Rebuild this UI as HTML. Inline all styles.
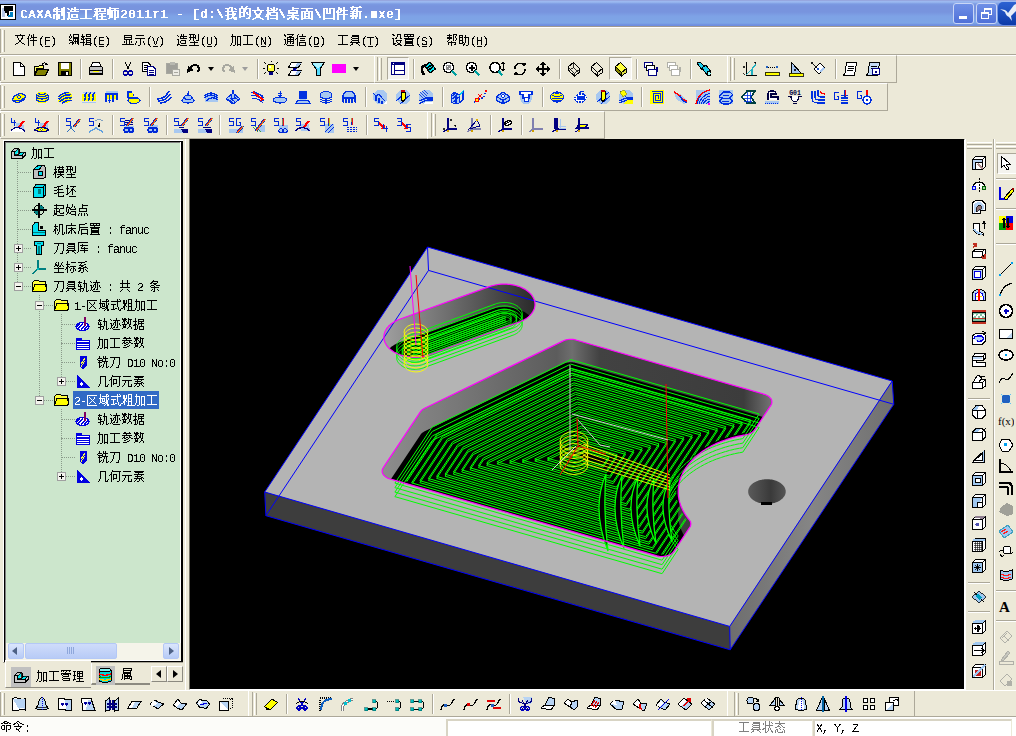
<!DOCTYPE html><html><head><meta charset="utf-8"><style>
*{margin:0;padding:0;box-sizing:border-box}
html,body{width:1016px;height:736px;overflow:hidden;background:#ECE9D8;font-family:"Liberation Sans",sans-serif;font-size:12px;color:#000}
.a{position:absolute}
.ic{position:absolute;width:16px;height:16px}
.sep{position:absolute;width:2px;border-left:1px solid #ACA899;border-right:1px solid #fff}
.grip{position:absolute;width:6px;border-left:1px solid #fff;border-right:1px solid #ACA899;box-shadow:inset -1px 0 0 #ECE9D8, inset -2px 0 0 #fff}
.cj{display:inline-block;text-align:center;overflow:visible;white-space:nowrap}
.mono{font-family:"Liberation Mono",monospace}
</style></head><body><div class="a" style="left:0;top:0;width:1016px;height:27px;background:linear-gradient(#97a7df 0,#97a7df 1px,#9cb9f0 1px,#9cb9f0 2px,#7b9ae2 4px,#7894de 6px,#7894de 12px,#7ea2e6 16px,#7ea6e6 23px,#6f8ee0 25px,#6f8ee0 26px,#a09a90 26px)"></div>
<svg class="ic" style="left:0.0px;top:4.0px;width:16px;height:16px" viewBox="0 0 16 16" shape-rendering="crispEdges"><rect x="0.5" y="0.5" width="15" height="15" fill="#fff" stroke="#000"/><rect x="2" y="4" width="3" height="9" fill="#b8c8e8"/><path d="M4 2H13V7H9V12H7V9H5V7H4Z" fill="#000"/><path d="M10 8H13V13H8V11H10Z" fill="#0080c0"/></svg>
<svg class="a" style="left:20px;top:4px" width="386" height="18" viewBox="0 0 386 18" shape-rendering="crispEdges"><path d="M221 2h2v1h-2zM226 2h2v1h-2zM332 2h2v1h-2zM339 2h2v1h-2zM36 3h2v1h-2zM43 3h2v1h-2zM54 3h2v1h-2zM89 3h2v1h-2zM209 3h4v1h-4zM221 3h2v1h-2zM225 3h2v1h-2zM237 3h2v1h-2zM247 3h2v1h-2zM253 3h2v1h-2zM272 3h2v1h-2zM318 3h2v1h-2zM323 3h2v1h-2zM330 3h12v1h-12zM34 4h4v1h-4zM41 4h4v1h-4zM47 4h2v1h-2zM51 4h2v1h-2zM54 4h2v1h-2zM75 4h11v1h-11zM89 4h10v1h-10zM205 4h5v1h-5zM211 4h2v1h-2zM214 4h2v1h-2zM219 4h12v1h-12zM237 4h2v1h-2zM247 4h2v1h-2zM250 4h2v1h-2zM253 4h2v1h-2zM256 4h2v1h-2zM272 4h7v1h-7zM281 4h12v1h-12zM303 4h5v1h-5zM309 4h6v1h-6zM318 4h4v1h-4zM323 4h2v1h-2zM331 4h2v1h-2zM336 4h2v1h-2zM33 5h7v1h-7zM41 5h4v1h-4zM48 5h2v1h-2zM51 5h8v1h-8zM60 5h12v1h-12zM74 5h4v1h-4zM79 5h2v1h-2zM84 5h2v1h-2zM87 5h4v1h-4zM94 5h2v1h-2zM174 5h5v1h-5zM185 5h2v1h-2zM197 5h2v1h-2zM207 5h2v1h-2zM211 5h2v1h-2zM215 5h2v1h-2zM219 5h2v1h-2zM223 5h4v1h-4zM229 5h2v1h-2zM237 5h3v1h-3zM247 5h2v1h-2zM251 5h4v1h-4zM256 5h2v1h-2zM259 5h2v1h-2zM272 5h2v1h-2zM286 5h2v1h-2zM295 5h2v1h-2zM303 5h2v1h-2zM306 5h2v1h-2zM309 5h2v1h-2zM313 5h2v1h-2zM318 5h4v1h-4zM323 5h2v1h-2zM331 5h2v1h-2zM334 5h4v1h-4zM375 5h5v1h-5zM2 6h4v1h-4zM11 6h2v1h-2zM17 6h2v1h-2zM21 6h2v1h-2zM27 6h2v1h-2zM33 6h2v1h-2zM36 6h2v1h-2zM41 6h4v1h-4zM50 6h2v1h-2zM54 6h2v1h-2zM65 6h2v1h-2zM76 6h2v1h-2zM79 6h2v1h-2zM84 6h2v1h-2zM87 6h12v1h-12zM102 6h4v1h-4zM110 6h4v1h-4zM119 6h2v1h-2zM127 6h2v1h-2zM143 6h2v1h-2zM174 6h2v1h-2zM185 6h2v1h-2zM197 6h2v1h-2zM207 6h2v1h-2zM211 6h2v1h-2zM219 6h2v1h-2zM223 6h3v1h-3zM229 6h2v1h-2zM232 6h12v1h-12zM246 6h11v1h-11zM259 6h2v1h-2zM268 6h10v1h-10zM286 6h2v1h-2zM295 6h2v1h-2zM303 6h2v1h-2zM306 6h2v1h-2zM309 6h2v1h-2zM313 6h2v1h-2zM317 6h2v1h-2zM320 6h8v1h-8zM333 6h2v1h-2zM336 6h2v1h-2zM378 6h2v1h-2zM1 7h2v1h-2zM5 7h2v1h-2zM10 7h4v1h-4zM17 7h6v1h-6zM26 7h4v1h-4zM33 7h12v1h-12zM50 7h9v1h-9zM65 7h2v1h-2zM74 7h12v1h-12zM87 7h6v1h-6zM94 7h2v1h-2zM97 7h2v1h-2zM101 7h2v1h-2zM105 7h2v1h-2zM109 7h2v1h-2zM113 7h2v1h-2zM117 7h4v1h-4zM125 7h4v1h-4zM133 7h6v1h-6zM141 7h4v1h-4zM174 7h2v1h-2zM182 7h5v1h-5zM191 7h2v1h-2zM198 7h2v1h-2zM205 7h12v1h-12zM219 7h2v1h-2zM223 7h3v1h-3zM229 7h2v1h-2zM234 7h2v1h-2zM240 7h2v1h-2zM247 7h2v1h-2zM253 7h2v1h-2zM260 7h2v1h-2zM268 7h2v1h-2zM276 7h2v1h-2zM281 7h12v1h-12zM296 7h2v1h-2zM303 7h2v1h-2zM306 7h2v1h-2zM309 7h2v1h-2zM313 7h2v1h-2zM316 7h3v1h-3zM320 7h2v1h-2zM323 7h2v1h-2zM330 7h12v1h-12zM351 7h6v1h-6zM359 7h2v1h-2zM363 7h2v1h-2zM368 7h4v1h-4zM378 7h2v1h-2zM1 8h2v1h-2zM10 8h4v1h-4zM18 8h4v1h-4zM26 8h4v1h-4zM36 8h2v1h-2zM41 8h4v1h-4zM47 8h3v1h-3zM65 8h2v1h-2zM75 8h3v1h-3zM87 8h6v1h-6zM94 8h2v1h-2zM97 8h2v1h-2zM105 8h2v1h-2zM109 8h2v1h-2zM113 8h2v1h-2zM119 8h2v1h-2zM127 8h2v1h-2zM134 8h3v1h-3zM143 8h2v1h-2zM174 8h2v1h-2zM181 8h2v1h-2zM184 8h3v1h-3zM191 8h2v1h-2zM198 8h3v1h-3zM207 8h2v1h-2zM212 8h2v1h-2zM219 8h6v1h-6zM226 8h2v1h-2zM229 8h2v1h-2zM234 8h2v1h-2zM240 8h2v1h-2zM247 8h11v1h-11zM260 8h3v1h-3zM268 8h10v1h-10zM281 8h2v1h-2zM284 8h2v1h-2zM288 8h2v1h-2zM291 8h2v1h-2zM296 8h3v1h-3zM303 8h2v1h-2zM306 8h2v1h-2zM309 8h2v1h-2zM313 8h2v1h-2zM316 8h5v1h-5zM323 8h2v1h-2zM332 8h2v1h-2zM336 8h2v1h-2zM339 8h2v1h-2zM351 8h6v1h-6zM360 8h4v1h-4zM367 8h2v1h-2zM371 8h2v1h-2zM378 8h2v1h-2zM1 9h2v1h-2zM10 9h4v1h-4zM19 9h2v1h-2zM26 9h4v1h-4zM36 9h2v1h-2zM41 9h4v1h-4zM48 9h2v1h-2zM65 9h2v1h-2zM75 9h3v1h-3zM79 9h7v1h-7zM87 9h6v1h-6zM94 9h2v1h-2zM97 9h2v1h-2zM104 9h3v1h-3zM109 9h6v1h-6zM119 9h2v1h-2zM127 9h2v1h-2zM134 9h2v1h-2zM143 9h2v1h-2zM174 9h2v1h-2zM181 9h2v1h-2zM185 9h2v1h-2zM199 9h2v1h-2zM207 9h2v1h-2zM212 9h4v1h-4zM219 9h2v1h-2zM223 9h2v1h-2zM226 9h2v1h-2zM229 9h2v1h-2zM235 9h2v1h-2zM239 9h2v1h-2zM247 9h4v1h-4zM256 9h2v1h-2zM261 9h2v1h-2zM268 9h10v1h-10zM281 9h2v1h-2zM284 9h6v1h-6zM291 9h2v1h-2zM297 9h2v1h-2zM303 9h2v1h-2zM306 9h5v1h-5zM313 9h2v1h-2zM317 9h2v1h-2zM323 9h2v1h-2zM330 9h8v1h-8zM339 9h2v1h-2zM351 9h6v1h-6zM360 9h4v1h-4zM367 9h2v1h-2zM371 9h2v1h-2zM378 9h2v1h-2zM1 10h2v1h-2zM9 10h2v1h-2zM13 10h2v1h-2zM18 10h4v1h-4zM25 10h2v1h-2zM29 10h2v1h-2zM33 10h7v1h-7zM41 10h4v1h-4zM48 10h2v1h-2zM51 10h7v1h-7zM65 10h2v1h-2zM74 10h5v1h-5zM81 10h2v1h-2zM87 10h6v1h-6zM94 10h2v1h-2zM97 10h2v1h-2zM103 10h3v1h-3zM109 10h2v1h-2zM113 10h2v1h-2zM119 10h2v1h-2zM127 10h2v1h-2zM134 10h2v1h-2zM143 10h2v1h-2zM158 10h4v1h-4zM174 10h2v1h-2zM181 10h2v1h-2zM185 10h2v1h-2zM199 10h3v1h-3zM207 10h9v1h-9zM219 10h2v1h-2zM223 10h2v1h-2zM227 10h4v1h-4zM235 10h6v1h-6zM246 10h5v1h-5zM256 10h2v1h-2zM261 10h3v1h-3zM272 10h2v1h-2zM281 10h2v1h-2zM284 10h2v1h-2zM288 10h2v1h-2zM291 10h2v1h-2zM297 10h3v1h-3zM303 10h2v1h-2zM313 10h2v1h-2zM317 10h11v1h-11zM332 10h2v1h-2zM336 10h2v1h-2zM339 10h2v1h-2zM351 10h6v1h-6zM361 10h2v1h-2zM367 10h6v1h-6zM378 10h2v1h-2zM1 11h2v1h-2zM9 11h6v1h-6zM18 11h4v1h-4zM25 11h6v1h-6zM33 11h2v1h-2zM36 11h4v1h-4zM41 11h4v1h-4zM48 11h2v1h-2zM51 11h2v1h-2zM56 11h2v1h-2zM65 11h2v1h-2zM74 11h4v1h-4zM81 11h2v1h-2zM89 11h4v1h-4zM94 11h2v1h-2zM97 11h2v1h-2zM102 11h2v1h-2zM109 11h2v1h-2zM113 11h2v1h-2zM119 11h2v1h-2zM127 11h2v1h-2zM134 11h2v1h-2zM143 11h2v1h-2zM174 11h2v1h-2zM181 11h2v1h-2zM185 11h2v1h-2zM200 11h2v1h-2zM205 11h4v1h-4zM212 11h3v1h-3zM219 11h2v1h-2zM223 11h2v1h-2zM229 11h2v1h-2zM236 11h4v1h-4zM246 11h3v1h-3zM250 11h8v1h-8zM262 11h2v1h-2zM267 11h12v1h-12zM281 11h2v1h-2zM284 11h2v1h-2zM288 11h2v1h-2zM291 11h2v1h-2zM298 11h2v1h-2zM303 11h2v1h-2zM313 11h2v1h-2zM317 11h2v1h-2zM323 11h2v1h-2zM330 11h8v1h-8zM339 11h2v1h-2zM351 11h6v1h-6zM360 11h4v1h-4zM367 11h2v1h-2zM378 11h2v1h-2zM1 12h3v1h-3zM5 12h2v1h-2zM9 12h2v1h-2zM13 12h2v1h-2zM17 12h2v1h-2zM21 12h2v1h-2zM25 12h2v1h-2zM29 12h2v1h-2zM33 12h2v1h-2zM36 12h4v1h-4zM43 12h2v1h-2zM48 12h2v1h-2zM51 12h2v1h-2zM56 12h2v1h-2zM65 12h2v1h-2zM73 12h2v1h-2zM76 12h2v1h-2zM79 12h7v1h-7zM89 12h4v1h-4zM94 12h2v1h-2zM97 12h2v1h-2zM101 12h2v1h-2zM109 12h2v1h-2zM113 12h2v1h-2zM119 12h2v1h-2zM127 12h2v1h-2zM134 12h2v1h-2zM143 12h2v1h-2zM174 12h2v1h-2zM181 12h2v1h-2zM184 12h3v1h-3zM191 12h2v1h-2zM201 12h2v1h-2zM207 12h2v1h-2zM212 12h2v1h-2zM219 12h6v1h-6zM229 12h2v1h-2zM236 12h4v1h-4zM245 12h4v1h-4zM256 12h2v1h-2zM263 12h2v1h-2zM271 12h4v1h-4zM281 12h2v1h-2zM284 12h6v1h-6zM291 12h2v1h-2zM299 12h2v1h-2zM303 12h2v1h-2zM313 12h2v1h-2zM317 12h2v1h-2zM323 12h2v1h-2zM330 12h8v1h-8zM339 12h2v1h-2zM345 12h2v1h-2zM351 12h6v1h-6zM360 12h4v1h-4zM367 12h2v1h-2zM371 12h2v1h-2zM378 12h2v1h-2zM2 13h5v1h-5zM8 13h2v1h-2zM14 13h2v1h-2zM17 13h2v1h-2zM21 13h2v1h-2zM24 13h2v1h-2zM30 13h2v1h-2zM33 13h2v1h-2zM36 13h4v1h-4zM43 13h2v1h-2zM48 13h2v1h-2zM51 13h7v1h-7zM65 13h2v1h-2zM76 13h2v1h-2zM81 13h2v1h-2zM89 13h4v1h-4zM94 13h5v1h-5zM101 13h6v1h-6zM110 13h4v1h-4zM117 13h7v1h-7zM125 13h7v1h-7zM134 13h2v1h-2zM141 13h7v1h-7zM174 13h2v1h-2zM182 13h5v1h-5zM191 13h2v1h-2zM201 13h2v1h-2zM207 13h2v1h-2zM211 13h6v1h-6zM219 13h2v1h-2zM228 13h2v1h-2zM235 13h6v1h-6zM247 13h2v1h-2zM256 13h2v1h-2zM263 13h2v1h-2zM269 13h8v1h-8zM281 13h2v1h-2zM284 13h2v1h-2zM288 13h2v1h-2zM291 13h2v1h-2zM299 13h2v1h-2zM303 13h2v1h-2zM313 13h2v1h-2zM317 13h2v1h-2zM323 13h2v1h-2zM332 13h2v1h-2zM335 13h2v1h-2zM339 13h2v1h-2zM345 13h2v1h-2zM351 13h6v1h-6zM359 13h2v1h-2zM363 13h2v1h-2zM368 13h4v1h-4zM378 13h2v1h-2zM33 14h2v1h-2zM36 14h4v1h-4zM43 14h2v1h-2zM47 14h4v1h-4zM60 14h12v1h-12zM76 14h2v1h-2zM81 14h2v1h-2zM88 14h2v1h-2zM94 14h2v1h-2zM174 14h2v1h-2zM207 14h5v1h-5zM213 14h4v1h-4zM226 14h4v1h-4zM233 14h3v1h-3zM240 14h3v1h-3zM247 14h2v1h-2zM250 14h8v1h-8zM267 14h3v1h-3zM272 14h2v1h-2zM275 14h4v1h-4zM281 14h12v1h-12zM303 14h12v1h-12zM317 14h2v1h-2zM323 14h2v1h-2zM331 14h3v1h-3zM335 14h2v1h-2zM339 14h2v1h-2zM378 14h2v1h-2zM36 15h2v1h-2zM41 15h4v1h-4zM47 15h2v1h-2zM50 15h9v1h-9zM76 15h11v1h-11zM94 15h2v1h-2zM174 15h5v1h-5zM206 15h3v1h-3zM214 15h3v1h-3zM232 15h2v1h-2zM242 15h2v1h-2zM247 15h2v1h-2zM256 15h2v1h-2zM267 15h2v1h-2zM272 15h2v1h-2zM277 15h2v1h-2zM281 15h2v1h-2zM291 15h2v1h-2zM303 15h2v1h-2zM313 15h2v1h-2zM317 15h2v1h-2zM323 15h2v1h-2zM375 15h5v1h-5z" fill="#fff"/></svg>
<div class="a" style="left:953px;top:3px;width:21px;height:21px;border:1px solid #c9d6f6;border-radius:3px;background:linear-gradient(#6f90e6,#4f70d8)"><div class="a" style="left:5px;top:12px;width:8px;height:3px;background:#fff"></div></div>
<div class="a" style="left:976px;top:3px;width:21px;height:21px;border:1px solid #c9d6f6;border-radius:3px;background:linear-gradient(#6f90e6,#4f70d8)"><div class="a" style="left:7px;top:4px;width:8px;height:7px;border:1px solid #fff;border-top-width:2px"></div><div class="a" style="left:4px;top:8px;width:8px;height:7px;border:1px solid #fff;border-top-width:2px;background:#5f80df"></div></div>
<div class="a" style="left:998px;top:2px;width:22px;height:23px;border-radius:5px;background:linear-gradient(#2d62d2,#0c3aa8)"></div>
<svg class="a" style="left:999px;top:2px" width="17" height="22" viewBox="0 0 17 22"><path d="M1 7L6 8Q8 9 9 11L15 3L17 2V9L12 14L13 19L10 15Q7 14 6 10Z" fill="#e8eef8"/></svg>
<div class="a" style="left:0;top:27px;width:1016px;height:1px;background:#fff"></div>
<div class="a" style="left:0;top:54px;width:1016px;height:1px;background:#ACA899"></div>
<div class="a" style="left:0;top:55px;width:1016px;height:1px;background:#fff"></div>
<div class="a" style="left:0px;top:55px;width:375px;height:28px;border-top:1px solid #fff;border-left:1px solid #fff;border-right:1px solid #ACA899;border-bottom:1px solid #ACA899"></div>
<div class="a" style="left:374px;top:55px;width:354px;height:28px;border-top:1px solid #fff;border-left:1px solid #fff;border-right:1px solid #ACA899;border-bottom:1px solid #ACA899"></div>
<div class="a" style="left:727px;top:55px;width:170px;height:28px;border-top:1px solid #fff;border-left:1px solid #fff;border-right:1px solid #ACA899;border-bottom:1px solid #ACA899"></div>
<div class="a" style="left:0px;top:83px;width:888px;height:28px;border-top:1px solid #fff;border-left:1px solid #fff;border-right:1px solid #ACA899;border-bottom:1px solid #ACA899"></div>
<div class="a" style="left:0px;top:111px;width:428px;height:28px;border-top:1px solid #fff;border-left:1px solid #fff;border-right:1px solid #ACA899;border-bottom:1px solid #ACA899"></div>
<div class="a" style="left:427px;top:111px;width:178px;height:28px;border-top:1px solid #fff;border-left:1px solid #fff;border-right:1px solid #ACA899;border-bottom:1px solid #ACA899"></div>
<div class="a" style="left:2px;top:30px;width:3px;height:22px;border-left:1px solid #fff;border-right:1px solid #ACA899"></div>
<div class="a" style="left:0px;top:29px;width:1px;height:24px;background:#ACA899"></div>
<svg class="a" style="left:13.5px;top:34px" width="46" height="16" viewBox="0 0 46 16" shape-rendering="crispEdges"><path d="M6 0h1v1h-1zM15 0h1v1h-1zM19 0h1v1h-1zM1 1h10v1h-10zM15 1h1v1h-1zM17 1h1v1h-1zM19 1h1v1h-1zM3 2h1v1h-1zM8 2h1v1h-1zM14 2h1v1h-1zM17 2h1v1h-1zM19 2h1v1h-1zM28 2h1v1h-1zM38 2h1v1h-1zM3 3h1v1h-1zM8 3h1v1h-1zM14 3h1v1h-1zM17 3h6v1h-6zM27 3h1v1h-1zM31 3h5v1h-5zM39 3h1v1h-1zM4 4h1v1h-1zM7 4h2v1h-2zM13 4h2v1h-2zM16 4h1v1h-1zM19 4h1v1h-1zM26 4h2v1h-2zM31 4h1v1h-1zM39 4h2v1h-2zM4 5h1v1h-1zM7 5h1v1h-1zM14 5h1v1h-1zM19 5h1v1h-1zM26 5h1v1h-1zM31 5h1v1h-1zM40 5h1v1h-1zM5 6h2v1h-2zM14 6h1v1h-1zM16 6h7v1h-7zM26 6h1v1h-1zM31 6h5v1h-5zM40 6h1v1h-1zM5 7h2v1h-2zM14 7h1v1h-1zM19 7h1v1h-1zM26 7h1v1h-1zM31 7h1v1h-1zM40 7h1v1h-1zM4 8h1v1h-1zM7 8h1v1h-1zM14 8h1v1h-1zM19 8h1v1h-1zM26 8h1v1h-1zM31 8h1v1h-1zM40 8h1v1h-1zM2 9h2v1h-2zM8 9h2v1h-2zM14 9h1v1h-1zM19 9h1v1h-1zM26 9h1v1h-1zM31 9h1v1h-1zM40 9h1v1h-1zM1 10h1v1h-1zM10 10h1v1h-1zM14 10h1v1h-1zM19 10h1v1h-1zM26 10h2v1h-2zM31 10h1v1h-1zM39 10h2v1h-2zM14 11h1v1h-1zM19 11h1v1h-1zM27 11h1v1h-1zM39 11h1v1h-1zM28 12h1v1h-1zM38 12h1v1h-1z" fill="#000"/></svg>
<div class="a" style="left:44.5px;top:46px;width:5px;height:1px;background:#000"></div>
<svg class="a" style="left:67.7px;top:34px" width="46" height="16" viewBox="0 0 46 16" shape-rendering="crispEdges"><path d="M2 0h1v1h-1zM5 0h6v1h-6zM14 0h1v1h-1zM18 0h5v1h-5zM2 1h1v1h-1zM5 1h1v1h-1zM10 1h1v1h-1zM14 1h1v1h-1zM18 1h1v1h-1zM22 1h1v1h-1zM1 2h1v1h-1zM3 2h1v1h-1zM5 2h1v1h-1zM10 2h1v1h-1zM13 2h4v1h-4zM18 2h5v1h-5zM28 2h1v1h-1zM38 2h1v1h-1zM1 3h1v1h-1zM3 3h1v1h-1zM5 3h6v1h-6zM14 3h2v1h-2zM27 3h1v1h-1zM31 3h5v1h-5zM39 3h1v1h-1zM2 4h1v1h-1zM5 4h6v1h-6zM13 4h1v1h-1zM15 4h1v1h-1zM17 4h6v1h-6zM26 4h2v1h-2zM31 4h1v1h-1zM39 4h2v1h-2zM1 5h1v1h-1zM5 5h1v1h-1zM7 5h1v1h-1zM9 5h2v1h-2zM13 5h4v1h-4zM18 5h1v1h-1zM22 5h1v1h-1zM26 5h1v1h-1zM31 5h1v1h-1zM40 5h1v1h-1zM1 6h3v1h-3zM5 6h1v1h-1zM7 6h1v1h-1zM9 6h2v1h-2zM15 6h1v1h-1zM18 6h5v1h-5zM26 6h1v1h-1zM31 6h5v1h-5zM40 6h1v1h-1zM4 7h1v1h-1zM6 7h5v1h-5zM15 7h1v1h-1zM18 7h1v1h-1zM22 7h1v1h-1zM26 7h1v1h-1zM31 7h1v1h-1zM40 7h1v1h-1zM2 8h4v1h-4zM7 8h1v1h-1zM9 8h2v1h-2zM12 8h5v1h-5zM18 8h5v1h-5zM26 8h1v1h-1zM31 8h1v1h-1zM40 8h1v1h-1zM1 9h1v1h-1zM4 9h2v1h-2zM7 9h1v1h-1zM9 9h2v1h-2zM15 9h1v1h-1zM18 9h1v1h-1zM22 9h2v1h-2zM26 9h1v1h-1zM31 9h1v1h-1zM40 9h1v1h-1zM4 10h1v1h-1zM10 10h1v1h-1zM15 10h1v1h-1zM17 10h6v1h-6zM26 10h2v1h-2zM31 10h5v1h-5zM39 10h2v1h-2zM15 11h1v1h-1zM22 11h1v1h-1zM27 11h1v1h-1zM39 11h1v1h-1zM28 12h1v1h-1zM38 12h1v1h-1z" fill="#000"/></svg>
<div class="a" style="left:98.7px;top:46px;width:5px;height:1px;background:#000"></div>
<svg class="a" style="left:121.8px;top:34px" width="46" height="16" viewBox="0 0 46 16" shape-rendering="crispEdges"><path d="M2 1h8v1h-8zM14 1h8v1h-8zM2 2h1v1h-1zM9 2h1v1h-1zM28 2h1v1h-1zM38 2h1v1h-1zM2 3h8v1h-8zM27 3h1v1h-1zM30 3h1v1h-1zM36 3h1v1h-1zM39 3h1v1h-1zM2 4h1v1h-1zM9 4h1v1h-1zM13 4h10v1h-10zM26 4h2v1h-2zM31 4h1v1h-1zM35 4h1v1h-1zM39 4h2v1h-2zM2 5h8v1h-8zM18 5h1v1h-1zM26 5h1v1h-1zM31 5h1v1h-1zM35 5h1v1h-1zM40 5h1v1h-1zM4 6h1v1h-1zM7 6h1v1h-1zM18 6h1v1h-1zM26 6h1v1h-1zM31 6h1v1h-1zM35 6h1v1h-1zM40 6h1v1h-1zM2 7h1v1h-1zM4 7h1v1h-1zM7 7h1v1h-1zM9 7h1v1h-1zM14 7h1v1h-1zM18 7h1v1h-1zM21 7h1v1h-1zM26 7h1v1h-1zM32 7h1v1h-1zM34 7h1v1h-1zM40 7h1v1h-1zM2 8h1v1h-1zM4 8h1v1h-1zM7 8h1v1h-1zM9 8h1v1h-1zM14 8h1v1h-1zM18 8h1v1h-1zM21 8h1v1h-1zM26 8h1v1h-1zM32 8h1v1h-1zM34 8h1v1h-1zM40 8h1v1h-1zM4 9h1v1h-1zM7 9h1v1h-1zM13 9h1v1h-1zM18 9h1v1h-1zM22 9h1v1h-1zM26 9h1v1h-1zM32 9h1v1h-1zM34 9h1v1h-1zM40 9h1v1h-1zM0 10h12v1h-12zM13 10h1v1h-1zM18 10h1v1h-1zM22 10h1v1h-1zM26 10h2v1h-2zM33 10h1v1h-1zM39 10h2v1h-2zM16 11h2v1h-2zM27 11h1v1h-1zM39 11h1v1h-1zM28 12h1v1h-1zM38 12h1v1h-1z" fill="#000"/></svg>
<div class="a" style="left:152.8px;top:46px;width:5px;height:1px;background:#000"></div>
<svg class="a" style="left:176px;top:34px" width="46" height="16" viewBox="0 0 46 16" shape-rendering="crispEdges"><path d="M5 0h1v1h-1zM7 0h1v1h-1zM13 0h6v1h-6zM22 0h1v1h-1zM1 1h1v1h-1zM5 1h1v1h-1zM7 1h1v1h-1zM14 1h1v1h-1zM17 1h1v1h-1zM19 1h1v1h-1zM22 1h1v1h-1zM2 2h1v1h-1zM4 2h7v1h-7zM14 2h1v1h-1zM17 2h1v1h-1zM19 2h1v1h-1zM22 2h1v1h-1zM28 2h1v1h-1zM38 2h1v1h-1zM4 3h1v1h-1zM7 3h1v1h-1zM13 3h7v1h-7zM22 3h1v1h-1zM27 3h1v1h-1zM31 3h1v1h-1zM35 3h1v1h-1zM39 3h1v1h-1zM4 4h7v1h-7zM14 4h1v1h-1zM17 4h1v1h-1zM19 4h1v1h-1zM22 4h1v1h-1zM26 4h2v1h-2zM31 4h1v1h-1zM35 4h1v1h-1zM39 4h2v1h-2zM1 5h2v1h-2zM14 5h1v1h-1zM17 5h1v1h-1zM22 5h1v1h-1zM26 5h1v1h-1zM31 5h1v1h-1zM35 5h1v1h-1zM40 5h1v1h-1zM2 6h1v1h-1zM5 6h5v1h-5zM13 6h1v1h-1zM17 6h1v1h-1zM20 6h3v1h-3zM26 6h1v1h-1zM31 6h1v1h-1zM35 6h1v1h-1zM40 6h1v1h-1zM2 7h1v1h-1zM4 7h1v1h-1zM9 7h1v1h-1zM18 7h1v1h-1zM26 7h1v1h-1zM31 7h1v1h-1zM35 7h1v1h-1zM40 7h1v1h-1zM2 8h1v1h-1zM4 8h1v1h-1zM9 8h1v1h-1zM14 8h8v1h-8zM26 8h1v1h-1zM31 8h1v1h-1zM35 8h1v1h-1zM40 8h1v1h-1zM2 9h1v1h-1zM5 9h5v1h-5zM18 9h1v1h-1zM26 9h1v1h-1zM31 9h1v1h-1zM35 9h1v1h-1zM40 9h1v1h-1zM1 10h3v1h-3zM18 10h1v1h-1zM26 10h2v1h-2zM32 10h3v1h-3zM39 10h2v1h-2zM1 11h1v1h-1zM4 11h7v1h-7zM13 11h10v1h-10zM27 11h1v1h-1zM39 11h1v1h-1zM28 12h1v1h-1zM38 12h1v1h-1z" fill="#000"/></svg>
<div class="a" style="left:207px;top:46px;width:5px;height:1px;background:#000"></div>
<svg class="a" style="left:230px;top:34px" width="46" height="16" viewBox="0 0 46 16" shape-rendering="crispEdges"><path d="M2 0h1v1h-1zM2 1h1v1h-1zM13 1h10v1h-10zM1 2h5v1h-5zM7 2h4v1h-4zM17 2h1v1h-1zM28 2h1v1h-1zM38 2h1v1h-1zM2 3h1v1h-1zM5 3h1v1h-1zM7 3h1v1h-1zM10 3h1v1h-1zM17 3h1v1h-1zM27 3h1v1h-1zM31 3h1v1h-1zM35 3h1v1h-1zM39 3h1v1h-1zM2 4h1v1h-1zM5 4h1v1h-1zM7 4h1v1h-1zM10 4h1v1h-1zM17 4h1v1h-1zM26 4h2v1h-2zM31 4h2v1h-2zM35 4h1v1h-1zM39 4h2v1h-2zM2 5h1v1h-1zM5 5h1v1h-1zM7 5h1v1h-1zM10 5h1v1h-1zM17 5h1v1h-1zM26 5h1v1h-1zM31 5h2v1h-2zM35 5h1v1h-1zM40 5h1v1h-1zM2 6h1v1h-1zM5 6h1v1h-1zM7 6h1v1h-1zM10 6h1v1h-1zM17 6h1v1h-1zM26 6h1v1h-1zM31 6h1v1h-1zM33 6h1v1h-1zM35 6h1v1h-1zM40 6h1v1h-1zM2 7h1v1h-1zM5 7h1v1h-1zM7 7h1v1h-1zM10 7h1v1h-1zM17 7h1v1h-1zM26 7h1v1h-1zM31 7h1v1h-1zM33 7h1v1h-1zM35 7h1v1h-1zM40 7h1v1h-1zM2 8h1v1h-1zM5 8h1v1h-1zM7 8h1v1h-1zM10 8h1v1h-1zM17 8h1v1h-1zM26 8h1v1h-1zM31 8h1v1h-1zM34 8h2v1h-2zM40 8h1v1h-1zM1 9h1v1h-1zM5 9h1v1h-1zM7 9h1v1h-1zM10 9h1v1h-1zM17 9h1v1h-1zM26 9h1v1h-1zM31 9h1v1h-1zM34 9h2v1h-2zM40 9h1v1h-1zM1 10h1v1h-1zM5 10h1v1h-1zM7 10h4v1h-4zM13 10h10v1h-10zM26 10h2v1h-2zM31 10h1v1h-1zM35 10h1v1h-1zM39 10h2v1h-2zM0 11h1v1h-1zM3 11h2v1h-2zM7 11h1v1h-1zM10 11h1v1h-1zM27 11h1v1h-1zM39 11h1v1h-1zM28 12h1v1h-1zM38 12h1v1h-1z" fill="#000"/></svg>
<div class="a" style="left:261px;top:46px;width:5px;height:1px;background:#000"></div>
<svg class="a" style="left:283px;top:34px" width="46" height="16" viewBox="0 0 46 16" shape-rendering="crispEdges"><path d="M1 0h1v1h-1zM4 0h7v1h-7zM15 0h1v1h-1zM19 0h1v1h-1zM1 1h2v1h-2zM9 1h1v1h-1zM14 1h1v1h-1zM19 1h1v1h-1zM2 2h1v1h-1zM6 2h3v1h-3zM14 2h1v1h-1zM16 2h7v1h-7zM28 2h1v1h-1zM38 2h1v1h-1zM4 3h7v1h-7zM14 3h1v1h-1zM27 3h1v1h-1zM31 3h4v1h-4zM39 3h1v1h-1zM4 4h1v1h-1zM7 4h1v1h-1zM10 4h1v1h-1zM13 4h2v1h-2zM17 4h5v1h-5zM26 4h2v1h-2zM31 4h1v1h-1zM34 4h2v1h-2zM39 4h2v1h-2zM1 5h2v1h-2zM4 5h7v1h-7zM12 5h1v1h-1zM14 5h1v1h-1zM26 5h1v1h-1zM31 5h1v1h-1zM35 5h1v1h-1zM40 5h1v1h-1zM2 6h1v1h-1zM4 6h1v1h-1zM7 6h1v1h-1zM10 6h1v1h-1zM14 6h1v1h-1zM17 6h5v1h-5zM26 6h1v1h-1zM31 6h1v1h-1zM35 6h1v1h-1zM40 6h1v1h-1zM2 7h1v1h-1zM4 7h7v1h-7zM14 7h1v1h-1zM26 7h1v1h-1zM31 7h1v1h-1zM35 7h1v1h-1zM40 7h1v1h-1zM2 8h1v1h-1zM4 8h1v1h-1zM7 8h1v1h-1zM10 8h1v1h-1zM14 8h1v1h-1zM16 8h7v1h-7zM26 8h1v1h-1zM31 8h1v1h-1zM35 8h1v1h-1zM40 8h1v1h-1zM2 9h1v1h-1zM4 9h1v1h-1zM7 9h1v1h-1zM9 9h2v1h-2zM14 9h1v1h-1zM16 9h1v1h-1zM22 9h1v1h-1zM26 9h1v1h-1zM31 9h1v1h-1zM34 9h2v1h-2zM40 9h1v1h-1zM1 10h1v1h-1zM3 10h1v1h-1zM14 10h1v1h-1zM16 10h1v1h-1zM22 10h1v1h-1zM26 10h2v1h-2zM31 10h4v1h-4zM39 10h2v1h-2zM4 11h7v1h-7zM14 11h1v1h-1zM16 11h7v1h-7zM27 11h1v1h-1zM39 11h1v1h-1zM28 12h1v1h-1zM38 12h1v1h-1z" fill="#000"/></svg>
<div class="a" style="left:314px;top:46px;width:5px;height:1px;background:#000"></div>
<svg class="a" style="left:337px;top:34px" width="46" height="16" viewBox="0 0 46 16" shape-rendering="crispEdges"><path d="M1 1h10v1h-10zM15 1h7v1h-7zM5 2h1v1h-1zM15 2h7v1h-7zM28 2h1v1h-1zM38 2h1v1h-1zM5 3h1v1h-1zM14 3h1v1h-1zM21 3h1v1h-1zM27 3h1v1h-1zM30 3h7v1h-7zM39 3h1v1h-1zM5 4h1v1h-1zM15 4h7v1h-7zM26 4h2v1h-2zM33 4h1v1h-1zM39 4h2v1h-2zM5 5h1v1h-1zM14 5h1v1h-1zM21 5h1v1h-1zM26 5h1v1h-1zM33 5h1v1h-1zM40 5h1v1h-1zM5 6h1v1h-1zM15 6h7v1h-7zM26 6h1v1h-1zM33 6h1v1h-1zM40 6h1v1h-1zM5 7h1v1h-1zM14 7h1v1h-1zM21 7h1v1h-1zM26 7h1v1h-1zM33 7h1v1h-1zM40 7h1v1h-1zM5 8h1v1h-1zM13 8h10v1h-10zM26 8h1v1h-1zM33 8h1v1h-1zM40 8h1v1h-1zM5 9h1v1h-1zM15 9h1v1h-1zM19 9h2v1h-2zM26 9h1v1h-1zM33 9h1v1h-1zM40 9h1v1h-1zM1 10h10v1h-10zM14 10h2v1h-2zM21 10h1v1h-1zM26 10h2v1h-2zM33 10h1v1h-1zM39 10h2v1h-2zM13 11h1v1h-1zM22 11h1v1h-1zM27 11h1v1h-1zM39 11h1v1h-1zM28 12h1v1h-1zM38 12h1v1h-1z" fill="#000"/></svg>
<div class="a" style="left:368px;top:46px;width:5px;height:1px;background:#000"></div>
<svg class="a" style="left:391px;top:34px" width="46" height="16" viewBox="0 0 46 16" shape-rendering="crispEdges"><path d="M1 0h2v1h-2zM6 0h4v1h-4zM13 0h10v1h-10zM2 1h2v1h-2zM6 1h1v1h-1zM9 1h1v1h-1zM13 1h1v1h-1zM16 1h1v1h-1zM19 1h1v1h-1zM22 1h1v1h-1zM6 2h1v1h-1zM9 2h1v1h-1zM13 2h10v1h-10zM28 2h1v1h-1zM38 2h1v1h-1zM5 3h1v1h-1zM9 3h1v1h-1zM17 3h1v1h-1zM27 3h1v1h-1zM32 3h3v1h-3zM39 3h1v1h-1zM1 4h2v1h-2zM4 4h2v1h-2zM9 4h2v1h-2zM13 4h10v1h-10zM26 4h2v1h-2zM31 4h1v1h-1zM35 4h1v1h-1zM39 4h2v1h-2zM2 5h1v1h-1zM14 5h8v1h-8zM26 5h1v1h-1zM31 5h1v1h-1zM40 5h1v1h-1zM2 6h1v1h-1zM5 6h6v1h-6zM14 6h1v1h-1zM21 6h1v1h-1zM26 6h1v1h-1zM31 6h3v1h-3zM40 6h1v1h-1zM2 7h1v1h-1zM5 7h1v1h-1zM9 7h1v1h-1zM14 7h8v1h-8zM26 7h1v1h-1zM34 7h2v1h-2zM40 7h1v1h-1zM2 8h1v1h-1zM6 8h1v1h-1zM9 8h1v1h-1zM14 8h8v1h-8zM26 8h1v1h-1zM35 8h1v1h-1zM40 8h1v1h-1zM2 9h3v1h-3zM7 9h2v1h-2zM14 9h8v1h-8zM26 9h1v1h-1zM31 9h1v1h-1zM35 9h1v1h-1zM40 9h1v1h-1zM2 10h2v1h-2zM6 10h4v1h-4zM14 10h1v1h-1zM21 10h1v1h-1zM26 10h2v1h-2zM31 10h5v1h-5zM39 10h2v1h-2zM4 11h2v1h-2zM9 11h2v1h-2zM13 11h10v1h-10zM27 11h1v1h-1zM39 11h1v1h-1zM28 12h1v1h-1zM38 12h1v1h-1z" fill="#000"/></svg>
<div class="a" style="left:422px;top:46px;width:5px;height:1px;background:#000"></div>
<svg class="a" style="left:445.5px;top:34px" width="46" height="16" viewBox="0 0 46 16" shape-rendering="crispEdges"><path d="M3 0h1v1h-1zM7 0h4v1h-4zM1 1h5v1h-5zM7 1h1v1h-1zM10 1h1v1h-1zM13 1h4v1h-4zM19 1h1v1h-1zM3 2h1v1h-1zM7 2h1v1h-1zM9 2h1v1h-1zM13 2h1v1h-1zM16 2h1v1h-1zM19 2h1v1h-1zM28 2h1v1h-1zM38 2h1v1h-1zM1 3h5v1h-5zM7 3h1v1h-1zM9 3h1v1h-1zM13 3h4v1h-4zM18 3h5v1h-5zM27 3h1v1h-1zM31 3h1v1h-1zM35 3h1v1h-1zM39 3h1v1h-1zM1 4h5v1h-5zM7 4h1v1h-1zM10 4h1v1h-1zM13 4h1v1h-1zM16 4h1v1h-1zM19 4h1v1h-1zM22 4h1v1h-1zM26 4h2v1h-2zM31 4h1v1h-1zM35 4h1v1h-1zM39 4h2v1h-2zM3 5h1v1h-1zM7 5h1v1h-1zM10 5h1v1h-1zM13 5h1v1h-1zM16 5h1v1h-1zM19 5h1v1h-1zM22 5h1v1h-1zM26 5h1v1h-1zM31 5h1v1h-1zM35 5h1v1h-1zM40 5h1v1h-1zM2 6h1v1h-1zM7 6h1v1h-1zM9 6h1v1h-1zM13 6h4v1h-4zM19 6h1v1h-1zM22 6h1v1h-1zM26 6h1v1h-1zM31 6h5v1h-5zM40 6h1v1h-1zM1 7h1v1h-1zM5 7h1v1h-1zM13 7h1v1h-1zM16 7h1v1h-1zM19 7h1v1h-1zM22 7h1v1h-1zM26 7h1v1h-1zM31 7h1v1h-1zM35 7h1v1h-1zM40 7h1v1h-1zM2 8h8v1h-8zM13 8h1v1h-1zM16 8h2v1h-2zM19 8h1v1h-1zM22 8h1v1h-1zM26 8h1v1h-1zM31 8h1v1h-1zM35 8h1v1h-1zM40 8h1v1h-1zM2 9h1v1h-1zM5 9h1v1h-1zM9 9h1v1h-1zM13 9h4v1h-4zM18 9h1v1h-1zM22 9h1v1h-1zM26 9h1v1h-1zM31 9h1v1h-1zM35 9h1v1h-1zM40 9h1v1h-1zM2 10h1v1h-1zM5 10h1v1h-1zM8 10h2v1h-2zM17 10h2v1h-2zM22 10h1v1h-1zM26 10h2v1h-2zM31 10h1v1h-1zM35 10h1v1h-1zM39 10h2v1h-2zM5 11h1v1h-1zM17 11h1v1h-1zM20 11h2v1h-2zM27 11h1v1h-1zM39 11h1v1h-1zM28 12h1v1h-1zM38 12h1v1h-1z" fill="#000"/></svg>
<div class="a" style="left:476.5px;top:46px;width:5px;height:1px;background:#000"></div>
<div class="a" style="left:2px;top:58px;width:3px;height:22px;border-left:1px solid #fff;border-right:1px solid #ACA899"></div>
<div class="a" style="left:0px;top:57px;width:1px;height:24px;background:#ACA899"></div>
<svg class="ic" style="left:11.0px;top:60.5px;width:16px;height:16px" viewBox="0 0 16 16" shape-rendering="crispEdges"><path d="M2.5 1.5H9.5L13.5 5.5V14.5H2.5Z" fill="#fff" stroke="#000"/><path d="M9.5 1.5V5.5H13.5" fill="none" stroke="#000"/></svg>
<svg class="ic" style="left:33.0px;top:60.5px;width:16px;height:16px" viewBox="0 0 16 16" shape-rendering="crispEdges"><path d="M1.5 5.5H5.5L6.5 4.5H10.5V7.5H4L1.5 14.5Z" fill="#ffff60" stroke="#000"/><path d="M1.5 14.5L4.5 8.5H15.5L12.5 14.5Z" fill="#808000" stroke="#000"/><path d="M9 3.5Q11 0.5 14 3" fill="none" stroke="#000"/><path d="M13 1L15 4L12 4Z" fill="#000"/></svg>
<svg class="ic" style="left:57.0px;top:60.5px;width:16px;height:16px" viewBox="0 0 16 16" shape-rendering="crispEdges"><path d="M1.5 1.5H14.5V14.5H1.5Z" fill="#808000" stroke="#000"/><rect x="4" y="2" width="8" height="6" fill="#fff"/><rect x="4" y="10" width="8" height="5" fill="#000"/><rect x="9" y="11" width="2" height="3" fill="#fff"/></svg>
<svg class="ic" style="left:88.0px;top:60.5px;width:16px;height:16px" viewBox="0 0 16 16" shape-rendering="crispEdges"><path d="M4.5 1.5H11.5L13 5H3Z" fill="#fff" stroke="#000"/><path d="M1.5 7.5Q1.5 5.5 4 5.5H12Q14.5 5.5 14.5 7.5V13.5H1.5Z" fill="#c0c0c0" stroke="#000"/><rect x="2" y="9" width="12" height="1" fill="#000"/><rect x="5" y="10" width="6" height="1" fill="#ff0"/><rect x="2" y="11.5" width="12" height="1.3" fill="#000"/></svg>
<svg class="ic" style="left:120.0px;top:60.5px;width:16px;height:16px" viewBox="0 0 16 16" shape-rendering="crispEdges"><path d="M5 1L8.5 8M11 1L7.5 8" stroke="#000" fill="none"/><circle cx="5.5" cy="12" r="2.2" fill="none" stroke="#0000a0" stroke-width="1.4"/><circle cx="10.5" cy="12" r="2.2" fill="none" stroke="#0000a0" stroke-width="1.4"/></svg>
<svg class="ic" style="left:141.0px;top:60.5px;width:16px;height:16px" viewBox="0 0 16 16" shape-rendering="crispEdges"><path d="M1.5 1.5H7L9 3.5V10.5H1.5Z" fill="#fff" stroke="#000"/><path d="M3 4H7M3 6H7M3 8H7" stroke="#000"/><path d="M6.5 5.5H12L14.5 8V14.5H6.5Z" fill="#fff" stroke="#000080"/><path d="M8 9H13M8 11H13M8 13H13" stroke="#000080"/></svg>
<svg class="ic" style="left:165.0px;top:60.5px;width:16px;height:16px" viewBox="0 0 16 16" shape-rendering="crispEdges"><path d="M1.5 2.5H12.5V12.5H1.5Z" fill="#a0a09a" stroke="#a8a8a0"/><rect x="5" y="1" width="5" height="3" fill="#b8b8b0"/><path d="M7.5 8.5H14.5V14.5H7.5Z" fill="#ecebe4" stroke="#a8a8a0"/><path d="M9 11H13" stroke="#a8a8a0"/></svg>
<svg class="ic" style="left:186.0px;top:60.5px;width:16px;height:16px" viewBox="0 0 16 16" shape-rendering="crispEdges"><path d="M4 7Q8 2 12 5Q14 8 12 11" fill="none" stroke="#000" stroke-width="2"/><path d="M1 12L2 5L8 9Z" fill="#000"/></svg>
<svg class="ic" style="left:220.0px;top:60.5px;width:16px;height:16px" viewBox="0 0 16 16" shape-rendering="crispEdges"><path d="M12 7Q8 2 4 5Q2 8 4 11" fill="none" stroke="#a8a8a0" stroke-width="2"/><path d="M15 12L14 5L8 9Z" fill="#a8a8a0"/></svg>
<svg class="ic" style="left:263.0px;top:60.5px;width:16px;height:16px" viewBox="0 0 16 16" shape-rendering="crispEdges"><circle cx="8" cy="7" r="4" fill="#ffff40" stroke="#000"/><circle cx="7" cy="6" r="1" fill="#fff"/><rect x="6" y="11" width="4" height="3" fill="#000080"/><path d="M1 1L3 3M15 1L13 3M1 13L3 11M15 13L13 11M0 7H2M14 7H16M8 0V1" stroke="#000"/></svg>
<svg class="ic" style="left:287.0px;top:60.5px;width:16px;height:16px" viewBox="0 0 16 16" shape-rendering="crispEdges"><path d="M4.5 1.5H14.5L11.5 6.5H1.5Z" fill="#fff" stroke="#000"/><path d="M10 2H14L11 6H8Z" fill="#a6c6f0"/><path d="M4.5 9.5H14.5L11.5 14.5H1.5Z" fill="#fff" stroke="#000"/><path d="M10 10H14L11 14H8Z" fill="#a6c6f0"/><path d="M6 7H10L6 9H10" fill="#00f" stroke="#000080"/></svg>
<svg class="ic" style="left:310.0px;top:60.5px;width:16px;height:16px" viewBox="0 0 16 16" shape-rendering="crispEdges"><path d="M1.5 1.5H14.5L10 8V14.5H6V8Z" fill="#5df" stroke="#000"/><path d="M3 2H13L9 7H7Z" fill="#b0f4ff"/></svg>
<div class="a" style="left:208px;top:67px;width:0;height:0;border-left:3.5px solid transparent;border-right:3.5px solid transparent;border-top:4px solid #000"></div>
<div class="a" style="left:242px;top:67px;width:0;height:0;border-left:3.5px solid transparent;border-right:3.5px solid transparent;border-top:4px solid #9d9d9d"></div>
<div class="a" style="left:353px;top:67px;width:0;height:0;border-left:3.5px solid transparent;border-right:3.5px solid transparent;border-top:4px solid #000"></div>
<div class="a" style="left:332px;top:64px;width:14px;height:9px;background:#ff00ff"></div>
<div class="a" style="left:80px;top:59px;width:1px;height:20px;background:#ACA899"></div><div class="a" style="left:81px;top:59px;width:1px;height:20px;background:#fff"></div>
<div class="a" style="left:112px;top:59px;width:1px;height:20px;background:#ACA899"></div><div class="a" style="left:113px;top:59px;width:1px;height:20px;background:#fff"></div>
<div class="a" style="left:256.7px;top:59px;width:1px;height:20px;background:#ACA899"></div><div class="a" style="left:257.7px;top:59px;width:1px;height:20px;background:#fff"></div>
<div class="a" style="left:379px;top:58px;width:3px;height:22px;border-left:1px solid #fff;border-right:1px solid #ACA899"></div>
<div class="a" style="left:377px;top:57px;width:1px;height:24px;background:#ACA899"></div>
<div class="a" style="left:387px;top:57px;width:22px;height:23px;border:1px solid;border-color:#ACA899 #fff #fff #ACA899;background:#f4f3ee"></div>
<svg class="ic" style="left:390.0px;top:60.5px;width:16px;height:16px" viewBox="0 0 16 16" shape-rendering="crispEdges"><rect x="1.5" y="1.5" width="13" height="12" fill="#fff" stroke="#000080"/><rect x="1" y="1" width="14" height="3" fill="#000080"/><rect x="3" y="2" width="1" height="1" fill="#fff"/><path d="M4.5 4V13.5M4.5 9.5H14" stroke="#000080"/></svg>
<svg class="ic" style="left:420.0px;top:60.5px;width:16px;height:16px" viewBox="0 0 16 16" shape-rendering="crispEdges"><path d="M5 5L10 1L15.5 8L10 12Z" fill="#00e8f0" stroke="#000" stroke-width="1.2"/><path d="M7 7L12 3.5M8.5 9L13.5 5.5" stroke="#000" stroke-width="1.6"/><path d="M6 4Q1 5 2 10L4 14" stroke="#000" stroke-width="2.6" fill="none"/></svg>
<svg class="ic" style="left:442.0px;top:60.5px;width:16px;height:16px" viewBox="0 0 16 16" shape-rendering="crispEdges"><circle cx="6.5" cy="6.5" r="5" fill="#fff" stroke="#000" stroke-width="1.5"/><rect x="4" y="4" width="5" height="5" fill="#888"/><rect x="5" y="5" width="1" height="1" fill="#fff"/><rect x="7" y="7" width="1" height="1" fill="#fff"/><path d="M10 10L14.5 14.5" stroke="#00a0a0" stroke-width="2.5"/></svg>
<svg class="ic" style="left:465.0px;top:60.5px;width:16px;height:16px" viewBox="0 0 16 16" shape-rendering="crispEdges"><circle cx="6.5" cy="6.5" r="5" fill="#fff" stroke="#000" stroke-width="1.5"/><path d="M3.5 6.5H9.5M6.5 3.5V9.5" stroke="#000" stroke-width="2"/><path d="M10 10L14.5 14.5" stroke="#00a0a0" stroke-width="2.5"/></svg>
<svg class="ic" style="left:489.0px;top:60.5px;width:16px;height:16px" viewBox="0 0 16 16" shape-rendering="crispEdges"><circle cx="6" cy="6.5" r="5" fill="#fff" stroke="#000" stroke-width="1.5"/><path d="M9.5 10L13.5 14.5" stroke="#00a0a0" stroke-width="2.5"/><path d="M14 1V10" stroke="#000"/><path d="M12 3L14 0.5L16 3ZM12 8L14 10.5L16 8Z" fill="#000"/></svg>
<svg class="ic" style="left:512.0px;top:60.5px;width:16px;height:16px" viewBox="0 0 16 16" shape-rendering="crispEdges"><path d="M3 8A5 5 0 0 1 12 4.5M13 8A5 5 0 0 1 4 11.5" fill="none" stroke="#000" stroke-width="1.5"/><path d="M10 2L14 2L13 6Z" fill="#000"/><path d="M6 14L2 14L3 10Z" fill="#000"/></svg>
<svg class="ic" style="left:535.0px;top:60.5px;width:16px;height:16px" viewBox="0 0 16 16" shape-rendering="crispEdges"><path d="M8 1V15M1 8H15" stroke="#000" stroke-width="1.5"/><path d="M5 4L8 0.5L11 4ZM5 12L8 15.5L11 12ZM4 5L0.5 8L4 11ZM12 5L15.5 8L12 11Z" fill="#000"/></svg>
<svg class="ic" style="left:566.0px;top:60.5px;width:16px;height:16px" viewBox="0 0 16 16" shape-rendering="crispEdges"><path d="M2.5 5.5L7.5 1.5L13.5 7.5V11.5L8.5 15L2.5 9.5Z" fill="none" stroke="#000"/><path d="M2.5 5.5L8.5 11.5L13.5 7.5M8.5 11.5V15M7.5 1.5V5.5L2.5 9.5M7.5 5.5L13.5 11.5" stroke="#000" fill="none" stroke-width="0.8"/></svg>
<svg class="ic" style="left:589.0px;top:60.5px;width:16px;height:16px" viewBox="0 0 16 16" shape-rendering="crispEdges"><path d="M2.5 5.5L7.5 1.5L13.5 7.5V11.5L8.5 15L2.5 9.5Z" fill="none" stroke="#000"/><path d="M2.5 5.5L8.5 11.5L13.5 7.5M8.5 11.5V15" stroke="#000" fill="none"/></svg>
<svg class="ic" style="left:696.0px;top:60.5px;width:16px;height:16px" viewBox="0 0 16 16" shape-rendering="crispEdges"><path d="M1 2L4 1L9 6L6 9Z" fill="#20d0f0" stroke="#000"/><path d="M6 7L10 4L15 11L11 14Z" fill="#20d0f0" stroke="#000"/><ellipse cx="13" cy="12.5" rx="2" ry="2.5" fill="#9ff" stroke="#000"/></svg>
<svg class="ic" style="left:643.0px;top:60.5px;width:16px;height:16px" viewBox="0 0 16 16" shape-rendering="crispEdges"><rect x="1.5" y="1.5" width="8" height="5" fill="#fff" stroke="#000080"/><rect x="3.5" y="4.5" width="8" height="5" fill="#fff" stroke="#000"/><rect x="5.5" y="8.5" width="8" height="6" fill="#fff" stroke="#000080"/><path d="M14 6V11" stroke="#000080" stroke-width="1.5"/></svg>
<svg class="ic" style="left:666.0px;top:60.5px;width:16px;height:16px" viewBox="0 0 16 16" shape-rendering="crispEdges"><rect x="1.5" y="1.5" width="8" height="5" fill="#fff" stroke="#b0b0a8"/><rect x="3.5" y="4.5" width="8" height="5" fill="#fff" stroke="#b0b0a8"/><rect x="5.5" y="8.5" width="8" height="6" fill="#fff" stroke="#b0b0a8"/><path d="M14 6V11" stroke="#b0b0a8" stroke-width="1.5"/></svg>
<div class="a" style="left:609px;top:57px;width:23px;height:23px;border:1px solid;border-color:#ACA899 #fff #fff #ACA899;background:#f4f3ee"></div>
<svg class="ic" style="left:613.0px;top:60.5px;width:16px;height:16px" viewBox="0 0 16 16" shape-rendering="crispEdges"><path d="M2.5 5.5L7.5 1.5L13.5 7.5L8.5 11.5Z" fill="#ffff40" stroke="#000"/><path d="M2.5 5.5L8.5 11.5V15L2.5 9.5Z" fill="#808000" stroke="#000"/><path d="M8.5 11.5L13.5 7.5V11.5L8.5 15Z" fill="#e0e040" stroke="#000"/></svg>
<div class="a" style="left:412.5px;top:59px;width:1px;height:20px;background:#ACA899"></div><div class="a" style="left:413.5px;top:59px;width:1px;height:20px;background:#fff"></div>
<div class="a" style="left:559px;top:59px;width:1px;height:20px;background:#ACA899"></div><div class="a" style="left:560px;top:59px;width:1px;height:20px;background:#fff"></div>
<div class="a" style="left:635.7px;top:59px;width:1px;height:20px;background:#ACA899"></div><div class="a" style="left:636.7px;top:59px;width:1px;height:20px;background:#fff"></div>
<div class="a" style="left:690px;top:59px;width:1px;height:20px;background:#ACA899"></div><div class="a" style="left:691px;top:59px;width:1px;height:20px;background:#fff"></div>
<div class="a" style="left:732px;top:58px;width:3px;height:22px;border-left:1px solid #fff;border-right:1px solid #ACA899"></div>
<div class="a" style="left:730px;top:57px;width:1px;height:24px;background:#ACA899"></div>
<svg class="ic" style="left:742.0px;top:60.5px;width:16px;height:16px" viewBox="0 0 16 16" shape-rendering="crispEdges"><path d="M4.5 1V14.5H15" stroke="#000" fill="none"/><path d="M4 14L10 8L14 3M10 8V14" stroke="#20b0c0" stroke-width="1.3" fill="none"/><path d="M1 5L3 7M3 5L1 7M1 12L3 14M12 1L13 2L14 1M13 2V3" stroke="#000" stroke-width="0.8"/></svg>
<svg class="ic" style="left:764.0px;top:60.5px;width:16px;height:16px" viewBox="0 0 16 16" shape-rendering="crispEdges"><rect x="1" y="11" width="14" height="3" fill="#ffff00" stroke="#000" stroke-width="0.8"/><path d="M2 6H14" stroke="#000" stroke-dasharray="1 1"/><rect x="2" y="5" width="2" height="2" fill="#2060c0"/><rect x="12" y="5" width="2" height="2" fill="#2060c0"/></svg>
<svg class="ic" style="left:788.0px;top:60.5px;width:16px;height:16px" viewBox="0 0 16 16" shape-rendering="crispEdges"><path d="M3.5 1.5V12.5H13.5Z" fill="#a6c6f0" stroke="#000"/><rect x="1" y="12" width="14" height="3" fill="#ffff00" stroke="#000" stroke-width="0.8"/><circle cx="7" cy="9" r="1" fill="none" stroke="#000" stroke-width="0.6"/></svg>
<svg class="ic" style="left:810.0px;top:60.5px;width:16px;height:16px" viewBox="0 0 16 16" shape-rendering="crispEdges"><path d="M4 8L10 2L15 7L9 13Z" fill="#fff" stroke="#000"/><path d="M10 11L14 7" stroke="#a6c6f0" stroke-width="2"/><path d="M1 1L3 3M3 1L1 3M3 3L8 8" stroke="#000" stroke-width="0.9"/><circle cx="8" cy="8" r="1" fill="#2050c0"/></svg>
<svg class="ic" style="left:842.0px;top:60.5px;width:16px;height:16px" viewBox="0 0 16 16" shape-rendering="crispEdges"><path d="M4.5 1.5H14.5L12.5 14.5H1.5L3 12Z" fill="#fff" stroke="#000"/><path d="M6 5H12M5.5 7H11.5M5 9H11" stroke="#000"/></svg>
<svg class="ic" style="left:865.0px;top:60.5px;width:16px;height:16px" viewBox="0 0 16 16" shape-rendering="crispEdges"><path d="M4.5 1.5H14.5L12.5 14.5H1.5L3 12Z" fill="#c6dcf6" stroke="#000"/><path d="M6 5H12M5.5 7H9" stroke="#000"/><rect x="7.5" y="7.5" width="7" height="6" fill="#fff" stroke="#000080" stroke-width="1.5"/><rect x="10" y="10" width="2" height="2" fill="#000080"/></svg>
<div class="a" style="left:834.6px;top:59px;width:1px;height:20px;background:#ACA899"></div><div class="a" style="left:835.6px;top:59px;width:1px;height:20px;background:#fff"></div>
<div class="a" style="left:2px;top:86px;width:3px;height:22px;border-left:1px solid #fff;border-right:1px solid #ACA899"></div>
<div class="a" style="left:0px;top:85px;width:1px;height:24px;background:#ACA899"></div>
<svg class="ic" style="left:10.5px;top:88.5px;width:16px;height:16px" viewBox="0 0 16 16" shape-rendering="crispEdges"><ellipse cx="8" cy="9" rx="6.5" ry="4" fill="#ffff00" stroke="#0030e0" stroke-width="1.3" transform="rotate(-20 8 9)"/><path d="M2 11Q8 14 14 8" stroke="#0030e0" fill="none"/><ellipse cx="8" cy="8" rx="2" ry="1.2" fill="none" stroke="#0030e0"/></svg>
<svg class="ic" style="left:34.0px;top:88.5px;width:16px;height:16px" viewBox="0 0 16 16" shape-rendering="crispEdges"><path d="M2 6Q2 3 8 3Q14 3 14 6V11Q14 14 8 14Q2 14 2 11Z" fill="#ffff00"/><path d="M2 6Q8 9 14 6M2 8.5Q8 11.5 14 8.5M2 11Q8 14 14 11M4 4Q8 7 12 4" stroke="#0030e0" stroke-width="1.3" fill="none"/><path d="M2 6V11M14 6V11" stroke="#0030e0"/></svg>
<svg class="ic" style="left:57.0px;top:88.5px;width:16px;height:16px" viewBox="0 0 16 16" shape-rendering="crispEdges"><path d="M1 13Q2 3 12 3Q15 4 15 8Q15 12 10 14Z" fill="#ffff00"/><path d="M1.5 8Q6 3 12 3.5M1.5 10.5Q7 5 13.5 6M2.5 13Q8 7.5 14.5 9M5 14.5Q10 10 14.5 12" stroke="#0030e0" stroke-width="1.6" fill="none"/></svg>
<svg class="ic" style="left:80.5px;top:88.5px;width:16px;height:16px" viewBox="0 0 16 16" shape-rendering="crispEdges"><path d="M2 3.5H15" stroke="#a8c8f0"/><rect x="1" y="5" width="14" height="7" fill="#ffff00"/><path d="M1 13.5H15" stroke="#a8c8f0" stroke-width="1.3"/><path d="M3.5 12Q5 9 4 6Q4.5 4 6 4M7.5 12Q9 9 8 6Q8.5 4 10 4M11.5 12Q13 9 12 6Q12.5 4 14 4" stroke="#0030e0" stroke-width="1.4" fill="none"/></svg>
<svg class="ic" style="left:103.0px;top:88.5px;width:16px;height:16px" viewBox="0 0 16 16" shape-rendering="crispEdges"><path d="M3 3H15" stroke="#a8c8f0" stroke-width="1.3"/><rect x="2" y="5" width="13" height="5" fill="#ffff00"/><path d="M2 5H15M14 5V9" stroke="#0030e0" stroke-width="1.2"/><path d="M3 6V12M6.5 6V12M10 6V12" stroke="#0030e0" stroke-width="1.3"/><path d="M1.5 11L3 14L4.5 11ZM5 11L6.5 14L8 11ZM8.5 11L10 14L11.5 11ZM12.5 9L14 12L15.5 9Z" fill="#0030e0"/></svg>
<svg class="ic" style="left:125.0px;top:88.5px;width:16px;height:16px" viewBox="0 0 16 16" shape-rendering="crispEdges"><ellipse cx="9" cy="11.5" rx="6" ry="3" fill="#ffff00" stroke="#0030e0" stroke-width="1.2"/><path d="M2 3H7M3 3V9M3 6H9M3 9H12" stroke="#0030e0" stroke-width="1.3"/><rect x="4" y="4" width="4" height="4" fill="#ffff00"/></svg>
<svg class="ic" style="left:156.0px;top:88.5px;width:16px;height:16px" viewBox="0 0 16 16" shape-rendering="crispEdges"><path d="M1 10Q9 10 13 2M2 12Q10 12 14 5M4 14Q11 14 15 8" stroke="#0030e0" stroke-width="1.5" fill="none"/></svg>
<svg class="ic" style="left:180.0px;top:88.5px;width:16px;height:16px" viewBox="0 0 16 16" shape-rendering="crispEdges"><ellipse cx="8" cy="11.5" rx="6" ry="2.5" fill="#a8c8f0" stroke="#0030e0" stroke-width="1.2"/><ellipse cx="8" cy="8.5" rx="4" ry="2" fill="#a8c8f0" stroke="#0030e0" stroke-width="1.2"/><ellipse cx="8" cy="5.5" rx="1.5" ry="1.2" fill="#0030e0"/><path d="M8 2V4" stroke="#0030e0"/></svg>
<svg class="ic" style="left:203.0px;top:88.5px;width:16px;height:16px" viewBox="0 0 16 16" shape-rendering="crispEdges"><path d="M1.5 13V7Q8 1 14.5 7V13Z" fill="#a8c8f0"/><path d="M1 7Q8 1 15 7M1 9Q8 3 15 9M3 12Q9 6 15 11" stroke="#0030e0" stroke-width="1.3" fill="none"/></svg>
<svg class="ic" style="left:225.0px;top:88.5px;width:16px;height:16px" viewBox="0 0 16 16" shape-rendering="crispEdges"><path d="M1 10L8 4L15 10L8 15Z" fill="#a8c8f0" stroke="#0030e0"/><path d="M3 10L8 14M5 9L10 13M8 7L13 11" stroke="#0030e0"/><path d="M8 1L10 9Q8 11 6 9Z" fill="#a8c8f0" stroke="#0030e0"/></svg>
<svg class="ic" style="left:250.0px;top:88.5px;width:16px;height:16px" viewBox="0 0 16 16" shape-rendering="crispEdges"><path d="M1 4Q6 2 14 9M1 7Q6 5 14 12M2 10Q7 8 13 14M3 2L13 7" stroke="#0030e0" stroke-width="1.2" fill="none"/><path d="M3 3L12 10" stroke="#ff0000" stroke-width="1.8"/><path d="M10 12L14 11L12 8Z" fill="#ff0000"/></svg>
<svg class="ic" style="left:272.0px;top:88.5px;width:16px;height:16px" viewBox="0 0 16 16" shape-rendering="crispEdges"><ellipse cx="8" cy="11" rx="6.5" ry="3" fill="#a8c8f0" stroke="#0030e0" stroke-width="1.2"/><path d="M5 8H11M8 2V8M6 4H10M6 6H10" stroke="#0030e0"/></svg>
<svg class="ic" style="left:295.0px;top:88.5px;width:16px;height:16px" viewBox="0 0 16 16" shape-rendering="crispEdges"><path d="M5 2H11V11H5Z" fill="#a8c8f0"/><path d="M4 3H12M4 5H12M4 7H12M4 9H12" stroke="#0030e0" stroke-width="1.3"/><path d="M1 14L3 11H13L15 14Z" fill="#a8c8f0" stroke="#0030e0"/></svg>
<svg class="ic" style="left:318.0px;top:88.5px;width:16px;height:16px" viewBox="0 0 16 16" shape-rendering="crispEdges"><ellipse cx="8" cy="6" rx="6" ry="3.5" fill="#a8c8f0" stroke="#0030e0" stroke-width="1.2"/><path d="M2 8Q8 12 14 8M2 10Q8 14 14 10M2 12Q8 16 14 12" stroke="#0030e0" stroke-width="1.2" fill="none"/></svg>
<svg class="ic" style="left:341.0px;top:88.5px;width:16px;height:16px" viewBox="0 0 16 16" shape-rendering="crispEdges"><path d="M2 9Q1 3 8 2Q15 3 14 9Z" fill="#a8c8f0" stroke="#0030e0" stroke-width="1.2"/><path d="M2 9V13M5 9V14M8 9V14M11 9V14M14 9V13" stroke="#0030e0" stroke-width="1.2"/><path d="M0.5 11.5L2 14.5L3.5 11.5ZM3.5 12L5 15L6.5 12ZM6.5 12L8 15L9.5 12ZM9.5 12L11 15L12.5 12ZM12.5 11.5L14 14.5L15.5 11.5Z" fill="#0030e0"/></svg>
<svg class="ic" style="left:372.0px;top:88.5px;width:16px;height:16px" viewBox="0 0 16 16" shape-rendering="crispEdges"><path d="M5 1H11L15 5V11L11 15H5L1 11V5Z" fill="#a8c8f0"/><path d="M1 4L4 7M4 7L7 5M4 7V12M7 5L10 9M7 9V14M10 9L13 12M10 12V15" stroke="#0030e0" stroke-width="1.3" fill="none"/><path d="M11 15L15 11V15Z" fill="#fff"/></svg>
<svg class="ic" style="left:395.0px;top:88.5px;width:16px;height:16px" viewBox="0 0 16 16" shape-rendering="crispEdges"><path d="M5 1H11L15 5V11L11 15H5L1 11V5Z" fill="#a8c8f0"/><path d="M1 12L9 5M5 15L15 6" stroke="#0030e0" stroke-width="1.2"/><path d="M6 3H10V10L8 13L6 10Z" fill="#ffff00" stroke="#000"/><rect x="6" y="1" width="4" height="2" fill="#c00000"/></svg>
<svg class="ic" style="left:418.0px;top:88.5px;width:16px;height:16px" viewBox="0 0 16 16" shape-rendering="crispEdges"><path d="M5 1H11L15 5V11L11 15H5L1 11V5Z" fill="#a8c8f0"/><path d="M2 3L8 9M4 2L9 7M6 1L10 5M1 5L7 11" stroke="#0030e0" stroke-width="0.8"/><path d="M1 12L8 9H15M1 14.5L9 11H15" stroke="#0030e0" stroke-width="1.3" fill="none"/><path d="M9 12.5H15V15H5Z" fill="#fff"/></svg>
<svg class="ic" style="left:449.0px;top:88.5px;width:16px;height:16px" viewBox="0 0 16 16" shape-rendering="crispEdges"><path d="M2 6L6 3L10 6V14L6 15L2 13Z" fill="#a8c8f0" stroke="#0030e0"/><path d="M3 7L7 4M3 10L9 5M4 13L10 8M7 15V7M10 6L14 3V11L10 14" stroke="#0030e0" stroke-width="1.2" fill="none"/><path d="M10 7L15 1" stroke="#00d0f0"/></svg>
<svg class="ic" style="left:472.0px;top:88.5px;width:16px;height:16px" viewBox="0 0 16 16" shape-rendering="crispEdges"><path d="M2 14Q4 9 8 10Q12 10 13 4" stroke="#0030e0" fill="none" stroke-width="1.2" stroke-dasharray="2 1"/><circle cx="5" cy="11" r="2" fill="#ffff00" stroke="#ff0000"/><path d="M6 5L10 9M10 5L6 9" stroke="#ff0000" stroke-width="1.2"/><circle cx="14" cy="2" r="1" fill="#ff0000"/></svg>
<svg class="ic" style="left:495.0px;top:88.5px;width:16px;height:16px" viewBox="0 0 16 16" shape-rendering="crispEdges"><path d="M1.5 7.5L8 3L14.5 7.5V11.5L8 15L1.5 11.5Z" fill="#a8c8f0" stroke="#0030e0" stroke-width="1.3"/><path d="M1.5 7.5L8 11.5L14.5 7.5M8 11.5V15" stroke="#0030e0" stroke-width="1.3" fill="none"/><ellipse cx="8" cy="7" rx="2" ry="1.3" fill="#fff" stroke="#0030e0"/></svg>
<svg class="ic" style="left:518.0px;top:88.5px;width:16px;height:16px" viewBox="0 0 16 16" shape-rendering="crispEdges"><path d="M2 4H14V8Q14 15 8 15Q2 15 2 8Z" fill="#a8c8f0"/><path d="M2 2.5H14V5.5H11V9H5V5.5H2Z" fill="#fff" stroke="#0030e0" stroke-width="1.3"/><path d="M6 9V12H10V9" stroke="#0030e0" fill="#fff"/></svg>
<svg class="ic" style="left:549.0px;top:88.5px;width:16px;height:16px" viewBox="0 0 16 16" shape-rendering="crispEdges"><ellipse cx="8" cy="8" rx="6.5" ry="5" fill="#ffff00" stroke="#0030e0" stroke-width="1.2"/><path d="M3 6Q8 9 13 6M3 9H13M4 11H12M6 4Q8 6 10 4" stroke="#0030e0" fill="none"/></svg>
<svg class="ic" style="left:572.0px;top:88.5px;width:16px;height:16px" viewBox="0 0 16 16" shape-rendering="crispEdges"><path d="M2 9L7 5H12L15 9L11 13H5Z" fill="#fff" stroke="#0030e0" stroke-width="1.2" stroke-dasharray="2 1"/><path d="M5 8H13M5 10H13" stroke="#0030e0" stroke-width="1.2"/><path d="M7 5L9 2H12" stroke="#0030e0"/></svg>
<svg class="ic" style="left:595.0px;top:88.5px;width:16px;height:16px" viewBox="0 0 16 16" shape-rendering="crispEdges"><path d="M5 1H11L15 5V11L11 15H5L1 11V5Z" fill="#a8c8f0"/><path d="M2 13L14 3M6 15L15 7" stroke="#0030e0"/><path d="M6 2H10V10L8 13L6 10Z" fill="#ffff00" stroke="#000"/><rect x="6" y="1" width="4" height="2" fill="#c00000"/></svg>
<svg class="ic" style="left:618.0px;top:88.5px;width:16px;height:16px" viewBox="0 0 16 16" shape-rendering="crispEdges"><path d="M5 1H11L15 5V11L11 15H5L1 11V5Z" fill="#a8c8f0"/><path d="M1 12L8 9H15M1 14L9 11H15M2 2L8 8" stroke="#0030e0" stroke-width="1.2" fill="none"/><path d="M2 3L6 1L9 5L5 8Z" fill="#ffff00" stroke="#808000" stroke-width="0.6"/><path d="M5 15L9 11H15V15Z" fill="#ffff00"/></svg>
<svg class="ic" style="left:649.0px;top:88.5px;width:16px;height:16px" viewBox="0 0 16 16" shape-rendering="crispEdges"><rect x="1" y="1" width="14" height="14" fill="#ffff00"/><path d="M2.5 2.5H13.5V13.5H4.5V4.5H11.5V11.5H6.5V6.5H9.5V9.5" stroke="#0030e0" stroke-width="1.3" fill="none"/></svg>
<svg class="ic" style="left:672.0px;top:88.5px;width:16px;height:16px" viewBox="0 0 16 16" shape-rendering="crispEdges"><path d="M2 3L10 6L15 12L12 15L4 10Z" fill="#a8c8f0"/><path d="M2 3Q6 5 8 7Q11 12 15 12" stroke="#ff0000" stroke-width="1.6" fill="none"/><path d="M8 7Q11 13 15 13.5" stroke="#0030e0" stroke-width="1.4" fill="none"/></svg>
<svg class="ic" style="left:695.0px;top:88.5px;width:16px;height:16px" viewBox="0 0 16 16" shape-rendering="crispEdges"><rect x="1" y="1" width="14" height="14" fill="#a8c8f0"/><path d="M2 15Q4 4 14 1M4 15Q6 7 15 4M6 15Q8 9 15 7M8 15Q10 11 15 10M11 15L15 12" stroke="#0030e0" fill="none"/><path d="M1 15Q3 3 15 1" stroke="#ff0000" stroke-width="1.3" fill="none"/><rect x="13" y="14" width="2" height="2" fill="#f0f"/></svg>
<svg class="ic" style="left:718.0px;top:88.5px;width:16px;height:16px" viewBox="0 0 16 16" shape-rendering="crispEdges"><rect x="1" y="1" width="14" height="14" fill="#a8c8f0"/><path d="M1 8L5 3H12L15 6L11 9L15 12L11 15H5L1 12L5 9Z" fill="none" stroke="#0030e0" stroke-width="1.2"/><path d="M5 9H11M5 6H11M4 12H11" stroke="#0030e0"/></svg>
<svg class="ic" style="left:741.0px;top:88.5px;width:16px;height:16px" viewBox="0 0 16 16" shape-rendering="crispEdges"><path d="M1 8L6 2H14L10 8L14 14H6Z" fill="#fff" stroke="#004040" stroke-width="1.6"/><path d="M3 6H11M3 9H11M3 12H11M6 3V14M9 3V14" stroke="#0030e0" stroke-width="0.8"/></svg>
<svg class="ic" style="left:764.0px;top:88.5px;width:16px;height:16px" viewBox="0 0 16 16" shape-rendering="crispEdges"><rect x="1" y="12" width="14" height="3" fill="#a8c8f0"/><path d="M1 14H15" stroke="#0030e0" stroke-dasharray="1 1"/><path d="M4 11V5Q4 2 8 2Q12 2 12 5H7V8H14V11" stroke="#000040" stroke-width="1.5" fill="#fff"/></svg>
<svg class="ic" style="left:787.0px;top:88.5px;width:16px;height:16px" viewBox="0 0 16 16" shape-rendering="crispEdges"><text x="8" y="6" font-size="6.5" font-family="Liberation Mono" font-weight="bold" text-anchor="middle" fill="#000040">G01</text><path d="M1 7H15" stroke="#000040"/><path d="M4 7Q4 12 8 13Q12 12 12 7" stroke="#000040" stroke-width="1.3" fill="#fff"/><path d="M6 14H10" stroke="#000040"/></svg>
<svg class="ic" style="left:810.0px;top:88.5px;width:16px;height:16px" viewBox="0 0 16 16" shape-rendering="crispEdges"><path d="M2 2V9Q2 14 8 14H15M5 2V8Q5 11 9 11H15M8 1V6Q8 8 11 8H15" stroke="#0030e0" stroke-width="1.3" fill="none"/><path d="M10 2Q11 5 15 5" stroke="#ff0000" stroke-width="1.3" fill="none"/></svg>
<svg class="ic" style="left:833.0px;top:88.5px;width:16px;height:16px" viewBox="0 0 16 16" shape-rendering="crispEdges"><path d="M6 1.5H1.5V8.5H5.5V5.5H3.5" transform="translate(0 2)" stroke="#0028d8" stroke-width="1.3" fill="none" shape-rendering="crispEdges"/><path d="M8 6.5H15M8 9H15M8 11.5H15M8 14H15" stroke="#0030e0" stroke-width="1.5"/><path d="M12 1V8" stroke="#0030c0" stroke-width="2.2"/><path d="M12 1V7" stroke="#ff0000" stroke-width="0.9"/></svg>
<svg class="ic" style="left:856.0px;top:88.5px;width:16px;height:16px" viewBox="0 0 16 16" shape-rendering="crispEdges"><path d="M6 1.5H1.5V8.5H5.5V5.5H3.5" transform="translate(0 1)" stroke="#0028d8" stroke-width="1.3" fill="none" shape-rendering="crispEdges"/><circle cx="11" cy="11" r="3.8" fill="#fff" stroke="#0030e0" stroke-width="1.8"/><circle cx="11" cy="11" r="1" fill="#0030e0"/><path d="M11 1V6" stroke="#ff0000" stroke-width="1.2"/></svg>
<div class="a" style="left:149px;top:87px;width:1px;height:20px;background:#ACA899"></div><div class="a" style="left:150px;top:87px;width:1px;height:20px;background:#fff"></div>
<div class="a" style="left:364.5px;top:87px;width:1px;height:20px;background:#ACA899"></div><div class="a" style="left:365.5px;top:87px;width:1px;height:20px;background:#fff"></div>
<div class="a" style="left:441.5px;top:87px;width:1px;height:20px;background:#ACA899"></div><div class="a" style="left:442.5px;top:87px;width:1px;height:20px;background:#fff"></div>
<div class="a" style="left:542px;top:87px;width:1px;height:20px;background:#ACA899"></div><div class="a" style="left:543px;top:87px;width:1px;height:20px;background:#fff"></div>
<div class="a" style="left:641px;top:87px;width:1px;height:20px;background:#ACA899"></div><div class="a" style="left:642px;top:87px;width:1px;height:20px;background:#fff"></div>
<div class="a" style="left:2px;top:114px;width:3px;height:22px;border-left:1px solid #fff;border-right:1px solid #ACA899"></div>
<div class="a" style="left:0px;top:113px;width:1px;height:24px;background:#ACA899"></div>
<svg class="ic" style="left:10.0px;top:116.5px;width:16px;height:16px" viewBox="0 0 16 16" shape-rendering="crispEdges"><path d="M1.5 1V5.5H6M4.5 2.5V8.5" transform="translate(0 0)" stroke="#0028d8" stroke-width="1.3" fill="none" shape-rendering="crispEdges"/><path d="M6 6H13L15 14H6Z" fill="#a8c8f0"/><path d="M8 11L14 4" stroke="#ff0000" stroke-width="2.2"/><path d="M0.5 14.5Q4 10 8 10.5Q12 11 15 14.5Z" fill="#fff"/><path d="M0.5 14.5Q4 10 8 10.5Q12 11 15 14.5" stroke="#000080" stroke-width="1.3" fill="none"/></svg>
<svg class="ic" style="left:34.0px;top:116.5px;width:16px;height:16px" viewBox="0 0 16 16" shape-rendering="crispEdges"><path d="M1.5 1V5.5H6M4.5 2.5V8.5" transform="translate(0 0)" stroke="#0028d8" stroke-width="1.3" fill="none" shape-rendering="crispEdges"/><path d="M6 6H14V13H6Z" fill="#a8c8f0"/><path d="M8 11L14 4" stroke="#ff0000" stroke-width="2.2"/><path d="M0.5 13Q4 10 8 10.5Q13 11 15 13Q8 16.5 0.5 13Z" fill="#ffff00" stroke="#000080" stroke-width="1.3"/><circle cx="7.5" cy="12.5" r="1" fill="#fff" stroke="#000080" stroke-width="0.6"/></svg>
<svg class="ic" style="left:65.0px;top:116.5px;width:16px;height:16px" viewBox="0 0 16 16" shape-rendering="crispEdges"><path d="M5.5 1.5H1.5V4.5H5.5V8.5H1" transform="translate(0 0)" stroke="#0028d8" stroke-width="1.3" fill="none" shape-rendering="crispEdges"/><path d="M9 10L15 2" stroke="#0030c0" stroke-width="2.6"/><path d="M9 10L15 2" stroke="#ff1010" stroke-width="1.2"/><path d="M9.6 9.8L15.6 1.8" stroke="#ffe000" stroke-width="0.6"/><path d="M2 15L6 11L10 15M6 11V9" stroke="#3070c0" stroke-width="1.3" fill="none"/></svg>
<svg class="ic" style="left:88.0px;top:116.5px;width:16px;height:16px" viewBox="0 0 16 16" shape-rendering="crispEdges"><path d="M5.5 1.5H1.5V4.5H5.5V8.5H1" transform="translate(0 0)" stroke="#0028d8" stroke-width="1.3" fill="none" shape-rendering="crispEdges"/><path d="M1 15L8 11L15 15" stroke="#60a0e0" stroke-width="1.5" fill="none"/><path d="M7 4L11 2L15 4" stroke="#80a0c0" stroke-width="1.2" fill="none"/><path d="M11 5.5V9" stroke="#000" stroke-width="1"/><path d="M9.5 8L11 10.5L12.5 8Z" fill="#000"/></svg>
<svg class="ic" style="left:119.0px;top:116.5px;width:16px;height:16px" viewBox="0 0 16 16" shape-rendering="crispEdges"><path d="M5.5 1.5H1.5V4.5H5.5V8.5H1" transform="translate(0 0)" stroke="#0028d8" stroke-width="1.3" fill="none" shape-rendering="crispEdges"/><rect x="6" y="9" width="9" height="7" fill="#a8c8f0"/><path d="M6 3.5H14M6 5.5H14M6 7.5H14" stroke="#000080"/><path d="M8 9L14 1" stroke="#0030c0" stroke-width="2.6"/><path d="M8 9L14 1" stroke="#ff1010" stroke-width="1.2"/><path d="M8.6 8.8L14.6 0.8" stroke="#ffe000" stroke-width="0.6"/><circle cx="7.5" cy="13" r="2.2" fill="none" stroke="#0028d8" stroke-width="1.8"/><circle cx="12" cy="13" r="2.2" fill="none" stroke="#0028d8" stroke-width="1.8"/></svg>
<svg class="ic" style="left:143.0px;top:116.5px;width:16px;height:16px" viewBox="0 0 16 16" shape-rendering="crispEdges"><path d="M5.5 1.5H1.5V4.5H5.5V8.5H1" transform="translate(0 0)" stroke="#0028d8" stroke-width="1.3" fill="none" shape-rendering="crispEdges"/><rect x="6" y="8" width="9" height="8" fill="#a8c8f0"/><path d="M8 9L14 1" stroke="#0030c0" stroke-width="2.6"/><path d="M8 9L14 1" stroke="#ff1010" stroke-width="1.2"/><path d="M8.6 8.8L14.6 0.8" stroke="#ffe000" stroke-width="0.6"/><circle cx="7.5" cy="13" r="2.2" fill="none" stroke="#0028d8" stroke-width="1.8"/><circle cx="12" cy="13" r="2.2" fill="none" stroke="#0028d8" stroke-width="1.8"/></svg>
<svg class="ic" style="left:173.0px;top:116.5px;width:16px;height:16px" viewBox="0 0 16 16" shape-rendering="crispEdges"><path d="M5.5 1.5H1.5V4.5H5.5V8.5H1" transform="translate(0 0)" stroke="#0028d8" stroke-width="1.3" fill="none" shape-rendering="crispEdges"/><rect x="1" y="12" width="14" height="4" fill="#a8c8f0"/><path d="M6 8.5H11M6 10.5H11" stroke="#000080" stroke-width="1.2"/><path d="M8 12H15V16H10Z" fill="#000080"/><path d="M9 9L15 1" stroke="#0030c0" stroke-width="2.6"/><path d="M9 9L15 1" stroke="#ff1010" stroke-width="1.2"/><path d="M9.6 8.8L15.6 0.8" stroke="#ffe000" stroke-width="0.6"/></svg>
<svg class="ic" style="left:197.0px;top:116.5px;width:16px;height:16px" viewBox="0 0 16 16" shape-rendering="crispEdges"><path d="M5.5 1.5H1.5V4.5H5.5V8.5H1" transform="translate(0 0)" stroke="#0028d8" stroke-width="1.3" fill="none" shape-rendering="crispEdges"/><rect x="1" y="12" width="14" height="4" fill="#a8c8f0"/><path d="M6 10.5H14" stroke="#000080" stroke-width="1.3"/><path d="M8 12H15V16H10Z" fill="#000080"/><path d="M9 9L15 1" stroke="#0030c0" stroke-width="2.6"/><path d="M9 9L15 1" stroke="#ff1010" stroke-width="1.2"/><path d="M9.6 8.8L15.6 0.8" stroke="#ffe000" stroke-width="0.6"/></svg>
<svg class="ic" style="left:228.0px;top:116.5px;width:16px;height:16px" viewBox="0 0 16 16" shape-rendering="crispEdges"><path d="M5.5 1.5H1.5V4.5H5.5V8.5H1" transform="translate(0 0)" stroke="#0028d8" stroke-width="1.3" fill="none" shape-rendering="crispEdges"/><path d="M6 1.5H1.5V8.5H5.5V5.5H3.5" transform="translate(7 0)" stroke="#0028d8" stroke-width="1.3" fill="none" shape-rendering="crispEdges"/><rect x="1" y="12" width="14" height="4" fill="#a8c8f0"/><path d="M9 16L15 9" stroke="#0030c0" stroke-width="2.6"/><path d="M9 16L15 9" stroke="#ff1010" stroke-width="1.2"/><path d="M9.6 15.8L15.6 8.8" stroke="#ffe000" stroke-width="0.6"/></svg>
<svg class="ic" style="left:250.0px;top:116.5px;width:16px;height:16px" viewBox="0 0 16 16" shape-rendering="crispEdges"><path d="M5.5 1.5H1.5V4.5H5.5V8.5H1" transform="translate(0 0)" stroke="#0028d8" stroke-width="1.3" fill="none" shape-rendering="crispEdges"/><rect x="9" y="8" width="6" height="7" fill="#a8c8f0"/><path d="M3 10L8 15M5 9L11 15" stroke="#40a040" stroke-width="1.3"/><path d="M6 14L15 2" stroke="#0030c0" stroke-width="2.6"/><path d="M6 14L15 2" stroke="#ff1010" stroke-width="1.2"/><path d="M6.6 13.8L15.6 1.8" stroke="#ffe000" stroke-width="0.6"/></svg>
<svg class="ic" style="left:273.0px;top:116.5px;width:16px;height:16px" viewBox="0 0 16 16" shape-rendering="crispEdges"><path d="M5.5 1.5H1.5V4.5H5.5V8.5H1" transform="translate(0 0)" stroke="#0028d8" stroke-width="1.3" fill="none" shape-rendering="crispEdges"/><rect x="6" y="8" width="9" height="8" fill="#a8c8f0"/><path d="M10 1V9" stroke="#0030c0" stroke-width="2.4"/><path d="M10 1V9" stroke="#ff1010" stroke-width="0.9"/><path d="M9 2V8" stroke="#ffe000" stroke-width="0.5"/><path d="M5 14L8 11L11 14L8 16ZM9 14L12 11L15 14L12 16Z" fill="none" stroke="#0028d8" stroke-width="1.3"/></svg>
<svg class="ic" style="left:295.0px;top:116.5px;width:16px;height:16px" viewBox="0 0 16 16" shape-rendering="crispEdges"><path d="M5.5 1.5H1.5V4.5H5.5V8.5H1" transform="translate(0 0)" stroke="#0028d8" stroke-width="1.3" fill="none" shape-rendering="crispEdges"/><path d="M6 7H14L15 14H6Z" fill="#a8c8f0"/><path d="M8 11L14 4" stroke="#ff0000" stroke-width="2.2"/><path d="M0.5 14Q4 10 8 10.5Q12 11 15 14" stroke="#000080" stroke-width="1.3" fill="none"/></svg>
<svg class="ic" style="left:319.0px;top:116.5px;width:16px;height:16px" viewBox="0 0 16 16" shape-rendering="crispEdges"><path d="M5.5 1.5H1.5V4.5H5.5V8.5H1" transform="translate(0 0)" stroke="#0028d8" stroke-width="1.3" fill="none" shape-rendering="crispEdges"/><rect x="6" y="7" width="9" height="9" fill="#a8c8f0"/><path d="M6 15L14 7M9 16L15 10" stroke="#0028d8" stroke-width="1.3"/><path d="M10 1V9" stroke="#0030c0" stroke-width="2.4"/><path d="M10 1V9" stroke="#e0e000" stroke-width="0.9"/><path d="M9.5 1V6" stroke="#ff0000" stroke-width="0.6"/></svg>
<svg class="ic" style="left:342.0px;top:116.5px;width:16px;height:16px" viewBox="0 0 16 16" shape-rendering="crispEdges"><path d="M5.5 1.5H1.5V4.5H5.5V8.5H1" transform="translate(0 0)" stroke="#0028d8" stroke-width="1.3" fill="none" shape-rendering="crispEdges"/><path d="M5 10.5H15M5 12.5H15M5 14.5H15" stroke="#0028d8" stroke-width="1.2" stroke-dasharray="2 1"/><path d="M10 1V8" stroke="#0030c0" stroke-width="2.4"/><path d="M10 1V8" stroke="#ff1010" stroke-width="0.9"/><path d="M9.5 1V5" stroke="#ffe000" stroke-width="0.6"/></svg>
<svg class="ic" style="left:373.0px;top:116.5px;width:16px;height:16px" viewBox="0 0 16 16" shape-rendering="crispEdges"><path d="M5.5 1.5H1.5V4.5H5.5V8.5H1" transform="translate(0 0)" stroke="#0028d8" stroke-width="1.3" fill="none" shape-rendering="crispEdges"/><path d="M6 6L10.5 10" stroke="#ff0000" stroke-width="2"/><path d="M8 11.5L12 11.5L12 7.5Z" fill="#ff0000"/><path d="M1.5 1V5.5H6M4.5 2.5V8.5" transform="translate(9 6)" stroke="#0028d8" stroke-width="1.3" fill="none" shape-rendering="crispEdges"/></svg>
<svg class="ic" style="left:396.0px;top:116.5px;width:16px;height:16px" viewBox="0 0 16 16" shape-rendering="crispEdges"><path d="M1 1.5H5.5V8.5H1M2 4.5H5.5" transform="translate(0 0)" stroke="#0028d8" stroke-width="1.3" fill="none" shape-rendering="crispEdges"/><path d="M6 6L10.5 10" stroke="#ff0000" stroke-width="2"/><path d="M8 11.5L12 11.5L12 7.5Z" fill="#ff0000"/><path d="M5.5 1.5H1.5V4.5H5.5V8.5H1" transform="translate(9 6)" stroke="#0028d8" stroke-width="1.3" fill="none" shape-rendering="crispEdges"/></svg>
<div class="a" style="left:58px;top:115px;width:1px;height:20px;background:#ACA899"></div><div class="a" style="left:59px;top:115px;width:1px;height:20px;background:#fff"></div>
<div class="a" style="left:112px;top:115px;width:1px;height:20px;background:#ACA899"></div><div class="a" style="left:113px;top:115px;width:1px;height:20px;background:#fff"></div>
<div class="a" style="left:166px;top:115px;width:1px;height:20px;background:#ACA899"></div><div class="a" style="left:167px;top:115px;width:1px;height:20px;background:#fff"></div>
<div class="a" style="left:219px;top:115px;width:1px;height:20px;background:#ACA899"></div><div class="a" style="left:220px;top:115px;width:1px;height:20px;background:#fff"></div>
<div class="a" style="left:365.7px;top:115px;width:1px;height:20px;background:#ACA899"></div><div class="a" style="left:366.7px;top:115px;width:1px;height:20px;background:#fff"></div>
<div class="a" style="left:433px;top:114px;width:3px;height:22px;border-left:1px solid #fff;border-right:1px solid #ACA899"></div>
<div class="a" style="left:431px;top:113px;width:1px;height:24px;background:#ACA899"></div>
<svg class="ic" style="left:442.0px;top:116.5px;width:16px;height:16px" viewBox="0 0 16 16" shape-rendering="crispEdges"><path d="M6 1V12H15M6 12L1 15" stroke="#000080" stroke-width="1.2" fill="none"/><path d="M5 14H7V15H5Z" fill="#e0b000"/><circle cx="6" cy="14" r="1" fill="#d0a000"/><path d="M8 2L10 4M10 2L8 4M12 8L13 9L14 8M13 9V10M1 11L3 13M3 11L1 13" stroke="#000" stroke-width="0.8"/></svg>
<svg class="ic" style="left:466.0px;top:116.5px;width:16px;height:16px" viewBox="0 0 16 16" shape-rendering="crispEdges"><path d="M6 1V12H15M6 12L1 15" stroke="#8080b0" stroke-width="1.2" fill="none"/><path d="M3 12L11 3L14 9Z" fill="none" stroke="#000080"/><circle cx="11" cy="3" r="1.2" fill="#e0b000"/><circle cx="6" cy="14" r="1" fill="#d0a000"/></svg>
<svg class="ic" style="left:497.0px;top:116.5px;width:16px;height:16px" viewBox="0 0 16 16" shape-rendering="crispEdges"><path d="M6 1V12H15M6 12L1 15" stroke="#000080" stroke-width="1.2" fill="none"/><path d="M5 14H7V15H5Z" fill="#e0b000"/><circle cx="6" cy="14" r="1" fill="#d0a000"/><ellipse cx="11" cy="6" rx="3.5" ry="2" fill="#fff" stroke="#000" stroke-width="1.3" transform="rotate(-20 11 6)"/><path d="M8 7L14 4" stroke="#000"/></svg>
<svg class="ic" style="left:528.0px;top:116.5px;width:16px;height:16px" viewBox="0 0 16 16" shape-rendering="crispEdges"><path d="M5 1V12H15M5 12L1 15" stroke="#8080b0" stroke-width="1.2" fill="none"/><circle cx="5" cy="14" r="1" fill="#d0a000"/></svg>
<svg class="ic" style="left:551.0px;top:116.5px;width:16px;height:16px" viewBox="0 0 16 16" shape-rendering="crispEdges"><path d="M6 1V12H15M6 12L1 15" stroke="#000080" stroke-width="1.2" fill="none"/><path d="M5 14H7V15H5Z" fill="#e0b000"/><circle cx="6" cy="14" r="1" fill="#d0a000"/><path d="M9 2V12M8 9H15M8 11H15" stroke="#a8c8f0" stroke-width="1"/><path d="M4 1V12M3 10L6 13" stroke="#000080" stroke-width="1.3"/></svg>
<svg class="ic" style="left:574.0px;top:116.5px;width:16px;height:16px" viewBox="0 0 16 16" shape-rendering="crispEdges"><path d="M5 7H14L11 11H2Z" fill="#ffff00" stroke="#000080"/><path d="M5 1V13M2 11L15 11M5 13L1 15" stroke="#000080" stroke-width="1.2" fill="none"/><path d="M3.5 3L5 0.5L6.5 3Z" fill="#000080"/><path d="M13 9.5L15.5 11L13 12.5Z" fill="#000080"/><circle cx="5" cy="14" r="1" fill="#d0a000"/></svg>
<div class="a" style="left:490px;top:115px;width:1px;height:20px;background:#ACA899"></div><div class="a" style="left:491px;top:115px;width:1px;height:20px;background:#fff"></div>
<div class="a" style="left:521px;top:115px;width:1px;height:20px;background:#ACA899"></div><div class="a" style="left:522px;top:115px;width:1px;height:20px;background:#fff"></div>
<div class="a" style="left:0;top:139px;width:188px;height:551px;background:#ECE9D8"></div>
<div class="a" style="left:3px;top:140px;width:180px;height:523px;background:#fff"></div>
<div class="a" style="left:4px;top:141px;width:179px;height:522px;background:#000"></div>
<div class="a" style="left:5px;top:142px;width:176px;height:519px;background:#fff"></div>
<div class="a" style="left:5px;top:142px;width:175px;height:518px;border-top:1px solid #808080;border-left:1px solid #808080;background:#CCE6CC"></div>
<div class="a" style="left:3px;top:662px;width:180px;height:1px;background:#ACA899"></div>
<div class="a" style="left:17px;top:161px;width:1px;height:125px;border-left:1px dotted #8a9a8a"></div>
<div class="a" style="left:39px;top:295px;width:1px;height:105px;border-left:1px dotted #8a9a8a"></div>
<div class="a" style="left:61px;top:314px;width:1px;height:67px;border-left:1px dotted #8a9a8a"></div>
<div class="a" style="left:61px;top:409px;width:1px;height:67px;border-left:1px dotted #8a9a8a"></div>
<svg class="ic" style="left:10.0px;top:145.0px;width:16px;height:16px" viewBox="0 0 16 16" shape-rendering="crispEdges"><path d="M1.5 6.5L4.5 3.5H8.5L9.5 4.5V8.5L11 7H15.5V10L12 13.5H1.5Z" fill="#c8c8c8" stroke="#000"/><path d="M4.5 6.5L8 3.5V7.5L5.5 10H12L15 7H11L8.5 9.5H5.5Z" fill="#00e8f0" stroke="#000" stroke-width="0.8"/><path d="M1.5 6.5H4.5V10H12V13.5M12 10L15.5 7" stroke="#000" fill="none"/></svg>
<svg class="a" style="left:31px;top:147px" width="28" height="16" viewBox="0 0 28 16" shape-rendering="crispEdges"><path d="M2 0h1v1h-1zM2 1h1v1h-1zM13 1h10v1h-10zM1 2h5v1h-5zM7 2h4v1h-4zM17 2h1v1h-1zM2 3h1v1h-1zM5 3h1v1h-1zM7 3h1v1h-1zM10 3h1v1h-1zM17 3h1v1h-1zM2 4h1v1h-1zM5 4h1v1h-1zM7 4h1v1h-1zM10 4h1v1h-1zM17 4h1v1h-1zM2 5h1v1h-1zM5 5h1v1h-1zM7 5h1v1h-1zM10 5h1v1h-1zM17 5h1v1h-1zM2 6h1v1h-1zM5 6h1v1h-1zM7 6h1v1h-1zM10 6h1v1h-1zM17 6h1v1h-1zM2 7h1v1h-1zM5 7h1v1h-1zM7 7h1v1h-1zM10 7h1v1h-1zM17 7h1v1h-1zM2 8h1v1h-1zM5 8h1v1h-1zM7 8h1v1h-1zM10 8h1v1h-1zM17 8h1v1h-1zM1 9h1v1h-1zM5 9h1v1h-1zM7 9h1v1h-1zM10 9h1v1h-1zM17 9h1v1h-1zM1 10h1v1h-1zM5 10h1v1h-1zM7 10h4v1h-4zM13 10h10v1h-10zM0 11h1v1h-1zM3 11h2v1h-2zM7 11h1v1h-1zM10 11h1v1h-1z" fill="#000"/></svg>
<div class="a" style="left:18px;top:172px;width:13px;height:1px;border-top:1px dotted #8a9a8a"></div>
<svg class="ic" style="left:31.0px;top:164.0px;width:16px;height:16px" viewBox="0 0 16 16" shape-rendering="crispEdges"><path d="M2.5 5.5L7 1.5H13L14.5 4V13L12.5 14.5H2.5Z" fill="#c0c0c0" stroke="#000"/><path d="M2.5 5.5L7 1.5H11L8 6Z" fill="#00e0f0" stroke="#000"/><circle cx="9.5" cy="9.5" r="2.2" fill="#00e0f0" stroke="#000"/></svg>
<svg class="a" style="left:53px;top:166px" width="28" height="16" viewBox="0 0 28 16" shape-rendering="crispEdges"><path d="M2 0h1v1h-1zM6 0h1v1h-1zM9 0h1v1h-1zM13 0h6v1h-6zM22 0h1v1h-1zM2 1h1v1h-1zM4 1h7v1h-7zM14 1h1v1h-1zM17 1h1v1h-1zM19 1h1v1h-1zM22 1h1v1h-1zM2 2h1v1h-1zM6 2h1v1h-1zM9 2h1v1h-1zM14 2h1v1h-1zM17 2h1v1h-1zM19 2h1v1h-1zM22 2h1v1h-1zM1 3h3v1h-3zM5 3h6v1h-6zM13 3h7v1h-7zM22 3h1v1h-1zM2 4h1v1h-1zM5 4h1v1h-1zM10 4h1v1h-1zM14 4h1v1h-1zM17 4h1v1h-1zM19 4h1v1h-1zM22 4h1v1h-1zM2 5h2v1h-2zM5 5h6v1h-6zM14 5h1v1h-1zM17 5h1v1h-1zM22 5h1v1h-1zM1 6h3v1h-3zM5 6h6v1h-6zM13 6h1v1h-1zM17 6h1v1h-1zM20 6h3v1h-3zM1 7h2v1h-2zM7 7h1v1h-1zM18 7h1v1h-1zM0 8h1v1h-1zM2 8h1v1h-1zM4 8h7v1h-7zM14 8h8v1h-8zM2 9h1v1h-1zM7 9h2v1h-2zM18 9h1v1h-1zM2 10h1v1h-1zM5 10h2v1h-2zM9 10h1v1h-1zM18 10h1v1h-1zM2 11h1v1h-1zM4 11h2v1h-2zM10 11h1v1h-1zM13 11h10v1h-10z" fill="#000"/></svg>
<div class="a" style="left:18px;top:191px;width:13px;height:1px;border-top:1px dotted #8a9a8a"></div>
<svg class="ic" style="left:31.0px;top:183.0px;width:16px;height:16px" viewBox="0 0 16 16" shape-rendering="crispEdges"><path d="M2.5 4.5L5 1.5H14.5V12L12 14.5H2.5Z" fill="#00e0f0" stroke="#000"/><path d="M2.5 4.5H12V14.5M12 4.5L14.5 1.5" stroke="#000" fill="none"/><rect x="7" y="6" width="3" height="5" fill="#008080"/></svg>
<svg class="a" style="left:53px;top:185px" width="28" height="16" viewBox="0 0 28 16" shape-rendering="crispEdges"><path d="M8 0h2v1h-2zM14 0h1v1h-1zM4 1h4v1h-4zM14 1h1v1h-1zM17 1h6v1h-6zM1 2h3v1h-3zM5 2h1v1h-1zM14 2h1v1h-1zM20 2h1v1h-1zM5 3h1v1h-1zM13 3h3v1h-3zM19 3h1v1h-1zM4 4h6v1h-6zM14 4h1v1h-1zM18 4h3v1h-3zM1 5h3v1h-3zM5 5h1v1h-1zM14 5h1v1h-1zM18 5h2v1h-2zM21 5h1v1h-1zM5 6h1v1h-1zM14 6h1v1h-1zM17 6h1v1h-1zM19 6h1v1h-1zM22 6h1v1h-1zM4 7h7v1h-7zM14 7h1v1h-1zM16 7h1v1h-1zM19 7h1v1h-1zM1 8h3v1h-3zM5 8h1v1h-1zM14 8h2v1h-2zM19 8h1v1h-1zM5 9h1v1h-1zM13 9h2v1h-2zM19 9h1v1h-1zM5 10h1v1h-1zM10 10h1v1h-1zM5 11h6v1h-6zM16 11h7v1h-7z" fill="#000"/></svg>
<div class="a" style="left:18px;top:210px;width:13px;height:1px;border-top:1px dotted #8a9a8a"></div>
<svg class="ic" style="left:31.0px;top:202.0px;width:16px;height:16px" viewBox="0 0 16 16" shape-rendering="crispEdges"><circle cx="8" cy="8" r="5" fill="none" stroke="#000" stroke-width="1.1"/><path d="M8 3A5 5 0 0 1 13 8H8ZM8 13A5 5 0 0 1 3 8H8Z" fill="#008080"/><path d="M8 0.5V15.5M0.5 8H15.5" stroke="#000" stroke-width="1.1"/></svg>
<svg class="a" style="left:53px;top:204px" width="40" height="16" viewBox="0 0 40 16" shape-rendering="crispEdges"><path d="M3 0h1v1h-1zM14 0h1v1h-1zM19 0h1v1h-1zM29 0h1v1h-1zM1 1h10v1h-10zM14 1h1v1h-1zM19 1h1v1h-1zM29 1h6v1h-6zM3 2h1v1h-1zM10 2h1v1h-1zM14 2h1v1h-1zM19 2h1v1h-1zM21 2h1v1h-1zM29 2h1v1h-1zM3 3h1v1h-1zM10 3h1v1h-1zM13 3h4v1h-4zM18 3h1v1h-1zM21 3h1v1h-1zM29 3h1v1h-1zM1 4h5v1h-5zM7 4h4v1h-4zM13 4h1v1h-1zM16 4h2v1h-2zM22 4h1v1h-1zM26 4h8v1h-8zM3 5h1v1h-1zM6 5h1v1h-1zM13 5h1v1h-1zM15 5h1v1h-1zM17 5h6v1h-6zM26 5h1v1h-1zM33 5h1v1h-1zM1 6h1v1h-1zM3 6h1v1h-1zM6 6h1v1h-1zM13 6h1v1h-1zM15 6h1v1h-1zM26 6h1v1h-1zM33 6h1v1h-1zM1 7h1v1h-1zM3 7h4v1h-4zM13 7h1v1h-1zM15 7h1v1h-1zM18 7h5v1h-5zM26 7h8v1h-8zM1 8h1v1h-1zM3 8h1v1h-1zM6 8h1v1h-1zM10 8h1v1h-1zM14 8h2v1h-2zM17 8h1v1h-1zM22 8h1v1h-1zM1 9h3v1h-3zM7 9h4v1h-4zM14 9h1v1h-1zM16 9h2v1h-2zM22 9h1v1h-1zM26 9h1v1h-1zM28 9h1v1h-1zM31 9h1v1h-1zM33 9h1v1h-1zM1 10h3v1h-3zM13 10h1v1h-1zM18 10h5v1h-5zM25 10h1v1h-1zM28 10h1v1h-1zM31 10h1v1h-1zM34 10h1v1h-1zM0 11h1v1h-1zM4 11h7v1h-7zM22 11h1v1h-1zM25 11h1v1h-1zM28 11h1v1h-1zM31 11h1v1h-1zM34 11h1v1h-1z" fill="#000"/></svg>
<div class="a" style="left:18px;top:229px;width:13px;height:1px;border-top:1px dotted #8a9a8a"></div>
<svg class="ic" style="left:31.0px;top:221.0px;width:16px;height:16px" viewBox="0 0 16 16" shape-rendering="crispEdges"><path d="M1.5 14.5V5L4 1.5H7.5V9.5H14.5V14.5Z" fill="#00e0f0" stroke="#000"/><rect x="9" y="5" width="3" height="3" fill="#000"/><path d="M2 11H14" stroke="#008080"/></svg>
<svg class="a" style="left:53px;top:223px" width="100" height="16" viewBox="0 0 100 16" shape-rendering="crispEdges"><path d="M18 0h1v1h-1zM32 0h2v1h-2zM37 0h10v1h-10zM2 1h1v1h-1zM6 1h4v1h-4zM18 1h1v1h-1zM26 1h6v1h-6zM37 1h1v1h-1zM40 1h1v1h-1zM43 1h1v1h-1zM46 1h1v1h-1zM2 2h1v1h-1zM6 2h1v1h-1zM9 2h1v1h-1zM13 2h10v1h-10zM26 2h1v1h-1zM37 2h10v1h-10zM69 2h3v1h-3zM1 3h4v1h-4zM6 3h1v1h-1zM9 3h1v1h-1zM13 3h1v1h-1zM26 3h1v1h-1zM41 3h1v1h-1zM68 3h1v1h-1zM2 4h1v1h-1zM6 4h1v1h-1zM9 4h1v1h-1zM13 4h1v1h-1zM18 4h1v1h-1zM26 4h9v1h-9zM37 4h10v1h-10zM57 4h1v1h-1zM67 4h5v1h-5zM74 4h3v1h-3zM79 4h1v1h-1zM81 4h2v1h-2zM85 4h1v1h-1zM89 4h1v1h-1zM92 4h3v1h-3zM2 5h2v1h-2zM6 5h1v1h-1zM9 5h1v1h-1zM13 5h1v1h-1zM15 5h8v1h-8zM26 5h1v1h-1zM38 5h8v1h-8zM57 5h1v1h-1zM68 5h1v1h-1zM73 5h1v1h-1zM76 5h2v1h-2zM79 5h2v1h-2zM83 5h1v1h-1zM85 5h1v1h-1zM89 5h1v1h-1zM91 5h1v1h-1zM95 5h1v1h-1zM1 6h2v1h-2zM4 6h1v1h-1zM6 6h1v1h-1zM9 6h1v1h-1zM13 6h1v1h-1zM18 6h2v1h-2zM26 6h1v1h-1zM28 6h7v1h-7zM38 6h1v1h-1zM45 6h1v1h-1zM68 6h1v1h-1zM77 6h1v1h-1zM79 6h1v1h-1zM83 6h1v1h-1zM85 6h1v1h-1zM89 6h1v1h-1zM91 6h1v1h-1zM1 7h2v1h-2zM4 7h1v1h-1zM6 7h1v1h-1zM9 7h1v1h-1zM13 7h1v1h-1zM17 7h2v1h-2zM20 7h1v1h-1zM26 7h1v1h-1zM28 7h1v1h-1zM34 7h1v1h-1zM38 7h8v1h-8zM68 7h1v1h-1zM73 7h5v1h-5zM79 7h1v1h-1zM83 7h1v1h-1zM85 7h1v1h-1zM89 7h1v1h-1zM91 7h1v1h-1zM0 8h1v1h-1zM2 8h1v1h-1zM6 8h1v1h-1zM9 8h1v1h-1zM13 8h1v1h-1zM16 8h1v1h-1zM18 8h1v1h-1zM21 8h1v1h-1zM25 8h1v1h-1zM28 8h1v1h-1zM34 8h1v1h-1zM38 8h8v1h-8zM68 8h1v1h-1zM73 8h1v1h-1zM77 8h1v1h-1zM79 8h1v1h-1zM83 8h1v1h-1zM85 8h1v1h-1zM89 8h1v1h-1zM91 8h1v1h-1zM2 9h1v1h-1zM5 9h1v1h-1zM9 9h1v1h-1zM11 9h1v1h-1zM13 9h1v1h-1zM15 9h2v1h-2zM18 9h1v1h-1zM21 9h2v1h-2zM25 9h1v1h-1zM28 9h1v1h-1zM34 9h1v1h-1zM38 9h8v1h-8zM57 9h1v1h-1zM68 9h1v1h-1zM73 9h1v1h-1zM76 9h2v1h-2zM79 9h1v1h-1zM83 9h1v1h-1zM85 9h1v1h-1zM88 9h2v1h-2zM91 9h1v1h-1zM95 9h1v1h-1zM2 10h1v1h-1zM5 10h1v1h-1zM9 10h1v1h-1zM11 10h1v1h-1zM13 10h1v1h-1zM15 10h1v1h-1zM18 10h1v1h-1zM22 10h1v1h-1zM25 10h1v1h-1zM28 10h7v1h-7zM38 10h1v1h-1zM45 10h1v1h-1zM57 10h1v1h-1zM68 10h1v1h-1zM73 10h3v1h-3zM77 10h3v1h-3zM83 10h1v1h-1zM86 10h2v1h-2zM89 10h1v1h-1zM92 10h3v1h-3zM4 11h1v1h-1zM9 11h2v1h-2zM28 11h1v1h-1zM34 11h1v1h-1zM37 11h10v1h-10z" fill="#000"/></svg>
<div class="a" style="left:18px;top:248px;width:13px;height:1px;border-top:1px dotted #8a9a8a"></div>
<div class="a" style="left:14px;top:244px;width:9px;height:9px;border:1px solid #a0a0a0;background:#f4f4ee"></div><div class="a" style="left:16px;top:248px;width:5px;height:1px;background:#000"></div>
<div class="a" style="left:18px;top:246px;width:1px;height:5px;background:#000"></div>
<svg class="ic" style="left:31.0px;top:240.0px;width:16px;height:16px" viewBox="0 0 16 16" shape-rendering="crispEdges"><path d="M3.5 1.5H12.5V5.5H10.5V14.5H5.5V5.5H3.5Z" fill="#00e0f0" stroke="#000"/><path d="M6 3H10" stroke="#008080"/><rect x="7" y="6" width="2" height="8" fill="#008080"/></svg>
<svg class="a" style="left:53px;top:242px" width="88" height="16" viewBox="0 0 88 16" shape-rendering="crispEdges"><path d="M25 0h10v1h-10zM1 1h10v1h-10zM15 1h7v1h-7zM25 1h1v1h-1zM5 2h1v1h-1zM10 2h1v1h-1zM15 2h7v1h-7zM25 2h1v1h-1zM29 2h1v1h-1zM57 2h3v1h-3zM5 3h1v1h-1zM10 3h1v1h-1zM14 3h1v1h-1zM21 3h1v1h-1zM25 3h1v1h-1zM27 3h8v1h-8zM56 3h1v1h-1zM4 4h1v1h-1zM10 4h1v1h-1zM15 4h7v1h-7zM25 4h1v1h-1zM29 4h1v1h-1zM45 4h1v1h-1zM55 4h5v1h-5zM62 4h3v1h-3zM67 4h1v1h-1zM69 4h2v1h-2zM73 4h1v1h-1zM77 4h1v1h-1zM80 4h3v1h-3zM4 5h1v1h-1zM10 5h1v1h-1zM14 5h1v1h-1zM21 5h1v1h-1zM25 5h1v1h-1zM28 5h1v1h-1zM31 5h1v1h-1zM45 5h1v1h-1zM56 5h1v1h-1zM61 5h1v1h-1zM64 5h2v1h-2zM67 5h2v1h-2zM71 5h1v1h-1zM73 5h1v1h-1zM77 5h1v1h-1zM79 5h1v1h-1zM83 5h1v1h-1zM4 6h1v1h-1zM10 6h1v1h-1zM15 6h7v1h-7zM25 6h1v1h-1zM28 6h7v1h-7zM56 6h1v1h-1zM65 6h1v1h-1zM67 6h1v1h-1zM71 6h1v1h-1zM73 6h1v1h-1zM77 6h1v1h-1zM79 6h1v1h-1zM4 7h1v1h-1zM10 7h1v1h-1zM14 7h1v1h-1zM21 7h1v1h-1zM25 7h1v1h-1zM31 7h1v1h-1zM56 7h1v1h-1zM61 7h5v1h-5zM67 7h1v1h-1zM71 7h1v1h-1zM73 7h1v1h-1zM77 7h1v1h-1zM79 7h1v1h-1zM3 8h1v1h-1zM10 8h1v1h-1zM13 8h10v1h-10zM25 8h1v1h-1zM27 8h8v1h-8zM56 8h1v1h-1zM61 8h1v1h-1zM65 8h1v1h-1zM67 8h1v1h-1zM71 8h1v1h-1zM73 8h1v1h-1zM77 8h1v1h-1zM79 8h1v1h-1zM3 9h1v1h-1zM9 9h1v1h-1zM15 9h1v1h-1zM19 9h2v1h-2zM25 9h1v1h-1zM31 9h1v1h-1zM45 9h1v1h-1zM56 9h1v1h-1zM61 9h1v1h-1zM64 9h2v1h-2zM67 9h1v1h-1zM71 9h1v1h-1zM73 9h1v1h-1zM76 9h2v1h-2zM79 9h1v1h-1zM83 9h1v1h-1zM2 10h1v1h-1zM9 10h1v1h-1zM14 10h2v1h-2zM21 10h1v1h-1zM24 10h1v1h-1zM31 10h1v1h-1zM45 10h1v1h-1zM56 10h1v1h-1zM61 10h3v1h-3zM65 10h3v1h-3zM71 10h1v1h-1zM74 10h2v1h-2zM77 10h1v1h-1zM80 10h3v1h-3zM1 11h1v1h-1zM7 11h3v1h-3zM13 11h1v1h-1zM22 11h1v1h-1z" fill="#000"/></svg>
<div class="a" style="left:18px;top:267px;width:13px;height:1px;border-top:1px dotted #8a9a8a"></div>
<div class="a" style="left:14px;top:263px;width:9px;height:9px;border:1px solid #a0a0a0;background:#f4f4ee"></div><div class="a" style="left:16px;top:267px;width:5px;height:1px;background:#000"></div>
<div class="a" style="left:18px;top:265px;width:1px;height:5px;background:#000"></div>
<svg class="ic" style="left:31.0px;top:259.0px;width:16px;height:16px" viewBox="0 0 16 16" shape-rendering="crispEdges"><path d="M7 1V10H15M7 10L1 15" stroke="#008080" stroke-width="1.3" fill="none"/><path d="M5.5 3L7 0L8.5 3ZM13 8.5L16 10L13 11.5Z" fill="#008080"/><circle cx="7" cy="10" r="1.3" fill="#00c0c0"/></svg>
<svg class="a" style="left:53px;top:261px" width="40" height="16" viewBox="0 0 40 16" shape-rendering="crispEdges"><path d="M14 0h1v1h-1zM32 0h2v1h-2zM3 1h1v1h-1zM5 1h1v1h-1zM9 1h1v1h-1zM14 1h1v1h-1zM18 1h5v1h-5zM25 1h7v1h-7zM2 2h1v1h-1zM5 2h1v1h-1zM8 2h1v1h-1zM14 2h1v1h-1zM28 2h1v1h-1zM2 3h2v1h-2zM5 3h1v1h-1zM8 3h1v1h-1zM13 3h4v1h-4zM27 3h1v1h-1zM31 3h2v1h-2zM2 4h4v1h-4zM7 4h1v1h-1zM9 4h1v1h-1zM14 4h1v1h-1zM26 4h5v1h-5zM1 5h1v1h-1zM4 5h1v1h-1zM6 5h2v1h-2zM10 5h1v1h-1zM14 5h2v1h-2zM17 5h6v1h-6zM28 5h2v1h-2zM32 5h1v1h-1zM5 6h1v1h-1zM13 6h2v1h-2zM16 6h1v1h-1zM20 6h1v1h-1zM26 6h2v1h-2zM30 6h4v1h-4zM1 7h10v1h-10zM13 7h2v1h-2zM18 7h1v1h-1zM20 7h2v1h-2zM25 7h6v1h-6zM34 7h1v1h-1zM5 8h1v1h-1zM12 8h1v1h-1zM14 8h1v1h-1zM17 8h1v1h-1zM20 8h1v1h-1zM22 8h1v1h-1zM27 8h1v1h-1zM30 8h1v1h-1zM32 8h1v1h-1zM5 9h1v1h-1zM14 9h1v1h-1zM17 9h1v1h-1zM20 9h1v1h-1zM22 9h1v1h-1zM26 9h2v1h-2zM30 9h1v1h-1zM33 9h1v1h-1zM5 10h1v1h-1zM14 10h1v1h-1zM20 10h1v1h-1zM25 10h2v1h-2zM30 10h1v1h-1zM34 10h1v1h-1zM1 11h10v1h-10zM14 11h1v1h-1zM18 11h2v1h-2zM28 11h2v1h-2z" fill="#000"/></svg>
<div class="a" style="left:18px;top:286px;width:13px;height:1px;border-top:1px dotted #8a9a8a"></div>
<div class="a" style="left:14px;top:282px;width:9px;height:9px;border:1px solid #a0a0a0;background:#f4f4ee"></div><div class="a" style="left:16px;top:286px;width:5px;height:1px;background:#000"></div>
<svg class="ic" style="left:31.0px;top:278.0px;width:16px;height:16px" viewBox="0 0 16 16" shape-rendering="crispEdges"><path d="M1.5 4.5L3.5 2.5H7.5L8.5 3.5H14.5V13.5H1.5Z" fill="#ffff40" stroke="#000"/><path d="M1.5 13.5L4 6.5H16.5L14.5 13.5Z" fill="#ffff00" stroke="#000"/><path d="M15 7L16 13" stroke="#000" stroke-width="1.5"/></svg>
<svg class="a" style="left:53px;top:280px" width="112" height="16" viewBox="0 0 112 16" shape-rendering="crispEdges"><path d="M31 0h1v1h-1zM43 0h1v1h-1zM69 0h1v1h-1zM74 0h1v1h-1zM100 0h1v1h-1zM1 1h10v1h-10zM15 1h7v1h-7zM26 1h1v1h-1zM31 1h1v1h-1zM37 1h1v1h-1zM43 1h1v1h-1zM69 1h1v1h-1zM74 1h1v1h-1zM99 1h6v1h-6zM5 2h1v1h-1zM10 2h1v1h-1zM15 2h7v1h-7zM25 2h4v1h-4zM31 2h1v1h-1zM38 2h1v1h-1zM40 2h7v1h-7zM69 2h1v1h-1zM74 2h1v1h-1zM98 2h2v1h-2zM104 2h1v1h-1zM5 3h1v1h-1zM10 3h1v1h-1zM14 3h1v1h-1zM21 3h1v1h-1zM26 3h1v1h-1zM30 3h4v1h-4zM42 3h1v1h-1zM44 3h1v1h-1zM67 3h10v1h-10zM86 3h3v1h-3zM97 3h2v1h-2zM100 3h4v1h-4zM4 4h1v1h-1zM10 4h1v1h-1zM15 4h7v1h-7zM25 4h1v1h-1zM27 4h1v1h-1zM31 4h1v1h-1zM33 4h1v1h-1zM41 4h2v1h-2zM44 4h1v1h-1zM57 4h1v1h-1zM69 4h1v1h-1zM74 4h1v1h-1zM85 4h1v1h-1zM89 4h1v1h-1zM101 4h2v1h-2zM4 5h1v1h-1zM10 5h1v1h-1zM14 5h1v1h-1zM21 5h1v1h-1zM25 5h1v1h-1zM27 5h1v1h-1zM31 5h1v1h-1zM33 5h1v1h-1zM37 5h2v1h-2zM40 5h1v1h-1zM42 5h1v1h-1zM44 5h1v1h-1zM46 5h1v1h-1zM57 5h1v1h-1zM69 5h1v1h-1zM74 5h1v1h-1zM89 5h1v1h-1zM98 5h3v1h-3zM103 5h4v1h-4zM4 6h1v1h-1zM10 6h1v1h-1zM15 6h7v1h-7zM25 6h4v1h-4zM31 6h1v1h-1zM33 6h1v1h-1zM38 6h1v1h-1zM40 6h1v1h-1zM42 6h1v1h-1zM44 6h1v1h-1zM46 6h1v1h-1zM69 6h1v1h-1zM74 6h1v1h-1zM88 6h2v1h-2zM97 6h1v1h-1zM101 6h1v1h-1zM4 7h1v1h-1zM10 7h1v1h-1zM14 7h1v1h-1zM21 7h1v1h-1zM27 7h1v1h-1zM31 7h1v1h-1zM33 7h1v1h-1zM38 7h2v1h-2zM42 7h1v1h-1zM44 7h1v1h-1zM47 7h1v1h-1zM67 7h10v1h-10zM87 7h2v1h-2zM98 7h8v1h-8zM3 8h1v1h-1zM10 8h1v1h-1zM13 8h10v1h-10zM27 8h4v1h-4zM33 8h1v1h-1zM38 8h1v1h-1zM41 8h1v1h-1zM44 8h1v1h-1zM86 8h1v1h-1zM101 8h1v1h-1zM3 9h1v1h-1zM9 9h1v1h-1zM15 9h1v1h-1zM19 9h2v1h-2zM25 9h3v1h-3zM30 9h1v1h-1zM33 9h1v1h-1zM38 9h1v1h-1zM40 9h2v1h-2zM43 9h2v1h-2zM57 9h1v1h-1zM69 9h1v1h-1zM74 9h1v1h-1zM85 9h1v1h-1zM99 9h1v1h-1zM101 9h1v1h-1zM104 9h1v1h-1zM2 10h1v1h-1zM9 10h1v1h-1zM14 10h2v1h-2zM21 10h1v1h-1zM27 10h1v1h-1zM30 10h1v1h-1zM33 10h1v1h-1zM35 10h1v1h-1zM37 10h1v1h-1zM39 10h1v1h-1zM57 10h1v1h-1zM68 10h1v1h-1zM75 10h1v1h-1zM85 10h5v1h-5zM98 10h1v1h-1zM101 10h1v1h-1zM105 10h1v1h-1zM1 11h1v1h-1zM7 11h3v1h-3zM13 11h1v1h-1zM22 11h1v1h-1zM27 11h1v1h-1zM29 11h1v1h-1zM33 11h2v1h-2zM40 11h7v1h-7zM67 11h1v1h-1zM76 11h1v1h-1zM100 11h2v1h-2z" fill="#000"/></svg>
<div class="a" style="left:39px;top:305px;width:14px;height:1px;border-top:1px dotted #8a9a8a"></div>
<div class="a" style="left:35px;top:301px;width:9px;height:9px;border:1px solid #a0a0a0;background:#f4f4ee"></div><div class="a" style="left:37px;top:305px;width:5px;height:1px;background:#000"></div>
<svg class="ic" style="left:53.0px;top:297.0px;width:16px;height:16px" viewBox="0 0 16 16" shape-rendering="crispEdges"><path d="M1.5 4.5L3.5 2.5H7.5L8.5 3.5H14.5V13.5H1.5Z" fill="#ffff40" stroke="#000"/><path d="M1.5 13.5L4 6.5H16.5L14.5 13.5Z" fill="#ffff00" stroke="#000"/><path d="M15 7L16 13" stroke="#000" stroke-width="1.5"/></svg>
<svg class="a" style="left:74px;top:299px" width="88" height="16" viewBox="0 0 88 16" shape-rendering="crispEdges"><path d="M26 0h1v1h-1zM32 0h2v1h-2zM43 0h1v1h-1zM45 0h1v1h-1zM54 0h4v1h-4zM62 0h1v1h-1zM13 1h10v1h-10zM26 1h1v1h-1zM32 1h1v1h-1zM34 1h1v1h-1zM43 1h1v1h-1zM46 1h1v1h-1zM49 1h2v1h-2zM52 1h1v1h-1zM54 1h1v1h-1zM57 1h1v1h-1zM62 1h1v1h-1zM73 1h10v1h-10zM13 2h1v1h-1zM26 2h1v1h-1zM28 2h7v1h-7zM37 2h10v1h-10zM49 2h2v1h-2zM52 2h1v1h-1zM54 2h1v1h-1zM57 2h1v1h-1zM61 2h5v1h-5zM67 2h4v1h-4zM77 2h1v1h-1zM3 3h1v1h-1zM13 3h1v1h-1zM15 3h1v1h-1zM20 3h1v1h-1zM26 3h1v1h-1zM32 3h1v1h-1zM43 3h1v1h-1zM49 3h2v1h-2zM52 3h1v1h-1zM54 3h1v1h-1zM57 3h1v1h-1zM62 3h1v1h-1zM65 3h1v1h-1zM67 3h1v1h-1zM70 3h1v1h-1zM77 3h1v1h-1zM1 4h3v1h-3zM13 4h1v1h-1zM16 4h1v1h-1zM20 4h1v1h-1zM25 4h6v1h-6zM32 4h1v1h-1zM34 4h1v1h-1zM43 4h1v1h-1zM49 4h4v1h-4zM54 4h4v1h-4zM62 4h1v1h-1zM65 4h1v1h-1zM67 4h1v1h-1zM70 4h1v1h-1zM77 4h1v1h-1zM3 5h1v1h-1zM13 5h1v1h-1zM17 5h1v1h-1zM19 5h1v1h-1zM26 5h1v1h-1zM28 5h1v1h-1zM30 5h1v1h-1zM32 5h1v1h-1zM34 5h1v1h-1zM37 5h5v1h-5zM43 5h1v1h-1zM50 5h2v1h-2zM54 5h1v1h-1zM57 5h1v1h-1zM62 5h1v1h-1zM65 5h1v1h-1zM67 5h1v1h-1zM70 5h1v1h-1zM77 5h1v1h-1zM3 6h1v1h-1zM13 6h1v1h-1zM18 6h1v1h-1zM26 6h1v1h-1zM28 6h1v1h-1zM30 6h1v1h-1zM32 6h2v1h-2zM39 6h1v1h-1zM43 6h1v1h-1zM50 6h2v1h-2zM54 6h1v1h-1zM57 6h1v1h-1zM62 6h1v1h-1zM65 6h1v1h-1zM67 6h1v1h-1zM70 6h1v1h-1zM77 6h1v1h-1zM3 7h1v1h-1zM8 7h3v1h-3zM13 7h1v1h-1zM17 7h1v1h-1zM19 7h1v1h-1zM26 7h1v1h-1zM28 7h3v1h-3zM32 7h2v1h-2zM39 7h1v1h-1zM43 7h1v1h-1zM49 7h2v1h-2zM52 7h1v1h-1zM54 7h4v1h-4zM62 7h1v1h-1zM65 7h1v1h-1zM67 7h1v1h-1zM70 7h1v1h-1zM77 7h1v1h-1zM3 8h1v1h-1zM13 8h1v1h-1zM16 8h1v1h-1zM20 8h1v1h-1zM26 8h2v1h-2zM31 8h3v1h-3zM39 8h1v1h-1zM44 8h1v1h-1zM49 8h2v1h-2zM54 8h1v1h-1zM57 8h1v1h-1zM62 8h1v1h-1zM65 8h1v1h-1zM67 8h1v1h-1zM70 8h1v1h-1zM77 8h1v1h-1zM3 9h1v1h-1zM13 9h1v1h-1zM15 9h1v1h-1zM21 9h1v1h-1zM25 9h1v1h-1zM28 9h3v1h-3zM32 9h2v1h-2zM39 9h1v1h-1zM41 9h2v1h-2zM44 9h1v1h-1zM47 9h2v1h-2zM50 9h1v1h-1zM54 9h1v1h-1zM57 9h1v1h-1zM61 9h1v1h-1zM65 9h1v1h-1zM67 9h1v1h-1zM70 9h1v1h-1zM77 9h1v1h-1zM1 10h6v1h-6zM13 10h1v1h-1zM31 10h1v1h-1zM33 10h2v1h-2zM37 10h4v1h-4zM44 10h1v1h-1zM46 10h1v1h-1zM50 10h1v1h-1zM54 10h1v1h-1zM57 10h1v1h-1zM61 10h1v1h-1zM65 10h1v1h-1zM67 10h4v1h-4zM73 10h10v1h-10zM13 11h10v1h-10zM30 11h1v1h-1zM33 11h2v1h-2zM45 11h2v1h-2zM53 11h8v1h-8zM63 11h2v1h-2zM67 11h1v1h-1zM70 11h1v1h-1z" fill="#000"/></svg>
<div class="a" style="left:61px;top:324px;width:14px;height:1px;border-top:1px dotted #8a9a8a"></div>
<svg class="ic" style="left:75.0px;top:316.0px;width:16px;height:16px" viewBox="0 0 16 16" shape-rendering="crispEdges"><ellipse cx="7.5" cy="10.5" rx="6.5" ry="4" fill="#fff" stroke="#0000e0" stroke-width="1.3"/><path d="M3 13L8 7M6 14L11 8M9 14L13 9M2 11L5 7" stroke="#0000e0" stroke-width="1.2"/><rect x="9" y="1" width="2" height="9" fill="#800060"/></svg>
<svg class="a" style="left:97px;top:318px" width="52" height="16" viewBox="0 0 52 16" shape-rendering="crispEdges"><path d="M7 0h1v1h-1zM19 0h1v1h-1zM25 0h1v1h-1zM27 0h2v1h-2zM31 0h1v1h-1zM38 0h1v1h-1zM2 1h1v1h-1zM7 1h1v1h-1zM13 1h1v1h-1zM19 1h1v1h-1zM25 1h5v1h-5zM31 1h4v1h-4zM38 1h1v1h-1zM41 1h6v1h-6zM1 2h4v1h-4zM7 2h1v1h-1zM14 2h1v1h-1zM16 2h7v1h-7zM26 2h3v1h-3zM31 2h1v1h-1zM33 2h1v1h-1zM38 2h1v1h-1zM41 2h1v1h-1zM46 2h1v1h-1zM2 3h1v1h-1zM6 3h4v1h-4zM18 3h1v1h-1zM20 3h1v1h-1zM26 3h2v1h-2zM29 3h1v1h-1zM31 3h1v1h-1zM33 3h1v1h-1zM36 3h4v1h-4zM41 3h6v1h-6zM1 4h1v1h-1zM3 4h1v1h-1zM7 4h1v1h-1zM9 4h1v1h-1zM17 4h2v1h-2zM20 4h1v1h-1zM25 4h1v1h-1zM27 4h1v1h-1zM30 4h2v1h-2zM33 4h1v1h-1zM38 4h1v1h-1zM41 4h1v1h-1zM44 4h1v1h-1zM1 5h1v1h-1zM3 5h1v1h-1zM7 5h1v1h-1zM9 5h1v1h-1zM13 5h2v1h-2zM16 5h1v1h-1zM18 5h1v1h-1zM20 5h1v1h-1zM22 5h1v1h-1zM27 5h1v1h-1zM30 5h2v1h-2zM33 5h1v1h-1zM38 5h1v1h-1zM41 5h6v1h-6zM1 6h4v1h-4zM7 6h1v1h-1zM9 6h1v1h-1zM14 6h1v1h-1zM16 6h1v1h-1zM18 6h1v1h-1zM20 6h1v1h-1zM22 6h1v1h-1zM25 6h5v1h-5zM32 6h2v1h-2zM37 6h3v1h-3zM41 6h1v1h-1zM44 6h1v1h-1zM3 7h1v1h-1zM7 7h1v1h-1zM9 7h1v1h-1zM14 7h2v1h-2zM18 7h1v1h-1zM20 7h1v1h-1zM23 7h1v1h-1zM26 7h1v1h-1zM28 7h1v1h-1zM32 7h1v1h-1zM36 7h3v1h-3zM40 7h1v1h-1zM44 7h1v1h-1zM3 8h4v1h-4zM9 8h1v1h-1zM14 8h1v1h-1zM17 8h1v1h-1zM20 8h1v1h-1zM26 8h3v1h-3zM32 8h2v1h-2zM38 8h1v1h-1zM40 8h1v1h-1zM42 8h5v1h-5zM1 9h3v1h-3zM6 9h1v1h-1zM9 9h1v1h-1zM14 9h1v1h-1zM16 9h2v1h-2zM19 9h2v1h-2zM26 9h3v1h-3zM31 9h1v1h-1zM34 9h1v1h-1zM38 9h1v1h-1zM40 9h1v1h-1zM42 9h1v1h-1zM46 9h1v1h-1zM3 10h1v1h-1zM6 10h1v1h-1zM9 10h1v1h-1zM11 10h1v1h-1zM13 10h1v1h-1zM15 10h1v1h-1zM25 10h1v1h-1zM30 10h1v1h-1zM34 10h1v1h-1zM38 10h1v1h-1zM40 10h1v1h-1zM42 10h1v1h-1zM46 10h1v1h-1zM3 11h1v1h-1zM5 11h1v1h-1zM9 11h2v1h-2zM16 11h7v1h-7zM37 11h3v1h-3zM42 11h5v1h-5z" fill="#000"/></svg>
<div class="a" style="left:61px;top:343px;width:14px;height:1px;border-top:1px dotted #8a9a8a"></div>
<svg class="ic" style="left:75.0px;top:335.0px;width:16px;height:16px" viewBox="0 0 16 16" shape-rendering="crispEdges"><path d="M1 3H7V5H15V15H1Z" fill="#0000e0"/><path d="M2 6.5H14M2 9H14M2 11.5H14" stroke="#fff" stroke-width="1"/><rect x="2" y="13" width="12" height="1" fill="#fff"/></svg>
<svg class="a" style="left:97px;top:337px" width="52" height="16" viewBox="0 0 52 16" shape-rendering="crispEdges"><path d="M2 0h1v1h-1zM27 0h2v1h-2zM32 0h1v1h-1zM37 0h1v1h-1zM39 0h2v1h-2zM43 0h1v1h-1zM2 1h1v1h-1zM13 1h10v1h-10zM26 1h8v1h-8zM37 1h5v1h-5zM43 1h4v1h-4zM1 2h5v1h-5zM7 2h4v1h-4zM17 2h1v1h-1zM29 2h1v1h-1zM38 2h3v1h-3zM43 2h1v1h-1zM45 2h1v1h-1zM2 3h1v1h-1zM5 3h1v1h-1zM7 3h1v1h-1zM10 3h1v1h-1zM17 3h1v1h-1zM25 3h10v1h-10zM38 3h2v1h-2zM41 3h1v1h-1zM43 3h1v1h-1zM45 3h1v1h-1zM2 4h1v1h-1zM5 4h1v1h-1zM7 4h1v1h-1zM10 4h1v1h-1zM17 4h1v1h-1zM27 4h1v1h-1zM32 4h1v1h-1zM37 4h1v1h-1zM39 4h1v1h-1zM42 4h2v1h-2zM45 4h1v1h-1zM2 5h1v1h-1zM5 5h1v1h-1zM7 5h1v1h-1zM10 5h1v1h-1zM17 5h1v1h-1zM26 5h2v1h-2zM29 5h2v1h-2zM32 5h2v1h-2zM39 5h1v1h-1zM42 5h2v1h-2zM45 5h1v1h-1zM2 6h1v1h-1zM5 6h1v1h-1zM7 6h1v1h-1zM10 6h1v1h-1zM17 6h1v1h-1zM25 6h1v1h-1zM27 6h2v1h-2zM31 6h1v1h-1zM34 6h2v1h-2zM37 6h5v1h-5zM44 6h2v1h-2zM2 7h1v1h-1zM5 7h1v1h-1zM7 7h1v1h-1zM10 7h1v1h-1zM17 7h1v1h-1zM29 7h2v1h-2zM38 7h1v1h-1zM40 7h1v1h-1zM44 7h1v1h-1zM2 8h1v1h-1zM5 8h1v1h-1zM7 8h1v1h-1zM10 8h1v1h-1zM17 8h1v1h-1zM27 8h2v1h-2zM32 8h1v1h-1zM38 8h3v1h-3zM44 8h2v1h-2zM1 9h1v1h-1zM5 9h1v1h-1zM7 9h1v1h-1zM10 9h1v1h-1zM17 9h1v1h-1zM30 9h2v1h-2zM38 9h3v1h-3zM43 9h1v1h-1zM46 9h1v1h-1zM1 10h1v1h-1zM5 10h1v1h-1zM7 10h4v1h-4zM13 10h10v1h-10zM26 10h4v1h-4zM37 10h1v1h-1zM42 10h1v1h-1zM46 10h1v1h-1zM0 11h1v1h-1zM3 11h2v1h-2zM7 11h1v1h-1zM10 11h1v1h-1z" fill="#000"/></svg>
<div class="a" style="left:61px;top:362px;width:14px;height:1px;border-top:1px dotted #8a9a8a"></div>
<svg class="ic" style="left:75.0px;top:354.0px;width:16px;height:16px" viewBox="0 0 16 16" shape-rendering="crispEdges"><path d="M4.5 1.5H11.5V12L8 15L4.5 12Z" fill="#0000e0"/><path d="M6 10L10 4M6 12.5L10 7" stroke="#ffff40" stroke-width="1"/></svg>
<svg class="a" style="left:97px;top:356px" width="82" height="16" viewBox="0 0 82 16" shape-rendering="crispEdges"><path d="M2 0h1v1h-1zM6 0h1v1h-1zM8 0h1v1h-1zM2 1h1v1h-1zM6 1h1v1h-1zM8 1h1v1h-1zM13 1h10v1h-10zM1 2h4v1h-4zM6 2h5v1h-5zM17 2h1v1h-1zM22 2h1v1h-1zM0 3h1v1h-1zM5 3h1v1h-1zM8 3h1v1h-1zM17 3h1v1h-1zM22 3h1v1h-1zM31 3h4v1h-4zM39 3h1v1h-1zM44 3h3v1h-3zM55 3h1v1h-1zM59 3h1v1h-1zM74 3h3v1h-3zM1 4h5v1h-5zM8 4h1v1h-1zM16 4h1v1h-1zM22 4h1v1h-1zM31 4h1v1h-1zM34 4h2v1h-2zM37 4h3v1h-3zM43 4h1v1h-1zM47 4h1v1h-1zM55 4h2v1h-2zM59 4h1v1h-1zM62 4h3v1h-3zM69 4h1v1h-1zM73 4h1v1h-1zM77 4h1v1h-1zM2 5h1v1h-1zM5 5h6v1h-6zM16 5h1v1h-1zM22 5h1v1h-1zM31 5h1v1h-1zM35 5h1v1h-1zM39 5h1v1h-1zM43 5h1v1h-1zM47 5h1v1h-1zM55 5h2v1h-2zM59 5h1v1h-1zM61 5h1v1h-1zM65 5h1v1h-1zM69 5h1v1h-1zM73 5h1v1h-1zM77 5h1v1h-1zM1 6h4v1h-4zM7 6h1v1h-1zM9 6h1v1h-1zM16 6h1v1h-1zM22 6h1v1h-1zM31 6h1v1h-1zM35 6h1v1h-1zM39 6h1v1h-1zM43 6h1v1h-1zM45 6h1v1h-1zM47 6h1v1h-1zM55 6h1v1h-1zM57 6h1v1h-1zM59 6h1v1h-1zM61 6h1v1h-1zM65 6h1v1h-1zM73 6h1v1h-1zM75 6h1v1h-1zM77 6h1v1h-1zM2 7h1v1h-1zM7 7h1v1h-1zM9 7h1v1h-1zM16 7h1v1h-1zM22 7h1v1h-1zM31 7h1v1h-1zM35 7h1v1h-1zM39 7h1v1h-1zM43 7h1v1h-1zM47 7h1v1h-1zM55 7h1v1h-1zM57 7h1v1h-1zM59 7h1v1h-1zM61 7h1v1h-1zM65 7h1v1h-1zM73 7h1v1h-1zM77 7h1v1h-1zM2 8h1v1h-1zM6 8h1v1h-1zM9 8h1v1h-1zM15 8h1v1h-1zM22 8h1v1h-1zM31 8h1v1h-1zM35 8h1v1h-1zM39 8h1v1h-1zM43 8h1v1h-1zM47 8h1v1h-1zM55 8h1v1h-1zM58 8h2v1h-2zM61 8h1v1h-1zM65 8h1v1h-1zM73 8h1v1h-1zM77 8h1v1h-1zM2 9h1v1h-1zM4 9h1v1h-1zM6 9h1v1h-1zM9 9h1v1h-1zM15 9h1v1h-1zM21 9h1v1h-1zM31 9h1v1h-1zM34 9h2v1h-2zM39 9h1v1h-1zM43 9h1v1h-1zM47 9h1v1h-1zM55 9h1v1h-1zM58 9h2v1h-2zM61 9h1v1h-1zM65 9h1v1h-1zM69 9h1v1h-1zM73 9h1v1h-1zM77 9h1v1h-1zM2 10h2v1h-2zM6 10h1v1h-1zM9 10h1v1h-1zM11 10h1v1h-1zM14 10h1v1h-1zM21 10h1v1h-1zM31 10h4v1h-4zM37 10h6v1h-6zM44 10h3v1h-3zM55 10h1v1h-1zM59 10h1v1h-1zM62 10h3v1h-3zM69 10h1v1h-1zM74 10h3v1h-3zM2 11h1v1h-1zM5 11h1v1h-1zM9 11h2v1h-2zM13 11h1v1h-1zM19 11h3v1h-3z" fill="#000"/></svg>
<div class="a" style="left:61px;top:381px;width:14px;height:1px;border-top:1px dotted #8a9a8a"></div>
<div class="a" style="left:57px;top:377px;width:9px;height:9px;border:1px solid #a0a0a0;background:#f4f4ee"></div><div class="a" style="left:59px;top:381px;width:5px;height:1px;background:#000"></div>
<div class="a" style="left:61px;top:379px;width:1px;height:5px;background:#000"></div>
<svg class="ic" style="left:75.0px;top:373.0px;width:16px;height:16px" viewBox="0 0 16 16" shape-rendering="crispEdges"><path d="M2 1V15H15Z" fill="#0000e0"/><circle cx="6.5" cy="11" r="1.8" fill="#fff"/></svg>
<svg class="a" style="left:97px;top:375px" width="52" height="16" viewBox="0 0 52 16" shape-rendering="crispEdges"><path d="M15 0h1v1h-1zM3 1h6v1h-6zM15 1h9v1h-9zM26 1h8v1h-8zM37 1h10v1h-10zM3 2h1v1h-1zM8 2h1v1h-1zM14 2h1v1h-1zM22 2h1v1h-1zM38 2h8v1h-8zM3 3h1v1h-1zM8 3h1v1h-1zM14 3h1v1h-1zM22 3h1v1h-1zM41 3h1v1h-1zM3 4h1v1h-1zM8 4h1v1h-1zM13 4h2v1h-2zM16 4h4v1h-4zM22 4h1v1h-1zM37 4h10v1h-10zM3 5h1v1h-1zM8 5h1v1h-1zM12 5h1v1h-1zM14 5h1v1h-1zM16 5h1v1h-1zM19 5h1v1h-1zM22 5h1v1h-1zM25 5h10v1h-10zM40 5h1v1h-1zM44 5h1v1h-1zM3 6h1v1h-1zM8 6h1v1h-1zM14 6h1v1h-1zM16 6h1v1h-1zM19 6h1v1h-1zM22 6h1v1h-1zM28 6h1v1h-1zM31 6h1v1h-1zM38 6h6v1h-6zM3 7h1v1h-1zM8 7h1v1h-1zM14 7h1v1h-1zM16 7h1v1h-1zM19 7h1v1h-1zM22 7h1v1h-1zM28 7h1v1h-1zM31 7h1v1h-1zM40 7h1v1h-1zM44 7h2v1h-2zM3 8h1v1h-1zM8 8h1v1h-1zM14 8h1v1h-1zM16 8h4v1h-4zM22 8h1v1h-1zM27 8h1v1h-1zM31 8h1v1h-1zM37 8h8v1h-8zM46 8h1v1h-1zM2 9h1v1h-1zM8 9h1v1h-1zM11 9h1v1h-1zM14 9h1v1h-1zM16 9h1v1h-1zM22 9h1v1h-1zM27 9h1v1h-1zM31 9h1v1h-1zM34 9h1v1h-1zM39 9h1v1h-1zM42 9h1v1h-1zM44 9h1v1h-1zM2 10h1v1h-1zM8 10h1v1h-1zM10 10h1v1h-1zM14 10h1v1h-1zM22 10h1v1h-1zM26 10h1v1h-1zM31 10h1v1h-1zM34 10h1v1h-1zM38 10h1v1h-1zM42 10h1v1h-1zM45 10h1v1h-1zM1 11h1v1h-1zM8 11h3v1h-3zM14 11h1v1h-1zM20 11h2v1h-2zM25 11h1v1h-1zM31 11h4v1h-4zM37 11h1v1h-1zM40 11h2v1h-2zM46 11h1v1h-1z" fill="#000"/></svg>
<div class="a" style="left:39px;top:400px;width:14px;height:1px;border-top:1px dotted #8a9a8a"></div>
<div class="a" style="left:35px;top:396px;width:9px;height:9px;border:1px solid #a0a0a0;background:#f4f4ee"></div><div class="a" style="left:37px;top:400px;width:5px;height:1px;background:#000"></div>
<svg class="ic" style="left:53.0px;top:392.0px;width:16px;height:16px" viewBox="0 0 16 16" shape-rendering="crispEdges"><path d="M1.5 4.5L3.5 2.5H7.5L8.5 3.5H14.5V13.5H1.5Z" fill="#ffff40" stroke="#000"/><path d="M1.5 13.5L4 6.5H16.5L14.5 13.5Z" fill="#ffff00" stroke="#000"/><path d="M15 7L16 13" stroke="#000" stroke-width="1.5"/></svg>
<div class="a" style="left:73px;top:391px;width:86px;height:18px;background:#316AC5"></div>
<svg class="a" style="left:74px;top:394px" width="88" height="16" viewBox="0 0 88 16" shape-rendering="crispEdges"><path d="M26 0h1v1h-1zM32 0h2v1h-2zM43 0h1v1h-1zM45 0h1v1h-1zM54 0h4v1h-4zM62 0h1v1h-1zM13 1h10v1h-10zM26 1h1v1h-1zM32 1h1v1h-1zM34 1h1v1h-1zM43 1h1v1h-1zM46 1h1v1h-1zM49 1h2v1h-2zM52 1h1v1h-1zM54 1h1v1h-1zM57 1h1v1h-1zM62 1h1v1h-1zM73 1h10v1h-10zM13 2h1v1h-1zM26 2h1v1h-1zM28 2h7v1h-7zM37 2h10v1h-10zM49 2h2v1h-2zM52 2h1v1h-1zM54 2h1v1h-1zM57 2h1v1h-1zM61 2h5v1h-5zM67 2h4v1h-4zM77 2h1v1h-1zM2 3h3v1h-3zM13 3h1v1h-1zM15 3h1v1h-1zM20 3h1v1h-1zM26 3h1v1h-1zM32 3h1v1h-1zM43 3h1v1h-1zM49 3h2v1h-2zM52 3h1v1h-1zM54 3h1v1h-1zM57 3h1v1h-1zM62 3h1v1h-1zM65 3h1v1h-1zM67 3h1v1h-1zM70 3h1v1h-1zM77 3h1v1h-1zM1 4h1v1h-1zM5 4h1v1h-1zM13 4h1v1h-1zM16 4h1v1h-1zM20 4h1v1h-1zM25 4h6v1h-6zM32 4h1v1h-1zM34 4h1v1h-1zM43 4h1v1h-1zM49 4h4v1h-4zM54 4h4v1h-4zM62 4h1v1h-1zM65 4h1v1h-1zM67 4h1v1h-1zM70 4h1v1h-1zM77 4h1v1h-1zM5 5h1v1h-1zM13 5h1v1h-1zM17 5h1v1h-1zM19 5h1v1h-1zM26 5h1v1h-1zM28 5h1v1h-1zM30 5h1v1h-1zM32 5h1v1h-1zM34 5h1v1h-1zM37 5h5v1h-5zM43 5h1v1h-1zM50 5h2v1h-2zM54 5h1v1h-1zM57 5h1v1h-1zM62 5h1v1h-1zM65 5h1v1h-1zM67 5h1v1h-1zM70 5h1v1h-1zM77 5h1v1h-1zM4 6h2v1h-2zM13 6h1v1h-1zM18 6h1v1h-1zM26 6h1v1h-1zM28 6h1v1h-1zM30 6h1v1h-1zM32 6h2v1h-2zM39 6h1v1h-1zM43 6h1v1h-1zM50 6h2v1h-2zM54 6h1v1h-1zM57 6h1v1h-1zM62 6h1v1h-1zM65 6h1v1h-1zM67 6h1v1h-1zM70 6h1v1h-1zM77 6h1v1h-1zM3 7h2v1h-2zM8 7h3v1h-3zM13 7h1v1h-1zM17 7h1v1h-1zM19 7h1v1h-1zM26 7h1v1h-1zM28 7h3v1h-3zM32 7h2v1h-2zM39 7h1v1h-1zM43 7h1v1h-1zM49 7h2v1h-2zM52 7h1v1h-1zM54 7h4v1h-4zM62 7h1v1h-1zM65 7h1v1h-1zM67 7h1v1h-1zM70 7h1v1h-1zM77 7h1v1h-1zM2 8h1v1h-1zM13 8h1v1h-1zM16 8h1v1h-1zM20 8h1v1h-1zM26 8h2v1h-2zM31 8h3v1h-3zM39 8h1v1h-1zM44 8h1v1h-1zM49 8h2v1h-2zM54 8h1v1h-1zM57 8h1v1h-1zM62 8h1v1h-1zM65 8h1v1h-1zM67 8h1v1h-1zM70 8h1v1h-1zM77 8h1v1h-1zM1 9h1v1h-1zM13 9h1v1h-1zM15 9h1v1h-1zM21 9h1v1h-1zM25 9h1v1h-1zM28 9h3v1h-3zM32 9h2v1h-2zM39 9h1v1h-1zM41 9h2v1h-2zM44 9h1v1h-1zM47 9h2v1h-2zM50 9h1v1h-1zM54 9h1v1h-1zM57 9h1v1h-1zM61 9h1v1h-1zM65 9h1v1h-1zM67 9h1v1h-1zM70 9h1v1h-1zM77 9h1v1h-1zM1 10h5v1h-5zM13 10h1v1h-1zM31 10h1v1h-1zM33 10h2v1h-2zM37 10h4v1h-4zM44 10h1v1h-1zM46 10h1v1h-1zM50 10h1v1h-1zM54 10h1v1h-1zM57 10h1v1h-1zM61 10h1v1h-1zM65 10h1v1h-1zM67 10h4v1h-4zM73 10h10v1h-10zM13 11h10v1h-10zM30 11h1v1h-1zM33 11h2v1h-2zM45 11h2v1h-2zM53 11h8v1h-8zM63 11h2v1h-2zM67 11h1v1h-1zM70 11h1v1h-1z" fill="#fff"/></svg>
<div class="a" style="left:61px;top:419px;width:14px;height:1px;border-top:1px dotted #8a9a8a"></div>
<svg class="ic" style="left:75.0px;top:411.0px;width:16px;height:16px" viewBox="0 0 16 16" shape-rendering="crispEdges"><ellipse cx="7.5" cy="10.5" rx="6.5" ry="4" fill="#fff" stroke="#0000e0" stroke-width="1.3"/><path d="M3 13L8 7M6 14L11 8M9 14L13 9M2 11L5 7" stroke="#0000e0" stroke-width="1.2"/><rect x="9" y="1" width="2" height="9" fill="#800060"/></svg>
<svg class="a" style="left:97px;top:413px" width="52" height="16" viewBox="0 0 52 16" shape-rendering="crispEdges"><path d="M7 0h1v1h-1zM19 0h1v1h-1zM25 0h1v1h-1zM27 0h2v1h-2zM31 0h1v1h-1zM38 0h1v1h-1zM2 1h1v1h-1zM7 1h1v1h-1zM13 1h1v1h-1zM19 1h1v1h-1zM25 1h5v1h-5zM31 1h4v1h-4zM38 1h1v1h-1zM41 1h6v1h-6zM1 2h4v1h-4zM7 2h1v1h-1zM14 2h1v1h-1zM16 2h7v1h-7zM26 2h3v1h-3zM31 2h1v1h-1zM33 2h1v1h-1zM38 2h1v1h-1zM41 2h1v1h-1zM46 2h1v1h-1zM2 3h1v1h-1zM6 3h4v1h-4zM18 3h1v1h-1zM20 3h1v1h-1zM26 3h2v1h-2zM29 3h1v1h-1zM31 3h1v1h-1zM33 3h1v1h-1zM36 3h4v1h-4zM41 3h6v1h-6zM1 4h1v1h-1zM3 4h1v1h-1zM7 4h1v1h-1zM9 4h1v1h-1zM17 4h2v1h-2zM20 4h1v1h-1zM25 4h1v1h-1zM27 4h1v1h-1zM30 4h2v1h-2zM33 4h1v1h-1zM38 4h1v1h-1zM41 4h1v1h-1zM44 4h1v1h-1zM1 5h1v1h-1zM3 5h1v1h-1zM7 5h1v1h-1zM9 5h1v1h-1zM13 5h2v1h-2zM16 5h1v1h-1zM18 5h1v1h-1zM20 5h1v1h-1zM22 5h1v1h-1zM27 5h1v1h-1zM30 5h2v1h-2zM33 5h1v1h-1zM38 5h1v1h-1zM41 5h6v1h-6zM1 6h4v1h-4zM7 6h1v1h-1zM9 6h1v1h-1zM14 6h1v1h-1zM16 6h1v1h-1zM18 6h1v1h-1zM20 6h1v1h-1zM22 6h1v1h-1zM25 6h5v1h-5zM32 6h2v1h-2zM37 6h3v1h-3zM41 6h1v1h-1zM44 6h1v1h-1zM3 7h1v1h-1zM7 7h1v1h-1zM9 7h1v1h-1zM14 7h2v1h-2zM18 7h1v1h-1zM20 7h1v1h-1zM23 7h1v1h-1zM26 7h1v1h-1zM28 7h1v1h-1zM32 7h1v1h-1zM36 7h3v1h-3zM40 7h1v1h-1zM44 7h1v1h-1zM3 8h4v1h-4zM9 8h1v1h-1zM14 8h1v1h-1zM17 8h1v1h-1zM20 8h1v1h-1zM26 8h3v1h-3zM32 8h2v1h-2zM38 8h1v1h-1zM40 8h1v1h-1zM42 8h5v1h-5zM1 9h3v1h-3zM6 9h1v1h-1zM9 9h1v1h-1zM14 9h1v1h-1zM16 9h2v1h-2zM19 9h2v1h-2zM26 9h3v1h-3zM31 9h1v1h-1zM34 9h1v1h-1zM38 9h1v1h-1zM40 9h1v1h-1zM42 9h1v1h-1zM46 9h1v1h-1zM3 10h1v1h-1zM6 10h1v1h-1zM9 10h1v1h-1zM11 10h1v1h-1zM13 10h1v1h-1zM15 10h1v1h-1zM25 10h1v1h-1zM30 10h1v1h-1zM34 10h1v1h-1zM38 10h1v1h-1zM40 10h1v1h-1zM42 10h1v1h-1zM46 10h1v1h-1zM3 11h1v1h-1zM5 11h1v1h-1zM9 11h2v1h-2zM16 11h7v1h-7zM37 11h3v1h-3zM42 11h5v1h-5z" fill="#000"/></svg>
<div class="a" style="left:61px;top:438px;width:14px;height:1px;border-top:1px dotted #8a9a8a"></div>
<svg class="ic" style="left:75.0px;top:430.0px;width:16px;height:16px" viewBox="0 0 16 16" shape-rendering="crispEdges"><path d="M1 3H7V5H15V15H1Z" fill="#0000e0"/><path d="M2 6.5H14M2 9H14M2 11.5H14" stroke="#fff" stroke-width="1"/><rect x="2" y="13" width="12" height="1" fill="#fff"/></svg>
<svg class="a" style="left:97px;top:432px" width="52" height="16" viewBox="0 0 52 16" shape-rendering="crispEdges"><path d="M2 0h1v1h-1zM27 0h2v1h-2zM32 0h1v1h-1zM37 0h1v1h-1zM39 0h2v1h-2zM43 0h1v1h-1zM2 1h1v1h-1zM13 1h10v1h-10zM26 1h8v1h-8zM37 1h5v1h-5zM43 1h4v1h-4zM1 2h5v1h-5zM7 2h4v1h-4zM17 2h1v1h-1zM29 2h1v1h-1zM38 2h3v1h-3zM43 2h1v1h-1zM45 2h1v1h-1zM2 3h1v1h-1zM5 3h1v1h-1zM7 3h1v1h-1zM10 3h1v1h-1zM17 3h1v1h-1zM25 3h10v1h-10zM38 3h2v1h-2zM41 3h1v1h-1zM43 3h1v1h-1zM45 3h1v1h-1zM2 4h1v1h-1zM5 4h1v1h-1zM7 4h1v1h-1zM10 4h1v1h-1zM17 4h1v1h-1zM27 4h1v1h-1zM32 4h1v1h-1zM37 4h1v1h-1zM39 4h1v1h-1zM42 4h2v1h-2zM45 4h1v1h-1zM2 5h1v1h-1zM5 5h1v1h-1zM7 5h1v1h-1zM10 5h1v1h-1zM17 5h1v1h-1zM26 5h2v1h-2zM29 5h2v1h-2zM32 5h2v1h-2zM39 5h1v1h-1zM42 5h2v1h-2zM45 5h1v1h-1zM2 6h1v1h-1zM5 6h1v1h-1zM7 6h1v1h-1zM10 6h1v1h-1zM17 6h1v1h-1zM25 6h1v1h-1zM27 6h2v1h-2zM31 6h1v1h-1zM34 6h2v1h-2zM37 6h5v1h-5zM44 6h2v1h-2zM2 7h1v1h-1zM5 7h1v1h-1zM7 7h1v1h-1zM10 7h1v1h-1zM17 7h1v1h-1zM29 7h2v1h-2zM38 7h1v1h-1zM40 7h1v1h-1zM44 7h1v1h-1zM2 8h1v1h-1zM5 8h1v1h-1zM7 8h1v1h-1zM10 8h1v1h-1zM17 8h1v1h-1zM27 8h2v1h-2zM32 8h1v1h-1zM38 8h3v1h-3zM44 8h2v1h-2zM1 9h1v1h-1zM5 9h1v1h-1zM7 9h1v1h-1zM10 9h1v1h-1zM17 9h1v1h-1zM30 9h2v1h-2zM38 9h3v1h-3zM43 9h1v1h-1zM46 9h1v1h-1zM1 10h1v1h-1zM5 10h1v1h-1zM7 10h4v1h-4zM13 10h10v1h-10zM26 10h4v1h-4zM37 10h1v1h-1zM42 10h1v1h-1zM46 10h1v1h-1zM0 11h1v1h-1zM3 11h2v1h-2zM7 11h1v1h-1zM10 11h1v1h-1z" fill="#000"/></svg>
<div class="a" style="left:61px;top:457px;width:14px;height:1px;border-top:1px dotted #8a9a8a"></div>
<svg class="ic" style="left:75.0px;top:449.0px;width:16px;height:16px" viewBox="0 0 16 16" shape-rendering="crispEdges"><path d="M4.5 1.5H11.5V12L8 15L4.5 12Z" fill="#0000e0"/><path d="M6 10L10 4M6 12.5L10 7" stroke="#ffff40" stroke-width="1"/></svg>
<svg class="a" style="left:97px;top:451px" width="82" height="16" viewBox="0 0 82 16" shape-rendering="crispEdges"><path d="M2 0h1v1h-1zM6 0h1v1h-1zM8 0h1v1h-1zM2 1h1v1h-1zM6 1h1v1h-1zM8 1h1v1h-1zM13 1h10v1h-10zM1 2h4v1h-4zM6 2h5v1h-5zM17 2h1v1h-1zM22 2h1v1h-1zM0 3h1v1h-1zM5 3h1v1h-1zM8 3h1v1h-1zM17 3h1v1h-1zM22 3h1v1h-1zM31 3h4v1h-4zM39 3h1v1h-1zM44 3h3v1h-3zM55 3h1v1h-1zM59 3h1v1h-1zM74 3h3v1h-3zM1 4h5v1h-5zM8 4h1v1h-1zM16 4h1v1h-1zM22 4h1v1h-1zM31 4h1v1h-1zM34 4h2v1h-2zM37 4h3v1h-3zM43 4h1v1h-1zM47 4h1v1h-1zM55 4h2v1h-2zM59 4h1v1h-1zM62 4h3v1h-3zM69 4h1v1h-1zM73 4h1v1h-1zM77 4h1v1h-1zM2 5h1v1h-1zM5 5h6v1h-6zM16 5h1v1h-1zM22 5h1v1h-1zM31 5h1v1h-1zM35 5h1v1h-1zM39 5h1v1h-1zM43 5h1v1h-1zM47 5h1v1h-1zM55 5h2v1h-2zM59 5h1v1h-1zM61 5h1v1h-1zM65 5h1v1h-1zM69 5h1v1h-1zM73 5h1v1h-1zM77 5h1v1h-1zM1 6h4v1h-4zM7 6h1v1h-1zM9 6h1v1h-1zM16 6h1v1h-1zM22 6h1v1h-1zM31 6h1v1h-1zM35 6h1v1h-1zM39 6h1v1h-1zM43 6h1v1h-1zM45 6h1v1h-1zM47 6h1v1h-1zM55 6h1v1h-1zM57 6h1v1h-1zM59 6h1v1h-1zM61 6h1v1h-1zM65 6h1v1h-1zM73 6h1v1h-1zM75 6h1v1h-1zM77 6h1v1h-1zM2 7h1v1h-1zM7 7h1v1h-1zM9 7h1v1h-1zM16 7h1v1h-1zM22 7h1v1h-1zM31 7h1v1h-1zM35 7h1v1h-1zM39 7h1v1h-1zM43 7h1v1h-1zM47 7h1v1h-1zM55 7h1v1h-1zM57 7h1v1h-1zM59 7h1v1h-1zM61 7h1v1h-1zM65 7h1v1h-1zM73 7h1v1h-1zM77 7h1v1h-1zM2 8h1v1h-1zM6 8h1v1h-1zM9 8h1v1h-1zM15 8h1v1h-1zM22 8h1v1h-1zM31 8h1v1h-1zM35 8h1v1h-1zM39 8h1v1h-1zM43 8h1v1h-1zM47 8h1v1h-1zM55 8h1v1h-1zM58 8h2v1h-2zM61 8h1v1h-1zM65 8h1v1h-1zM73 8h1v1h-1zM77 8h1v1h-1zM2 9h1v1h-1zM4 9h1v1h-1zM6 9h1v1h-1zM9 9h1v1h-1zM15 9h1v1h-1zM21 9h1v1h-1zM31 9h1v1h-1zM34 9h2v1h-2zM39 9h1v1h-1zM43 9h1v1h-1zM47 9h1v1h-1zM55 9h1v1h-1zM58 9h2v1h-2zM61 9h1v1h-1zM65 9h1v1h-1zM69 9h1v1h-1zM73 9h1v1h-1zM77 9h1v1h-1zM2 10h2v1h-2zM6 10h1v1h-1zM9 10h1v1h-1zM11 10h1v1h-1zM14 10h1v1h-1zM21 10h1v1h-1zM31 10h4v1h-4zM37 10h6v1h-6zM44 10h3v1h-3zM55 10h1v1h-1zM59 10h1v1h-1zM62 10h3v1h-3zM69 10h1v1h-1zM74 10h3v1h-3zM2 11h1v1h-1zM5 11h1v1h-1zM9 11h2v1h-2zM13 11h1v1h-1zM19 11h3v1h-3z" fill="#000"/></svg>
<div class="a" style="left:61px;top:476px;width:14px;height:1px;border-top:1px dotted #8a9a8a"></div>
<div class="a" style="left:57px;top:472px;width:9px;height:9px;border:1px solid #a0a0a0;background:#f4f4ee"></div><div class="a" style="left:59px;top:476px;width:5px;height:1px;background:#000"></div>
<div class="a" style="left:61px;top:474px;width:1px;height:5px;background:#000"></div>
<svg class="ic" style="left:75.0px;top:468.0px;width:16px;height:16px" viewBox="0 0 16 16" shape-rendering="crispEdges"><path d="M2 1V15H15Z" fill="#0000e0"/><circle cx="6.5" cy="11" r="1.8" fill="#fff"/></svg>
<svg class="a" style="left:97px;top:470px" width="52" height="16" viewBox="0 0 52 16" shape-rendering="crispEdges"><path d="M15 0h1v1h-1zM3 1h6v1h-6zM15 1h9v1h-9zM26 1h8v1h-8zM37 1h10v1h-10zM3 2h1v1h-1zM8 2h1v1h-1zM14 2h1v1h-1zM22 2h1v1h-1zM38 2h8v1h-8zM3 3h1v1h-1zM8 3h1v1h-1zM14 3h1v1h-1zM22 3h1v1h-1zM41 3h1v1h-1zM3 4h1v1h-1zM8 4h1v1h-1zM13 4h2v1h-2zM16 4h4v1h-4zM22 4h1v1h-1zM37 4h10v1h-10zM3 5h1v1h-1zM8 5h1v1h-1zM12 5h1v1h-1zM14 5h1v1h-1zM16 5h1v1h-1zM19 5h1v1h-1zM22 5h1v1h-1zM25 5h10v1h-10zM40 5h1v1h-1zM44 5h1v1h-1zM3 6h1v1h-1zM8 6h1v1h-1zM14 6h1v1h-1zM16 6h1v1h-1zM19 6h1v1h-1zM22 6h1v1h-1zM28 6h1v1h-1zM31 6h1v1h-1zM38 6h6v1h-6zM3 7h1v1h-1zM8 7h1v1h-1zM14 7h1v1h-1zM16 7h1v1h-1zM19 7h1v1h-1zM22 7h1v1h-1zM28 7h1v1h-1zM31 7h1v1h-1zM40 7h1v1h-1zM44 7h2v1h-2zM3 8h1v1h-1zM8 8h1v1h-1zM14 8h1v1h-1zM16 8h4v1h-4zM22 8h1v1h-1zM27 8h1v1h-1zM31 8h1v1h-1zM37 8h8v1h-8zM46 8h1v1h-1zM2 9h1v1h-1zM8 9h1v1h-1zM11 9h1v1h-1zM14 9h1v1h-1zM16 9h1v1h-1zM22 9h1v1h-1zM27 9h1v1h-1zM31 9h1v1h-1zM34 9h1v1h-1zM39 9h1v1h-1zM42 9h1v1h-1zM44 9h1v1h-1zM2 10h1v1h-1zM8 10h1v1h-1zM10 10h1v1h-1zM14 10h1v1h-1zM22 10h1v1h-1zM26 10h1v1h-1zM31 10h1v1h-1zM34 10h1v1h-1zM38 10h1v1h-1zM42 10h1v1h-1zM45 10h1v1h-1zM1 11h1v1h-1zM8 11h3v1h-3zM14 11h1v1h-1zM20 11h2v1h-2zM25 11h1v1h-1zM31 11h4v1h-4zM37 11h1v1h-1zM40 11h2v1h-2zM46 11h1v1h-1z" fill="#000"/></svg>
<div class="a" style="left:6px;top:643px;width:175px;height:17px;background:#f5f4ea"></div>
<div class="a" style="left:8px;top:643px;width:16px;height:16px;border:1px solid #b4c8f6;border-radius:2px;background:linear-gradient(#dbe6fd,#b7cbf6)"></div>
<div class="a" style="left:163px;top:643px;width:16px;height:16px;border:1px solid #b4c8f6;border-radius:2px;background:linear-gradient(#dbe6fd,#b7cbf6)"></div>
<div class="a" style="left:12px;top:647px;width:0;height:0;border-top:4px solid transparent;border-bottom:4px solid transparent;border-right:5px solid #4d6185"></div>
<div class="a" style="left:169px;top:647px;width:0;height:0;border-top:4px solid transparent;border-bottom:4px solid transparent;border-left:5px solid #4d6185"></div>
<div class="a" style="left:25px;top:643px;width:92px;height:16px;border:1px solid #b4c8f6;border-radius:2px;background:linear-gradient(#cfdcfb,#b8cbf6)"></div>
<div class="a" style="left:67px;top:647px;width:7px;height:7px;background:repeating-linear-gradient(90deg,#8ea7db 0 1px,transparent 1px 2px)"></div>
<div class="a" style="left:5px;top:661px;width:86px;height:27px;background:#ECE9D8;border-left:1px solid #fff;border-bottom:1px solid #8c8a80"></div>
<div class="a" style="left:11px;top:667px;width:20px;height:20px;background:#c0c0c0"></div>
<svg class="ic" style="left:13.0px;top:669.0px;width:16px;height:16px" viewBox="0 0 16 16" shape-rendering="crispEdges"><path d="M1.5 6.5L4.5 3.5H8.5L9.5 4.5V8.5L11 7H15.5V10L12 13.5H1.5Z" fill="#c8c8c8" stroke="#000"/><path d="M4.5 6.5L8 3.5V7.5L5.5 10H12L15 7H11L8.5 9.5H5.5Z" fill="#00e8f0" stroke="#000" stroke-width="0.8"/><path d="M1.5 6.5H4.5V10H12V13.5M12 10L15.5 7" stroke="#000" fill="none"/></svg>
<svg class="a" style="left:36px;top:670px" width="52" height="16" viewBox="0 0 52 16" shape-rendering="crispEdges"><path d="M2 0h1v1h-1zM25 0h10v1h-10zM2 1h1v1h-1zM13 1h10v1h-10zM25 1h1v1h-1zM27 1h1v1h-1zM30 1h1v1h-1zM33 1h1v1h-1zM37 1h3v1h-3zM41 1h6v1h-6zM1 2h5v1h-5zM7 2h4v1h-4zM17 2h1v1h-1zM29 2h1v1h-1zM38 2h1v1h-1zM41 2h1v1h-1zM43 2h1v1h-1zM46 2h1v1h-1zM2 3h1v1h-1zM5 3h1v1h-1zM7 3h1v1h-1zM10 3h1v1h-1zM17 3h1v1h-1zM25 3h10v1h-10zM38 3h1v1h-1zM41 3h6v1h-6zM2 4h1v1h-1zM5 4h1v1h-1zM7 4h1v1h-1zM10 4h1v1h-1zM17 4h1v1h-1zM25 4h1v1h-1zM27 4h6v1h-6zM34 4h1v1h-1zM38 4h1v1h-1zM41 4h1v1h-1zM43 4h1v1h-1zM46 4h1v1h-1zM2 5h1v1h-1zM5 5h1v1h-1zM7 5h1v1h-1zM10 5h1v1h-1zM17 5h1v1h-1zM26 5h1v1h-1zM32 5h1v1h-1zM37 5h3v1h-3zM41 5h1v1h-1zM43 5h1v1h-1zM46 5h1v1h-1zM2 6h1v1h-1zM5 6h1v1h-1zM7 6h1v1h-1zM10 6h1v1h-1zM17 6h1v1h-1zM27 6h6v1h-6zM38 6h1v1h-1zM41 6h6v1h-6zM2 7h1v1h-1zM5 7h1v1h-1zM7 7h1v1h-1zM10 7h1v1h-1zM17 7h1v1h-1zM26 7h1v1h-1zM38 7h1v1h-1zM43 7h1v1h-1zM2 8h1v1h-1zM5 8h1v1h-1zM7 8h1v1h-1zM10 8h1v1h-1zM17 8h1v1h-1zM27 8h7v1h-7zM38 8h1v1h-1zM41 8h6v1h-6zM1 9h1v1h-1zM5 9h1v1h-1zM7 9h1v1h-1zM10 9h1v1h-1zM17 9h1v1h-1zM26 9h1v1h-1zM33 9h1v1h-1zM37 9h3v1h-3zM43 9h1v1h-1zM1 10h1v1h-1zM5 10h1v1h-1zM7 10h4v1h-4zM13 10h10v1h-10zM27 10h7v1h-7zM37 10h1v1h-1zM43 10h1v1h-1zM0 11h1v1h-1zM3 11h2v1h-2zM7 11h1v1h-1zM10 11h1v1h-1zM40 11h8v1h-8z" fill="#000"/></svg>
<div class="a" style="left:91px;top:663px;width:59px;height:22px;border-left:1px solid #fff;border-bottom:2px solid #8c8a80"></div>
<div class="a" style="left:96px;top:666px;width:19px;height:19px;background:#c0c0c0"></div>
<svg class="ic" style="left:97.0px;top:667.0px;width:16px;height:16px" viewBox="0 0 16 16" shape-rendering="crispEdges"><path d="M2 3Q8 0 14 3V14Q8 17 2 14Z" fill="#00d8d8" stroke="#000"/><ellipse cx="8" cy="3" rx="6" ry="2" fill="#80f0f0" stroke="#000"/><path d="M2 7Q8 9.5 14 7" stroke="#ff0000" stroke-width="1.3" fill="none"/><path d="M2 9.5Q8 12 14 9.5" stroke="#00a000" stroke-width="1.3" fill="none"/><path d="M2 12Q8 14.5 14 12" stroke="#ffd000" stroke-width="1.3" fill="none"/></svg>
<svg class="a" style="left:121px;top:668px" width="16" height="16" viewBox="0 0 16 16" shape-rendering="crispEdges"><path d="M2 0h9v1h-9zM2 1h1v1h-1zM10 1h1v1h-1zM2 2h9v1h-9zM2 3h1v1h-1zM9 3h1v1h-1zM2 4h8v1h-8zM2 5h8v1h-8zM1 6h1v1h-1zM3 6h1v1h-1zM6 6h1v1h-1zM9 6h1v1h-1zM1 7h1v1h-1zM3 7h7v1h-7zM1 8h1v1h-1zM3 8h8v1h-8zM1 9h1v1h-1zM3 9h1v1h-1zM6 9h1v1h-1zM8 9h1v1h-1zM10 9h1v1h-1zM1 10h1v1h-1zM3 10h6v1h-6zM10 10h1v1h-1zM0 11h1v1h-1zM3 11h1v1h-1zM9 11h2v1h-2z" fill="#000"/></svg>
<div class="a" style="left:151px;top:666px;width:16px;height:16px;border:1px solid;border-color:#fff #8c8a80 #8c8a80 #fff;background:#ECE9D8"></div>
<div class="a" style="left:167px;top:666px;width:16px;height:16px;border:1px solid;border-color:#fff #8c8a80 #8c8a80 #fff;background:#ECE9D8"></div>
<div class="a" style="left:156px;top:670px;width:0;height:0;border-top:4px solid transparent;border-bottom:4px solid transparent;border-right:5px solid #000"></div>
<div class="a" style="left:173px;top:670px;width:0;height:0;border-top:4px solid transparent;border-bottom:4px solid transparent;border-left:5px solid #000"></div>
<div class="a" style="left:185px;top:139px;width:1px;height:551px;background:#fff"></div>
<div class="a" style="left:189px;top:139px;width:776px;height:551px;border:1px solid;border-color:#716f64 #fff #fff #716f64"></div>
<svg width="774" height="550" viewBox="190 139 774 550" style="position:absolute;left:190px;top:139px">
<defs><linearGradient id="rf" x1="0" y1="0" x2="1" y2="0"><stop offset="0" stop-color="#6e6e6e"/><stop offset="0.5" stop-color="#858585"/><stop offset="1" stop-color="#707070"/></linearGradient><linearGradient id="wall" gradientUnits="userSpaceOnUse" x1="385" y1="0" x2="775" y2="0"><stop offset="0" stop-color="#8c8c8c"/><stop offset="0.44" stop-color="#5c5c5c"/><stop offset="0.48" stop-color="#6e6e6e"/><stop offset="0.55" stop-color="#424242"/><stop offset="0.92" stop-color="#3c3c3c"/><stop offset="1" stop-color="#7a7a7a"/></linearGradient><linearGradient id="slw" gradientUnits="userSpaceOnUse" x1="383" y1="0" x2="535" y2="0"><stop offset="0" stop-color="#a0a0a0"/><stop offset="0.5" stop-color="#666"/><stop offset="1" stop-color="#2a2a2a"/></linearGradient><linearGradient id="hl" x1="0" y1="0" x2="1" y2="0"><stop offset="0" stop-color="#5a5a5a"/><stop offset="0.6" stop-color="#3a3a3a"/><stop offset="1" stop-color="#555"/></linearGradient></defs>
<rect x="190" y="139" width="774" height="550" fill="#000"/>
<polygon points="264.7,492 729.7,626.4 730.2,649.8 265.9,515.7" fill="#3d3d3d"/>
<polygon points="729.7,626.4 892.2,381 893.8,404.3 730.2,649.8" fill="url(#rf)"/>
<polygon points="427.5,247 892.2,381 729.7,626.4 264.7,492" fill="#b4b4b4"/>
<path d="M770.8,405.4 L770.9,405.2 L771.2,404.7 L771.3,404.4 L771.6,403.9 L771.6,403.6 L771.8,403.1 L771.8,402.8 L771.9,402.2 L771.9,402.0 L771.9,401.4 L771.8,401.2 L771.7,400.6 L771.7,400.4 L771.5,399.8 L771.4,399.6 L771.1,399.0 L771.0,398.8 L770.6,398.3 L770.4,398.1 L770.0,397.6 L769.8,397.4 L769.3,396.9 L769.1,396.7 L768.5,396.3 L768.2,396.1 L767.6,395.7 L767.3,395.5 L766.6,395.2 L766.3,395.0 L765.6,394.7 L765.3,394.6 L764.4,394.3 L764.2,394.3 L575.9,340.0 L575.8,339.9 L574.9,339.7 L574.5,339.6 L573.7,339.5 L573.4,339.4 L572.5,339.3 L572.2,339.3 L571.3,339.3 L571.0,339.3 L570.1,339.3 L569.8,339.3 L568.9,339.3 L568.6,339.4 L567.7,339.5 L567.4,339.6 L566.6,339.7 L566.3,339.8 L565.5,340.0 L565.1,340.1 L564.4,340.4 L564.1,340.5 L563.3,340.9 L563.2,340.9 L424.7,408.2 L424.5,408.3 L423.8,408.7 L423.5,408.9 L422.8,409.4 L422.5,409.6 L422.0,410.0 L421.7,410.2 L421.2,410.8 L421.0,411.0 L420.6,411.6 L420.5,411.7 L383.3,467.7 L383.2,467.8 L382.9,468.4 L382.7,468.7 L382.5,469.2 L382.4,469.5 L382.3,470.0 L382.2,470.3 L382.2,470.9 L382.2,471.1 L382.2,471.7 L382.2,471.9 L382.3,472.5 L382.4,472.7 L382.6,473.3 L382.7,473.5 L383.0,474.1 L383.1,474.3 L383.5,474.8 L383.6,475.0 L384.1,475.5 L384.3,475.7 L384.8,476.2 L385.0,476.4 L385.6,476.8 L385.8,477.0 L386.5,477.4 L386.8,477.6 L387.4,477.9 L387.7,478.1 L388.5,478.4 L388.8,478.5 L389.7,478.8 L389.8,478.8 L656.9,555.8 L657.0,555.9 L658.0,556.1 L658.3,556.2 L659.1,556.3 L659.5,556.4 L660.4,556.5 L660.7,556.5 L661.6,556.5 L662.0,556.5 L662.9,556.5 L663.2,556.5 L664.1,556.4 L664.5,556.4 L665.3,556.3 L665.7,556.2 L666.5,556.0 L666.8,555.9 L667.6,555.7 L668.0,555.6 L668.7,555.3 L669.0,555.2 L669.7,554.8 L670.0,554.7 L670.7,554.3 L671.0,554.1 L671.6,553.7 L671.8,553.5 L672.3,553.1 L672.6,552.9 L673.0,552.4 L673.2,552.2 L673.6,551.6 L673.7,551.5 L689.7,527.3 L689.8,527.2 L690.2,526.6 L690.3,526.4 L690.5,525.8 L690.6,525.6 L690.7,525.0 L690.8,524.7 L690.8,524.1 L690.8,523.9 L690.8,523.3 L690.8,523.0 L690.6,522.5 L690.6,522.2 L690.4,521.6 L690.2,521.4 L689.9,520.8 L689.8,520.6 L689.4,520.0 L689.3,519.9 L687.9,518.3 L687.9,518.2 L687.8,518.1 L687.7,518.0 L686.1,515.7 L686.0,515.6 L685.9,515.5 L685.8,515.4 L684.4,513.0 L684.3,512.9 L684.2,512.9 L684.2,512.7 L682.9,510.4 L682.8,510.2 L682.8,510.2 L682.7,510.0 L681.6,507.6 L681.5,507.5 L681.5,507.4 L681.4,507.3 L680.5,504.8 L680.4,504.7 L680.4,504.6 L680.4,504.5 L679.6,502.0 L679.6,501.9 L679.5,501.8 L679.5,501.7 L678.9,499.2 L678.9,499.1 L678.9,499.0 L678.9,498.9 L678.5,496.3 L678.4,496.2 L678.4,496.1 L678.4,496.0 L678.2,493.5 L678.2,493.3 L678.2,493.3 L678.2,493.1 L678.2,490.6 L678.2,490.5 L678.2,490.4 L678.2,490.3 L678.4,487.7 L678.4,487.6 L678.4,487.5 L678.4,487.4 L678.8,484.9 L678.8,484.7 L678.8,484.7 L678.8,484.5 L679.4,482.0 L679.4,481.9 L679.4,481.8 L679.5,481.7 L680.2,479.2 L680.2,479.1 L680.3,479.0 L680.3,478.9 L681.2,476.4 L681.3,476.3 L681.3,476.2 L681.3,476.1 L682.5,473.7 L682.5,473.5 L682.5,473.5 L682.6,473.3 L683.9,470.9 L684.0,470.8 L684.0,470.8 L684.1,470.6 L685.5,468.3 L685.6,468.2 L685.6,468.1 L685.7,468.0 L687.4,465.7 L687.4,465.6 L687.5,465.5 L687.6,465.4 L689.4,463.1 L689.5,463.0 L689.5,463.0 L689.6,462.9 L691.6,460.7 L691.7,460.6 L691.8,460.5 L691.9,460.4 L694.0,458.3 L694.1,458.2 L694.2,458.1 L694.3,458.0 L696.6,455.9 L696.7,455.8 L696.8,455.8 L696.9,455.7 L699.3,453.7 L699.4,453.6 L699.5,453.6 L699.6,453.5 L702.2,451.6 L702.3,451.5 L702.4,451.4 L702.5,451.3 L705.3,449.5 L705.4,449.4 L705.5,449.4 L705.6,449.3 L708.5,447.6 L708.6,447.5 L708.7,447.4 L708.8,447.4 L711.8,445.7 L712.0,445.7 L712.1,445.6 L712.2,445.5 L715.3,444.0 L715.5,443.9 L715.6,443.9 L715.7,443.8 L718.9,442.4 L719.1,442.3 L719.2,442.3 L719.3,442.2 L722.6,440.9 L722.8,440.8 L722.9,440.8 L723.1,440.7 L726.5,439.5 L726.6,439.5 L726.7,439.4 L726.9,439.4 L730.4,438.3 L730.5,438.2 L730.7,438.2 L730.8,438.2 L734.4,437.2 L734.6,437.1 L734.7,437.1 L734.9,437.0 L738.5,436.2 L738.7,436.1 L738.8,436.1 L739.0,436.1 L742.6,435.3 L742.8,435.3 L742.9,435.3 L743.1,435.2 L745.8,434.8 L746.0,434.7 L747.0,434.6 L747.3,434.5 L748.2,434.2 L748.5,434.1 L749.3,433.8 L749.6,433.7 L750.4,433.4 L750.7,433.2 L751.3,432.8 L751.6,432.7 L752.2,432.2 L752.5,432.0 L753.0,431.6 L753.3,431.4 L753.7,430.9 L753.9,430.7 L754.4,430.1 L754.5,430.0 L770.8,405.4Z" fill="url(#wall)"/>
<path d="M575.9,363.0 L575.8,362.9 L574.9,362.7 L574.5,362.6 L573.7,362.5 L573.4,362.4 L572.5,362.3 L572.2,362.3 L571.3,362.3 L571.0,362.3 L570.1,362.3 L569.8,362.3 L568.9,362.3 L568.6,362.4 L567.7,362.5 L567.4,362.6 L566.6,362.7 L566.3,362.8 L565.5,363.0 L565.1,363.1 L564.4,363.4 L564.1,363.5 L563.3,363.9 L563.2,363.9 L424.7,431.2 L424.5,431.3 L423.8,431.7 L423.5,431.9 L422.8,432.4 L422.5,432.6 L422.0,433.0 L421.7,433.2 L421.2,433.8 L421.0,434.0 L420.6,434.6 L420.5,434.7 L391.0,479.1 L656.9,555.8 L657.0,555.9 L658.0,556.1 L658.3,556.2 L659.1,556.3 L659.5,556.4 L660.4,556.5 L660.7,556.5 L661.6,556.5 L662.0,556.5 L662.9,556.5 L663.2,556.5 L664.1,556.4 L664.5,556.4 L665.3,556.3 L665.7,556.2 L666.5,556.0 L666.8,555.9 L667.6,555.7 L668.0,555.6 L668.7,555.3 L669.0,555.2 L669.7,554.8 L670.0,554.7 L670.7,554.3 L671.0,554.1 L671.6,553.7 L671.8,553.5 L672.3,553.1 L672.6,552.9 L673.0,552.4 L673.2,552.2 L673.6,551.6 L673.7,551.5 L684.2,535.7 L682.9,533.4 L682.8,533.2 L682.8,533.2 L682.7,533.0 L681.6,530.6 L681.5,530.5 L681.5,530.4 L681.4,530.3 L680.5,527.8 L680.4,527.7 L680.4,527.6 L680.4,527.5 L679.6,525.0 L679.6,524.9 L679.5,524.8 L679.5,524.7 L678.9,522.2 L678.9,522.1 L678.9,522.0 L678.9,521.9 L678.5,519.3 L678.4,519.2 L678.4,519.1 L678.4,519.0 L678.2,516.5 L678.2,516.3 L678.2,516.3 L678.2,516.1 L678.2,513.6 L678.2,513.5 L678.2,513.4 L678.2,513.3 L678.4,510.7 L678.4,510.6 L678.4,510.5 L678.4,510.4 L678.8,507.9 L678.8,507.7 L678.8,507.7 L678.8,507.5 L679.4,505.0 L679.4,504.9 L679.4,504.8 L679.5,504.7 L679.9,503.1 L679.6,502.0 L679.6,501.9 L679.5,501.8 L679.5,501.7 L678.9,499.2 L678.9,499.1 L678.9,499.0 L678.9,498.9 L678.5,496.3 L678.4,496.2 L678.4,496.1 L678.4,496.0 L678.2,493.5 L678.2,493.3 L678.2,493.3 L678.2,493.1 L678.2,490.6 L678.2,490.5 L678.2,490.4 L678.2,490.3 L678.4,487.7 L678.4,487.6 L678.4,487.5 L678.4,487.4 L678.8,484.9 L678.8,484.7 L678.8,484.7 L678.8,484.5 L679.4,482.0 L679.4,481.9 L679.4,481.8 L679.5,481.7 L680.2,479.2 L680.2,479.1 L680.3,479.0 L680.3,478.9 L681.2,476.4 L681.3,476.3 L681.3,476.2 L681.3,476.1 L682.5,473.7 L682.5,473.5 L682.5,473.5 L682.6,473.3 L683.9,470.9 L684.0,470.8 L684.0,470.8 L684.1,470.6 L685.5,468.3 L685.6,468.2 L685.6,468.1 L685.7,468.0 L687.4,465.7 L687.4,465.6 L687.5,465.5 L687.6,465.4 L689.4,463.1 L689.5,463.0 L689.5,463.0 L689.6,462.9 L691.6,460.7 L691.7,460.6 L691.8,460.5 L691.9,460.4 L694.0,458.3 L694.1,458.2 L694.2,458.1 L694.3,458.0 L696.6,455.9 L696.7,455.8 L696.8,455.8 L696.9,455.7 L699.3,453.7 L699.4,453.6 L699.5,453.6 L699.6,453.5 L702.2,451.6 L702.3,451.5 L702.4,451.4 L702.5,451.3 L705.3,449.5 L705.4,449.4 L705.5,449.4 L705.6,449.3 L708.5,447.6 L708.6,447.5 L708.7,447.4 L708.8,447.4 L711.8,445.7 L712.0,445.7 L712.1,445.6 L712.2,445.5 L715.3,444.0 L715.5,443.9 L715.6,443.9 L715.7,443.8 L718.9,442.4 L719.1,442.3 L719.2,442.3 L719.3,442.2 L722.6,440.9 L722.8,440.8 L722.9,440.8 L723.1,440.7 L726.5,439.5 L726.6,439.5 L726.7,439.4 L726.9,439.4 L730.4,438.3 L730.5,438.2 L730.7,438.2 L730.8,438.2 L734.4,437.2 L734.6,437.1 L734.7,437.1 L734.9,437.0 L738.5,436.2 L738.7,436.1 L738.8,436.1 L739.0,436.1 L742.6,435.3 L742.8,435.3 L742.9,435.3 L743.1,435.2 L745.8,434.8 L746.0,434.7 L747.0,434.6 L747.3,434.5 L748.2,434.2 L748.5,434.1 L749.3,433.8 L749.6,433.7 L750.4,433.4 L750.7,433.2 L751.3,432.8 L751.6,432.7 L752.2,432.2 L752.5,432.0 L753.0,431.6 L753.3,431.4 L753.7,430.9 L753.9,430.7 L754.4,430.1 L754.5,430.0 L763.1,417.0 L575.9,363.0Z" fill="#000"/>
<path d="M519.2,322.0 L520.5,321.5 L521.7,321.0 L522.9,320.4 L524.1,319.7 L525.2,319.1 L526.3,318.4 L527.3,317.7 L528.3,316.9 L529.2,316.1 L530.1,315.3 L530.8,314.4 L531.6,313.6 L532.2,312.7 L532.8,311.8 L533.3,310.8 L533.8,309.9 L534.2,308.9 L534.5,308.0 L534.7,307.0 L534.9,306.0 L535.0,305.0 L535.0,304.0 L534.9,303.0 L534.8,302.0 L534.6,301.0 L534.3,300.1 L534.0,299.1 L533.5,298.1 L533.0,297.2 L532.5,296.3 L531.9,295.4 L531.2,294.5 L530.4,293.7 L529.6,292.8 L528.7,292.0 L527.7,291.2 L526.7,290.5 L525.7,289.8 L524.6,289.1 L523.4,288.5 L522.2,287.9 L521.0,287.3 L519.7,286.8 L518.4,286.3 L517.0,285.9 L515.6,285.5 L514.2,285.2 L512.8,284.9 L511.3,284.6 L509.9,284.4 L508.4,284.3 L506.9,284.1 L505.4,284.1 L503.9,284.1 L502.4,284.1 L500.9,284.2 L499.4,284.3 L497.9,284.5 L496.4,284.8 L495.0,285.0 L493.6,285.4 L492.2,285.7 L490.8,286.1 L489.4,286.6 L399.7,319.3 L398.4,319.8 L397.2,320.3 L396.0,320.9 L394.8,321.6 L393.7,322.2 L392.6,322.9 L391.6,323.6 L390.6,324.4 L389.7,325.2 L388.8,326.0 L388.1,326.9 L387.3,327.7 L386.7,328.6 L386.1,329.5 L385.6,330.5 L385.1,331.4 L384.7,332.4 L384.4,333.3 L384.2,334.3 L384.0,335.3 L383.9,336.3 L383.9,337.3 L384.0,338.3 L384.1,339.3 L384.3,340.3 L384.6,341.2 L384.9,342.2 L385.4,343.2 L385.9,344.1 L386.4,345.0 L387.0,345.9 L387.7,346.8 L388.5,347.6 L389.3,348.5 L390.2,349.3 L391.2,350.1 L392.2,350.8 L393.2,351.5 L394.3,352.2 L395.5,352.8 L396.7,353.4 L397.9,354.0 L399.2,354.5 L400.5,355.0 L401.9,355.4 L403.3,355.8 L404.7,356.1 L406.1,356.4 L407.6,356.7 L409.0,356.9 L410.5,357.0 L412.0,357.2 L413.5,357.2 L415.0,357.2 L416.5,357.2 L418.0,357.1 L419.5,357.0 L421.0,356.8 L422.5,356.5 L423.9,356.3 L425.3,355.9 L426.7,355.6 L428.1,355.2 L429.5,354.7 L519.2,322.0Z" fill="url(#slw)"/>
<path d="M528.7,315.0 L527.7,314.2 L526.7,313.5 L525.7,312.8 L524.6,312.1 L523.4,311.5 L522.2,310.9 L521.0,310.3 L519.7,309.8 L518.4,309.3 L517.0,308.9 L515.6,308.5 L514.2,308.2 L512.8,307.9 L511.3,307.6 L509.9,307.4 L508.4,307.3 L506.9,307.1 L505.4,307.1 L503.9,307.1 L502.4,307.1 L500.9,307.2 L499.4,307.3 L497.9,307.5 L496.4,307.8 L495.0,308.0 L493.6,308.4 L492.2,308.7 L490.8,309.1 L489.4,309.6 L399.7,342.3 L398.4,342.8 L397.2,343.3 L396.0,343.9 L394.8,344.6 L393.7,345.2 L392.6,345.9 L391.6,346.6 L390.6,347.4 L389.7,348.2 L389.4,348.5 L390.2,349.3 L391.2,350.1 L392.2,350.8 L393.2,351.5 L394.3,352.2 L395.5,352.8 L396.7,353.4 L397.9,354.0 L399.2,354.5 L400.5,355.0 L401.9,355.4 L403.3,355.8 L404.7,356.1 L406.1,356.4 L407.6,356.7 L409.0,356.9 L410.5,357.0 L412.0,357.2 L413.5,357.2 L415.0,357.2 L416.5,357.2 L418.0,357.1 L419.5,357.0 L421.0,356.8 L422.5,356.5 L423.9,356.3 L425.3,355.9 L426.7,355.6 L428.1,355.2 L429.5,354.7 L519.2,322.0 L520.5,321.5 L521.7,321.0 L522.9,320.4 L524.1,319.7 L525.2,319.1 L526.3,318.4 L527.3,317.7 L528.3,316.9 L529.2,316.1 L529.5,315.8 L528.7,315.0Z" fill="#000"/>
<path d="M784.1,496.5 L784.5,496.0 L784.8,495.4 L785.1,494.8 L785.3,494.2 L785.5,493.6 L785.6,493.0 L785.7,492.4 L785.7,491.8 L785.7,491.2 L785.7,490.6 L785.6,490.0 L785.4,489.4 L785.2,488.8 L785.0,488.2 L784.7,487.6 L784.4,487.1 L784.1,486.5 L783.7,486.0 L783.2,485.4 L782.8,484.9 L782.2,484.4 L781.7,483.9 L781.1,483.5 L780.5,483.0 L779.8,482.6 L779.1,482.2 L778.4,481.8 L777.7,481.4 L776.9,481.1 L776.1,480.8 L775.3,480.5 L774.5,480.3 L773.6,480.0 L772.8,479.8 L771.9,479.6 L771.0,479.5 L770.1,479.4 L769.2,479.3 L768.2,479.2 L767.3,479.2 L766.4,479.2 L765.5,479.3 L764.6,479.3 L763.7,479.4 L762.7,479.5 L761.9,479.7 L761.0,479.9 L760.1,480.1 L759.3,480.3 L758.4,480.6 L757.6,480.9 L756.8,481.2 L756.1,481.5 L755.3,481.9 L754.6,482.3 L753.9,482.7 L753.3,483.1 L752.7,483.5 L752.1,484.0 L751.5,484.5 L751.0,485.0 L750.6,485.5 L750.1,486.1 L749.7,486.6 L749.4,487.2 L749.1,487.8 L748.8,488.3 L748.6,488.9 L748.4,489.5 L748.3,490.1 L748.2,490.7 L748.2,491.3 L748.2,491.9 L748.2,492.6 L748.3,493.2 L748.5,493.8 L748.6,494.4 L748.9,494.9 L749.1,495.5 L749.5,496.1 L749.8,496.6 L750.2,497.2 L750.7,497.7 L751.1,498.3 L751.6,498.8 L752.2,499.2 L752.8,499.7 L753.4,500.2 L754.1,500.6 L754.7,501.0 L755.5,501.4 L756.2,501.7 L757.0,502.1 L757.8,502.4 L758.6,502.7 L759.4,502.9 L760.3,503.1 L761.1,503.3 L762.0,503.5 L762.9,503.7 L763.8,503.8 L764.7,503.9 L765.6,503.9 L766.6,503.9 L767.5,503.9 L768.4,503.9 L769.3,503.9 L770.2,503.8 L771.1,503.6 L772.0,503.5 L772.9,503.3 L773.8,503.1 L774.6,502.9 L775.5,502.6 L776.3,502.3 L777.1,502.0 L777.8,501.7 L778.6,501.3 L779.3,500.9 L779.9,500.5 L780.6,500.1 L781.2,499.6 L781.8,499.1 L782.3,498.7 L782.8,498.2 L783.3,497.6 L783.7,497.1 L784.1,496.5Z" fill="url(#hl)"/>
<rect x="761" y="502" width="11" height="3" fill="#000"/>
<g stroke="#0000ff" stroke-width="1" fill="none">
<line x1="427.5" y1="247" x2="892.2" y2="381"/>
<line x1="892.2" y1="381" x2="729.7" y2="626.4"/>
<line x1="729.7" y1="626.4" x2="264.7" y2="492"/>
<line x1="264.7" y1="492" x2="427.5" y2="247"/>
<line x1="428.5" y1="270.4" x2="893.8" y2="404.3"/>
<line x1="893.8" y1="404.3" x2="730.2" y2="649.8"/>
<line x1="730.2" y1="649.8" x2="265.9" y2="515.7"/>
<line x1="265.9" y1="515.7" x2="428.5" y2="270.4"/>
<line x1="427.5" y1="247" x2="428.5" y2="270.4"/>
<line x1="892.2" y1="381" x2="893.8" y2="404.3"/>
<line x1="729.7" y1="626.4" x2="730.2" y2="649.8"/>
<line x1="264.7" y1="492" x2="265.9" y2="515.7"/>
</g>
<g stroke="#00ff00" stroke-width="1" fill="none">
<path d="M394.9,483.1 L395.1,483.2 L661.8,560.1 L662.0,560.2 L662.2,560.0 L678.0,536.1 L678.1,535.9 L678.0,535.8 L676.7,534.2 L676.6,534.0 L676.5,533.8 L676.3,533.6 L674.6,531.3 L674.4,531.1 L674.3,530.9 L674.2,530.7 L672.6,528.2 L672.5,528.0 L672.4,527.9 L672.3,527.6 L670.9,525.2 L670.8,524.9 L670.7,524.8 L670.6,524.6 L669.4,522.0 L669.3,521.8 L669.2,521.6 L669.2,521.4 L668.2,518.9 L668.1,518.6 L668.0,518.5 L667.9,518.2 L667.1,515.6 L667.1,515.4 L667.0,515.2 L667.0,515.0 L666.4,512.4 L666.3,512.2 L666.3,512.0 L666.2,511.8 L665.8,509.1 L665.8,508.9 L665.8,508.7 L665.8,508.5 L665.5,505.9 L665.5,505.6 L665.5,505.5 L665.5,505.2 L665.5,502.6 L665.5,502.4 L665.5,502.2 L665.5,501.9 L665.7,499.3 L665.7,499.1 L665.7,498.9 L665.8,498.7 L666.1,496.0 L666.2,495.8 L666.2,495.6 L666.3,495.4 L666.8,492.8 L666.9,492.6 L666.9,492.4 L667.0,492.2 L667.8,489.6 L667.8,489.3 L667.9,489.2 L668.0,488.9 L668.9,486.4 L669.0,486.2 L669.1,486.0 L669.2,485.8 L670.3,483.2 L670.4,483.0 L670.5,482.8 L670.6,482.6 L672.0,480.1 L672.1,479.9 L672.2,479.7 L672.3,479.5 L673.8,477.1 L674.0,476.9 L674.1,476.7 L674.2,476.5 L675.9,474.1 L676.1,473.9 L676.2,473.7 L676.3,473.5 L678.2,471.2 L678.4,471.0 L678.5,470.8 L678.7,470.6 L680.7,468.4 L680.9,468.2 L681.1,468.0 L681.2,467.8 L683.5,465.6 L683.7,465.4 L683.8,465.3 L684.0,465.1 L686.4,463.0 L686.6,462.8 L686.8,462.6 L687.0,462.5 L689.5,460.4 L689.7,460.2 L689.9,460.1 L690.1,459.9 L692.8,458.0 L693.1,457.8 L693.2,457.7 L693.5,457.5 L696.3,455.6 L696.6,455.4 L696.8,455.3 L697.0,455.2 L700.0,453.4 L700.2,453.2 L700.4,453.1 L700.7,453.0 L703.8,451.3 L704.1,451.1 L704.3,451.0 L704.5,450.9 L707.8,449.3 L708.0,449.2 L708.3,449.1 L708.5,448.9 L711.9,447.4 L712.2,447.3 L712.4,447.2 L712.7,447.1 L716.1,445.7 L716.4,445.6 L716.7,445.5 L717.0,445.4 L720.5,444.2 L720.8,444.1 L721.0,444.0 L721.4,443.9 L725.0,442.7 L725.3,442.6 L725.5,442.6 L725.9,442.5 L729.6,441.4 L729.9,441.4 L730.1,441.3 L730.5,441.2 L734.2,440.3 L734.6,440.2 L734.8,440.2 L735.1,440.1 L739.0,439.3 L739.3,439.3 L739.6,439.2 L739.9,439.2 L742.5,438.7 L742.8,438.7 L742.9,438.5 L759.1,414.1 L759.2,414.0 L758.9,413.9 L571.0,359.7 L570.8,359.6 L570.5,359.7 L432.4,426.9 L432.2,427.0 L432.0,427.2 L395.0,483.0 L394.9,483.1Z M394.9,487.6 L395.1,487.7 L661.8,564.6 L662.0,564.7 L662.2,564.5 L678.0,540.6 L678.1,540.4 L678.0,540.3 L676.7,538.7 L676.6,538.5 L676.5,538.3 L676.3,538.1 L674.6,535.8 L674.4,535.6 L674.3,535.4 L674.2,535.2 L672.6,532.7 L672.5,532.5 L672.4,532.4 L672.3,532.1 L670.9,529.7 L670.8,529.4 L670.7,529.3 L670.6,529.1 L669.4,526.5 L669.3,526.3 L669.2,526.1 L669.2,525.9 L668.2,523.4 L668.1,523.1 L668.0,523.0 L667.9,522.7 L667.1,520.1 L667.1,519.9 L667.0,519.7 L667.0,519.5 L666.4,516.9 L666.3,516.7 L666.3,516.5 L666.2,516.3 L665.8,513.6 L665.8,513.4 L665.8,513.2 L665.8,513.0 L665.5,510.4 L665.5,510.1 L665.5,510.0 L665.5,509.7 L665.5,507.1 L665.5,506.9 L665.5,506.7 L665.5,506.4 L665.7,503.8 L665.7,503.6 L665.7,503.4 L665.8,503.2 L666.1,500.5 L666.2,500.3 L666.2,500.1 L666.3,499.9 L666.8,497.3 L666.9,497.1 L666.9,496.9 L667.0,496.7 L667.8,494.1 L667.8,493.8 L667.9,493.7 L668.0,493.4 L668.9,490.9 L669.0,490.7 L669.1,490.5 L669.2,490.3 L670.3,487.7 L670.4,487.5 L670.5,487.3 L670.6,487.1 L672.0,484.6 L672.1,484.4 L672.2,484.2 L672.3,484.0 L673.8,481.6 L674.0,481.4 L674.1,481.2 L674.2,481.0 L675.9,478.6 L676.1,478.4 L676.2,478.2 L676.3,478.0 L678.2,475.7 L678.4,475.5 L678.5,475.3 L678.7,475.1 L680.7,472.9 L680.9,472.7 L681.1,472.5 L681.2,472.3 L683.5,470.1 L683.7,469.9 L683.8,469.8 L684.0,469.6 L686.4,467.5 L686.6,467.3 L686.8,467.1 L687.0,467.0 L689.5,464.9 L689.7,464.7 L689.9,464.6 L690.1,464.4 L692.8,462.5 L693.1,462.3 L693.2,462.2 L693.5,462.0 L696.3,460.1 L696.6,459.9 L696.8,459.8 L697.0,459.7 L700.0,457.9 L700.2,457.7 L700.4,457.6 L700.7,457.5 L703.8,455.8 L704.1,455.6 L704.3,455.5 L704.5,455.4 L707.8,453.8 L708.0,453.7 L708.3,453.6 L708.5,453.4 L711.9,451.9 L712.2,451.8 L712.4,451.7 L712.7,451.6 L716.1,450.2 L716.4,450.1 L716.7,450.0 L717.0,449.9 L720.5,448.7 L720.8,448.6 L721.0,448.5 L721.4,448.4 L725.0,447.2 L725.3,447.1 L725.5,447.1 L725.9,447.0 L729.6,445.9 L729.9,445.9 L730.1,445.8 L730.5,445.7 L734.2,444.8 L734.6,444.7 L734.8,444.7 L735.1,444.6 L739.0,443.8 L739.3,443.8 L739.6,443.7 L739.9,443.7 L742.5,443.2 L742.8,443.2 L742.9,443.0 L759.1,418.6 L759.2,418.5 L758.9,418.4 L571.0,364.2 L570.8,364.1 L570.5,364.2 L432.4,431.4 L432.2,431.5 L432.0,431.7 L395.0,487.5 L394.9,487.6Z M394.9,492.1 L395.1,492.2 L661.8,569.1 L662.0,569.2 L662.2,569.0 L678.0,545.1 L678.1,544.9 L678.0,544.8 L676.7,543.2 L676.6,543.0 L676.5,542.8 L676.3,542.6 L674.6,540.3 L674.4,540.1 L674.3,539.9 L674.2,539.7 L672.6,537.2 L672.5,537.0 L672.4,536.9 L672.3,536.6 L670.9,534.2 L670.8,533.9 L670.7,533.8 L670.6,533.6 L669.4,531.0 L669.3,530.8 L669.2,530.6 L669.2,530.4 L668.2,527.9 L668.1,527.6 L668.0,527.5 L667.9,527.2 L667.1,524.6 L667.1,524.4 L667.0,524.2 L667.0,524.0 L666.4,521.4 L666.3,521.2 L666.3,521.0 L666.2,520.8 L665.8,518.1 L665.8,517.9 L665.8,517.7 L665.8,517.5 L665.5,514.9 L665.5,514.6 L665.5,514.5 L665.5,514.2 L665.5,511.6 L665.5,511.4 L665.5,511.2 L665.5,510.9 L665.7,508.3 L665.7,508.1 L665.7,507.9 L665.8,507.7 L666.1,505.0 L666.2,504.8 L666.2,504.6 L666.3,504.4 L666.8,501.8 L666.9,501.6 L666.9,501.4 L667.0,501.2 L667.8,498.6 L667.8,498.3 L667.9,498.2 L668.0,497.9 L668.9,495.4 L669.0,495.2 L669.1,495.0 L669.2,494.8 L670.3,492.2 L670.4,492.0 L670.5,491.8 L670.6,491.6 L672.0,489.1 L672.1,488.9 L672.2,488.7 L672.3,488.5 L673.8,486.1 L674.0,485.9 L674.1,485.7 L674.2,485.5 L675.9,483.1 L676.1,482.9 L676.2,482.7 L676.3,482.5 L678.2,480.2 L678.4,480.0 L678.5,479.8 L678.7,479.6 L680.7,477.4 L680.9,477.2 L681.1,477.0 L681.2,476.8 L683.5,474.6 L683.7,474.4 L683.8,474.3 L684.0,474.1 L686.4,472.0 L686.6,471.8 L686.8,471.6 L687.0,471.5 L689.5,469.4 L689.7,469.2 L689.9,469.1 L690.1,468.9 L692.8,467.0 L693.1,466.8 L693.2,466.7 L693.5,466.5 L696.3,464.6 L696.6,464.4 L696.8,464.3 L697.0,464.2 L700.0,462.4 L700.2,462.2 L700.4,462.1 L700.7,462.0 L703.8,460.3 L704.1,460.1 L704.3,460.0 L704.5,459.9 L707.8,458.3 L708.0,458.2 L708.3,458.1 L708.5,457.9 L711.9,456.4 L712.2,456.3 L712.4,456.2 L712.7,456.1 L716.1,454.7 L716.4,454.6 L716.7,454.5 L717.0,454.4 L720.5,453.2 L720.8,453.1 L721.0,453.0 L721.4,452.9 L725.0,451.7 L725.3,451.6 L725.5,451.6 L725.9,451.5 L729.6,450.4 L729.9,450.4 L730.1,450.3 L730.5,450.2 L734.2,449.3 L734.6,449.2 L734.8,449.2 L735.1,449.1 L739.0,448.3 L739.3,448.3 L739.6,448.2 L739.9,448.2 L742.5,447.7 L742.8,447.7 L742.9,447.5 L759.1,423.1 L759.2,423.0 L758.9,422.9 L571.0,368.7 L570.8,368.6 L570.5,368.7 L432.4,435.9 L432.2,436.0 L432.0,436.2 L395.0,492.0 L394.9,492.1Z M394.9,496.6 L395.1,496.7 L661.8,573.6 L662.0,573.7 L662.2,573.5 L678.0,549.6 L678.1,549.4 L678.0,549.3 L676.7,547.7 L676.6,547.5 L676.5,547.3 L676.3,547.1 L674.6,544.8 L674.4,544.6 L674.3,544.4 L674.2,544.2 L672.6,541.7 L672.5,541.5 L672.4,541.4 L672.3,541.1 L670.9,538.7 L670.8,538.4 L670.7,538.3 L670.6,538.1 L669.4,535.5 L669.3,535.3 L669.2,535.1 L669.2,534.9 L668.2,532.4 L668.1,532.1 L668.0,532.0 L667.9,531.7 L667.1,529.1 L667.1,528.9 L667.0,528.7 L667.0,528.5 L666.4,525.9 L666.3,525.7 L666.3,525.5 L666.2,525.3 L665.8,522.6 L665.8,522.4 L665.8,522.2 L665.8,522.0 L665.5,519.4 L665.5,519.1 L665.5,519.0 L665.5,518.7 L665.5,516.1 L665.5,515.9 L665.5,515.7 L665.5,515.4 L665.7,512.8 L665.7,512.6 L665.7,512.4 L665.8,512.2 L666.1,509.5 L666.2,509.3 L666.2,509.1 L666.3,508.9 L666.8,506.3 L666.9,506.1 L666.9,505.9 L667.0,505.7 L667.8,503.1 L667.8,502.8 L667.9,502.7 L668.0,502.4 L668.9,499.9 L669.0,499.7 L669.1,499.5 L669.2,499.3 L670.3,496.7 L670.4,496.5 L670.5,496.3 L670.6,496.1 L672.0,493.6 L672.1,493.4 L672.2,493.2 L672.3,493.0 L673.8,490.6 L674.0,490.4 L674.1,490.2 L674.2,490.0 L675.9,487.6 L676.1,487.4 L676.2,487.2 L676.3,487.0 L678.2,484.7 L678.4,484.5 L678.5,484.3 L678.7,484.1 L680.7,481.9 L680.9,481.7 L681.1,481.5 L681.2,481.3 L683.5,479.1 L683.7,478.9 L683.8,478.8 L684.0,478.6 L686.4,476.5 L686.6,476.3 L686.8,476.1 L687.0,476.0 L689.5,473.9 L689.7,473.7 L689.9,473.6 L690.1,473.4 L692.8,471.5 L693.1,471.3 L693.2,471.2 L693.5,471.0 L696.3,469.1 L696.6,468.9 L696.8,468.8 L697.0,468.7 L700.0,466.9 L700.2,466.7 L700.4,466.6 L700.7,466.5 L703.8,464.8 L704.1,464.6 L704.3,464.5 L704.5,464.4 L707.8,462.8 L708.0,462.7 L708.3,462.6 L708.5,462.4 L711.9,460.9 L712.2,460.8 L712.4,460.7 L712.7,460.6 L716.1,459.2 L716.4,459.1 L716.7,459.0 L717.0,458.9 L720.5,457.7 L720.8,457.6 L721.0,457.5 L721.4,457.4 L725.0,456.2 L725.3,456.1 L725.5,456.1 L725.9,456.0 L729.6,454.9 L729.9,454.9 L730.1,454.8 L730.5,454.7 L734.2,453.8 L734.6,453.7 L734.8,453.7 L735.1,453.6 L739.0,452.8 L739.3,452.8 L739.6,452.7 L739.9,452.7 L742.5,452.2 L742.8,452.2 L742.9,452.0 L759.1,427.6 L759.2,427.5 L758.9,427.4 L571.0,373.2 L570.8,373.1 L570.5,373.2 L432.4,440.4 L432.2,440.5 L432.0,440.7 L395.0,496.5 L394.9,496.6Z M437.3,433.7 L405.7,481.3 M661.5,554.5 L685.5,518.4 M742.0,433.4 L750.9,420.1 L571.6,368.4 L437.3,433.7 M437.3,435.7 L406.8,481.6 M662.9,554.5 L686.2,519.4 M743.5,433.1 L750.9,422.1 L571.6,370.4 L437.3,435.7 M411.6,482.8 L655.5,553.2 L682.1,513.2 M733.9,435.2 L742.5,422.3 L572.4,373.2 L442.4,436.4 L411.6,482.8 M656.5,553.6 L682.7,514.2 M735.5,434.8 L742.5,424.3 L572.4,375.2 L442.4,438.4 L412.6,483.3 M419.9,480.7 L652.3,547.7 L679.2,507.1 M725.2,437.8 L734.2,424.4 L573.2,378.0 L447.5,439.1 L419.9,480.7 M419.9,482.7 L652.3,549.7 L679.7,508.4 M726.9,437.3 L734.2,426.4 L573.2,380.0 L447.5,441.1 L419.9,482.7 M428.3,478.5 L649.0,542.2 L677.0,500.0 M715.8,441.6 L725.8,426.6 L574.0,382.8 L452.7,441.8 L428.3,478.5 M428.3,480.5 L649.0,544.2 L677.4,501.4 M717.7,440.7 L725.8,428.6 L574.0,384.8 L452.7,443.8 L428.3,480.5 M436.6,476.4 L645.7,536.7 L676.2,490.8 M705.1,447.3 L717.5,428.7 L574.8,387.6 L457.8,444.5 L436.6,476.4 M436.6,478.4 L645.7,538.7 L676.2,492.8 M707.4,445.9 L717.5,430.7 L574.8,389.6 L457.8,446.5 L436.6,478.4 M445.0,474.2 L642.5,531.2 L679.4,475.6 M690.4,459.0 L709.1,430.9 L575.6,392.4 L462.9,447.2 L445.0,474.2 M445.0,476.2 L642.5,533.2 L677.9,479.8 M694.1,455.5 L709.1,432.9 L575.6,394.4 L462.9,449.2 L445.0,476.2 M453.3,472.1 L639.2,525.7 L700.8,433.0 L576.5,397.2 L468.1,449.9 L453.3,472.1 M453.3,474.1 L639.2,527.7 L700.8,435.0 L576.5,399.2 L468.1,451.9 L453.3,474.1 M461.7,469.9 L635.9,520.2 L692.4,435.2 L577.3,402.0 L473.2,452.6 L461.7,469.9 M461.7,471.9 L635.9,522.2 L692.4,437.2 L577.3,404.0 L473.2,454.6 L461.7,471.9 M470.0,467.8 L632.7,514.7 L684.0,437.3 L578.1,406.8 L478.3,455.3 L470.0,467.8 M470.0,469.8 L632.7,516.7 L684.0,439.3 L578.1,408.8 L478.3,457.3 L470.0,469.8 M483.4,458.0 L478.4,465.6 L629.4,509.2 L675.7,439.5 L578.9,411.6 L483.4,458.0 M483.4,460.0 L478.4,467.6 L629.4,511.2 L675.7,441.5 L578.9,413.6 L483.4,460.0 M488.6,460.7 L486.7,463.5 L626.1,503.7 L667.3,441.6 L579.7,416.4 L488.6,460.7 M488.6,462.7 L486.7,465.5 L626.1,505.7 L667.3,443.6 L579.7,418.4 L488.6,462.7 M496.9,461.8 L622.9,498.2 L659.0,443.8 L580.5,421.2 L496.9,461.8 M496.9,463.8 L622.9,500.2 L659.0,445.8 L580.5,423.2 L496.9,463.8 M509.5,460.9 L619.6,492.6 L650.6,445.9 L581.3,426.0 L509.5,460.9 M509.5,462.9 L619.6,494.6 L650.6,447.9 L581.3,428.0 L509.5,462.9 M522.1,460.0 L616.3,487.1 L642.3,448.1 L582.2,430.8 L522.1,460.0 M522.1,462.0 L616.3,489.1 L642.3,450.1 L582.2,432.8 L522.1,462.0 M534.7,459.0 L613.1,481.6 L633.9,450.3 L583.0,435.6 L534.7,459.0 M534.7,461.0 L613.1,483.6 L633.9,452.3 L583.0,437.6 L534.7,461.0 M547.3,458.1 L609.8,476.1 L625.6,452.4 L583.8,440.4 L547.3,458.1 M547.3,460.1 L609.8,478.1 L625.6,454.4 L583.8,442.4 L547.3,460.1 M559.9,457.2 L606.5,470.6 L617.2,454.6 L584.6,445.2 L559.9,457.2 M559.9,459.2 L606.5,472.6 L617.2,456.6 L584.6,447.2 L559.9,459.2 M572.5,456.2 L603.3,465.1 L608.9,456.7 L585.4,449.9 L572.5,456.2 M572.5,458.2 L603.3,467.1 L608.9,458.7 L585.4,451.9 L572.5,458.2"/>
<path d="M512.9,324.7 L513.8,324.4 L514.5,324.1 L515.2,323.7 L515.9,323.4 L516.6,323.0 L517.2,322.6 L517.8,322.1 L518.4,321.7 L518.9,321.2 L519.4,320.7 L519.9,320.3 L520.3,319.7 L520.7,319.2 L521.0,318.7 L521.3,318.1 L521.6,317.6 L521.8,317.0 L522.0,316.4 L522.1,315.9 L522.2,315.3 L522.3,314.7 L522.3,314.1 L522.3,313.5 L522.2,313.0 L522.1,312.4 L521.9,311.8 L521.7,311.3 L521.5,310.7 L521.2,310.1 L520.8,309.6 L520.5,309.1 L520.1,308.6 L519.6,308.1 L519.1,307.6 L518.6,307.1 L518.1,306.6 L517.5,306.2 L516.8,305.8 L516.2,305.4 L515.5,305.0 L514.8,304.7 L514.1,304.3 L513.3,304.0 L512.6,303.8 L511.8,303.5 L511.0,303.3 L510.1,303.1 L509.3,302.9 L508.4,302.8 L507.6,302.6 L506.7,302.5 L505.8,302.5 L504.9,302.4 L504.0,302.4 L503.2,302.5 L502.3,302.5 L501.4,302.6 L500.5,302.7 L499.7,302.8 L498.8,303.0 L498.0,303.2 L497.2,303.4 L496.4,303.6 L495.4,304.0 L406.0,336.6 L405.1,336.9 L404.4,337.2 L403.7,337.6 L403.0,337.9 L402.3,338.3 L401.7,338.7 L401.1,339.2 L400.5,339.6 L400.0,340.1 L399.5,340.6 L399.0,341.0 L398.6,341.6 L398.2,342.1 L397.9,342.6 L397.6,343.2 L397.3,343.7 L397.1,344.3 L396.9,344.9 L396.8,345.4 L396.7,346.0 L396.6,346.6 L396.6,347.2 L396.6,347.8 L396.7,348.3 L396.8,348.9 L397.0,349.5 L397.2,350.0 L397.4,350.6 L397.7,351.2 L398.1,351.7 L398.4,352.2 L398.8,352.7 L399.3,353.2 L399.8,353.7 L400.3,354.2 L400.8,354.7 L401.4,355.1 L402.1,355.5 L402.7,355.9 L403.4,356.3 L404.1,356.6 L404.8,357.0 L405.6,357.3 L406.3,357.5 L407.1,357.8 L407.9,358.0 L408.8,358.2 L409.6,358.4 L410.5,358.5 L411.3,358.7 L412.2,358.8 L413.1,358.8 L414.0,358.9 L414.9,358.9 L415.7,358.8 L416.6,358.8 L417.5,358.7 L418.4,358.6 L419.2,358.5 L420.1,358.3 L420.9,358.1 L421.7,357.9 L422.5,357.7 L423.5,357.3 L512.9,324.7Z M512.9,328.2 L513.8,327.9 L514.5,327.6 L515.2,327.2 L515.9,326.9 L516.6,326.5 L517.2,326.1 L517.8,325.6 L518.4,325.2 L518.9,324.7 L519.4,324.2 L519.9,323.8 L520.3,323.2 L520.7,322.7 L521.0,322.2 L521.3,321.6 L521.6,321.1 L521.8,320.5 L522.0,319.9 L522.1,319.4 L522.2,318.8 L522.3,318.2 L522.3,317.6 L522.3,317.0 L522.2,316.5 L522.1,315.9 L521.9,315.3 L521.7,314.8 L521.5,314.2 L521.2,313.6 L520.8,313.1 L520.5,312.6 L520.1,312.1 L519.6,311.6 L519.1,311.1 L518.6,310.6 L518.1,310.1 L517.5,309.7 L516.8,309.3 L516.2,308.9 L515.5,308.5 L514.8,308.2 L514.1,307.8 L513.3,307.5 L512.6,307.3 L511.8,307.0 L511.0,306.8 L510.1,306.6 L509.3,306.4 L508.4,306.3 L507.6,306.1 L506.7,306.0 L505.8,306.0 L504.9,305.9 L504.0,305.9 L503.2,306.0 L502.3,306.0 L501.4,306.1 L500.5,306.2 L499.7,306.3 L498.8,306.5 L498.0,306.7 L497.2,306.9 L496.4,307.1 L495.4,307.5 L406.0,340.1 L405.1,340.4 L404.4,340.7 L403.7,341.1 L403.0,341.4 L402.3,341.8 L401.7,342.2 L401.1,342.7 L400.5,343.1 L400.0,343.6 L399.5,344.1 L399.0,344.5 L398.6,345.1 L398.2,345.6 L397.9,346.1 L397.6,346.7 L397.3,347.2 L397.1,347.8 L396.9,348.4 L396.8,348.9 L396.7,349.5 L396.6,350.1 L396.6,350.7 L396.6,351.3 L396.7,351.8 L396.8,352.4 L397.0,353.0 L397.2,353.5 L397.4,354.1 L397.7,354.7 L398.1,355.2 L398.4,355.7 L398.8,356.2 L399.3,356.7 L399.8,357.2 L400.3,357.7 L400.8,358.2 L401.4,358.6 L402.1,359.0 L402.7,359.4 L403.4,359.8 L404.1,360.1 L404.8,360.5 L405.6,360.8 L406.3,361.0 L407.1,361.3 L407.9,361.5 L408.8,361.7 L409.6,361.9 L410.5,362.0 L411.3,362.2 L412.2,362.3 L413.1,362.3 L414.0,362.4 L414.9,362.4 L415.7,362.3 L416.6,362.3 L417.5,362.2 L418.4,362.1 L419.2,362.0 L420.1,361.8 L420.9,361.6 L421.7,361.4 L422.5,361.2 L423.5,360.8 L512.9,328.2Z M512.9,331.7 L513.8,331.4 L514.5,331.1 L515.2,330.7 L515.9,330.4 L516.6,330.0 L517.2,329.6 L517.8,329.1 L518.4,328.7 L518.9,328.2 L519.4,327.7 L519.9,327.3 L520.3,326.7 L520.7,326.2 L521.0,325.7 L521.3,325.1 L521.6,324.6 L521.8,324.0 L522.0,323.4 L522.1,322.9 L522.2,322.3 L522.3,321.7 L522.3,321.1 L522.3,320.5 L522.2,320.0 L522.1,319.4 L521.9,318.8 L521.7,318.3 L521.5,317.7 L521.2,317.1 L520.8,316.6 L520.5,316.1 L520.1,315.6 L519.6,315.1 L519.1,314.6 L518.6,314.1 L518.1,313.6 L517.5,313.2 L516.8,312.8 L516.2,312.4 L515.5,312.0 L514.8,311.7 L514.1,311.3 L513.3,311.0 L512.6,310.8 L511.8,310.5 L511.0,310.3 L510.1,310.1 L509.3,309.9 L508.4,309.8 L507.6,309.6 L506.7,309.5 L505.8,309.5 L504.9,309.4 L504.0,309.4 L503.2,309.5 L502.3,309.5 L501.4,309.6 L500.5,309.7 L499.7,309.8 L498.8,310.0 L498.0,310.2 L497.2,310.4 L496.4,310.6 L495.4,311.0 L406.0,343.6 L405.1,343.9 L404.4,344.2 L403.7,344.6 L403.0,344.9 L402.3,345.3 L401.7,345.7 L401.1,346.2 L400.5,346.6 L400.0,347.1 L399.5,347.6 L399.0,348.0 L398.6,348.6 L398.2,349.1 L397.9,349.6 L397.6,350.2 L397.3,350.7 L397.1,351.3 L396.9,351.9 L396.8,352.4 L396.7,353.0 L396.6,353.6 L396.6,354.2 L396.6,354.8 L396.7,355.3 L396.8,355.9 L397.0,356.5 L397.2,357.0 L397.4,357.6 L397.7,358.2 L398.1,358.7 L398.4,359.2 L398.8,359.7 L399.3,360.2 L399.8,360.7 L400.3,361.2 L400.8,361.7 L401.4,362.1 L402.1,362.5 L402.7,362.9 L403.4,363.3 L404.1,363.6 L404.8,364.0 L405.6,364.3 L406.3,364.5 L407.1,364.8 L407.9,365.0 L408.8,365.2 L409.6,365.4 L410.5,365.5 L411.3,365.7 L412.2,365.8 L413.1,365.8 L414.0,365.9 L414.9,365.9 L415.7,365.8 L416.6,365.8 L417.5,365.7 L418.4,365.6 L419.2,365.5 L420.1,365.3 L420.9,365.1 L421.7,364.9 L422.5,364.7 L423.5,364.3 L512.9,331.7Z M512.9,335.2 L513.8,334.9 L514.5,334.6 L515.2,334.2 L515.9,333.9 L516.6,333.5 L517.2,333.1 L517.8,332.6 L518.4,332.2 L518.9,331.7 L519.4,331.2 L519.9,330.8 L520.3,330.2 L520.7,329.7 L521.0,329.2 L521.3,328.6 L521.6,328.1 L521.8,327.5 L522.0,326.9 L522.1,326.4 L522.2,325.8 L522.3,325.2 L522.3,324.6 L522.3,324.0 L522.2,323.5 L522.1,322.9 L521.9,322.3 L521.7,321.8 L521.5,321.2 L521.2,320.6 L520.8,320.1 L520.5,319.6 L520.1,319.1 L519.6,318.6 L519.1,318.1 L518.6,317.6 L518.1,317.1 L517.5,316.7 L516.8,316.3 L516.2,315.9 L515.5,315.5 L514.8,315.2 L514.1,314.8 L513.3,314.5 L512.6,314.3 L511.8,314.0 L511.0,313.8 L510.1,313.6 L509.3,313.4 L508.4,313.3 L507.6,313.1 L506.7,313.0 L505.8,313.0 L504.9,312.9 L504.0,312.9 L503.2,313.0 L502.3,313.0 L501.4,313.1 L500.5,313.2 L499.7,313.3 L498.8,313.5 L498.0,313.7 L497.2,313.9 L496.4,314.1 L495.4,314.5 L406.0,347.1 L405.1,347.4 L404.4,347.7 L403.7,348.1 L403.0,348.4 L402.3,348.8 L401.7,349.2 L401.1,349.7 L400.5,350.1 L400.0,350.6 L399.5,351.1 L399.0,351.5 L398.6,352.1 L398.2,352.6 L397.9,353.1 L397.6,353.7 L397.3,354.2 L397.1,354.8 L396.9,355.4 L396.8,355.9 L396.7,356.5 L396.6,357.1 L396.6,357.7 L396.6,358.3 L396.7,358.8 L396.8,359.4 L397.0,360.0 L397.2,360.5 L397.4,361.1 L397.7,361.7 L398.1,362.2 L398.4,362.7 L398.8,363.2 L399.3,363.7 L399.8,364.2 L400.3,364.7 L400.8,365.2 L401.4,365.6 L402.1,366.0 L402.7,366.4 L403.4,366.8 L404.1,367.1 L404.8,367.5 L405.6,367.8 L406.3,368.0 L407.1,368.3 L407.9,368.5 L408.8,368.7 L409.6,368.9 L410.5,369.0 L411.3,369.2 L412.2,369.3 L413.1,369.3 L414.0,369.4 L414.9,369.4 L415.7,369.3 L416.6,369.3 L417.5,369.2 L418.4,369.1 L419.2,369.0 L420.1,368.8 L420.9,368.6 L421.7,368.4 L422.5,368.2 L423.5,367.8 L512.9,335.2Z M510.1,324.5 L510.8,324.3 L511.3,324.0 L511.8,323.8 L512.3,323.6 L512.8,323.3 L513.2,323.0 L513.6,322.7 L514.0,322.4 L514.4,322.1 L514.7,321.7 L515.0,321.4 L515.3,321.1 L515.6,320.7 L515.8,320.3 L516.1,319.9 L516.2,319.6 L516.4,319.2 L516.5,318.8 L516.6,318.4 L516.7,318.0 L516.7,317.6 L516.7,317.2 L516.7,316.8 L516.6,316.4 L516.6,316.0 L516.4,315.6 L516.3,315.2 L516.1,314.8 L515.9,314.4 L515.7,314.1 L515.5,313.7 L515.2,313.3 L514.9,313.0 L514.5,312.7 L514.2,312.3 L513.8,312.0 L513.4,311.7 L513.0,311.4 L512.5,311.2 L512.0,310.9 L511.6,310.7 L511.1,310.4 L510.5,310.2 L510.0,310.0 L509.5,309.8 L508.9,309.7 L508.3,309.6 L507.7,309.4 L507.1,309.3 L506.6,309.2 L505.9,309.2 L505.3,309.1 L504.7,309.1 L504.1,309.1 L503.5,309.1 L502.9,309.2 L502.3,309.2 L501.7,309.3 L501.1,309.4 L500.5,309.5 L499.9,309.6 L499.4,309.8 L498.8,310.0 L498.1,310.2 L408.8,342.8 L408.1,343.0 L407.6,343.3 L407.1,343.5 L406.6,343.7 L406.1,344.0 L405.7,344.3 L405.3,344.6 L404.9,344.9 L404.5,345.2 L404.2,345.6 L403.9,345.9 L403.6,346.2 L403.3,346.6 L403.1,347.0 L402.8,347.4 L402.7,347.7 L402.5,348.1 L402.4,348.5 L402.3,348.9 L402.2,349.3 L402.2,349.7 L402.2,350.1 L402.2,350.5 L402.3,350.9 L402.3,351.3 L402.5,351.7 L402.6,352.1 L402.8,352.5 L403.0,352.9 L403.2,353.2 L403.4,353.6 L403.7,354.0 L404.0,354.3 L404.4,354.6 L404.7,355.0 L405.1,355.3 L405.5,355.6 L405.9,355.9 L406.4,356.1 L406.9,356.4 L407.3,356.6 L407.8,356.9 L408.4,357.1 L408.9,357.3 L409.4,357.5 L410.0,357.6 L410.6,357.7 L411.2,357.9 L411.8,358.0 L412.3,358.1 L413.0,358.1 L413.6,358.2 L414.2,358.2 L414.8,358.2 L415.4,358.2 L416.0,358.1 L416.6,358.1 L417.2,358.0 L417.8,357.9 L418.4,357.8 L419.0,357.7 L419.5,357.5 L420.1,357.3 L420.8,357.1 L510.1,324.5Z M510.1,326.5 L510.8,326.3 L511.3,326.0 L511.8,325.8 L512.3,325.6 L512.8,325.3 L513.2,325.0 L513.6,324.7 L514.0,324.4 L514.4,324.1 L514.7,323.7 L515.0,323.4 L515.3,323.1 L515.6,322.7 L515.8,322.3 L516.1,321.9 L516.2,321.6 L516.4,321.2 L516.5,320.8 L516.6,320.4 L516.7,320.0 L516.7,319.6 L516.7,319.2 L516.7,318.8 L516.6,318.4 L516.6,318.0 L516.4,317.6 L516.3,317.2 L516.1,316.8 L515.9,316.4 L515.7,316.1 L515.5,315.7 L515.2,315.3 L514.9,315.0 L514.5,314.7 L514.2,314.3 L513.8,314.0 L513.4,313.7 L513.0,313.4 L512.5,313.2 L512.0,312.9 L511.6,312.7 L511.1,312.4 L510.5,312.2 L510.0,312.0 L509.5,311.8 L508.9,311.7 L508.3,311.6 L507.7,311.4 L507.1,311.3 L506.6,311.2 L505.9,311.2 L505.3,311.1 L504.7,311.1 L504.1,311.1 L503.5,311.1 L502.9,311.2 L502.3,311.2 L501.7,311.3 L501.1,311.4 L500.5,311.5 L499.9,311.6 L499.4,311.8 L498.8,312.0 L498.1,312.2 L408.8,344.8 L408.1,345.0 L407.6,345.3 L407.1,345.5 L406.6,345.7 L406.1,346.0 L405.7,346.3 L405.3,346.6 L404.9,346.9 L404.5,347.2 L404.2,347.6 L403.9,347.9 L403.6,348.2 L403.3,348.6 L403.1,349.0 L402.8,349.4 L402.7,349.7 L402.5,350.1 L402.4,350.5 L402.3,350.9 L402.2,351.3 L402.2,351.7 L402.2,352.1 L402.2,352.5 L402.3,352.9 L402.3,353.3 L402.5,353.7 L402.6,354.1 L402.8,354.5 L403.0,354.9 L403.2,355.2 L403.4,355.6 L403.7,356.0 L404.0,356.3 L404.4,356.6 L404.7,357.0 L405.1,357.3 L405.5,357.6 L405.9,357.9 L406.4,358.1 L406.9,358.4 L407.3,358.6 L407.8,358.9 L408.4,359.1 L408.9,359.3 L409.4,359.5 L410.0,359.6 L410.6,359.7 L411.2,359.9 L411.8,360.0 L412.3,360.1 L413.0,360.1 L413.6,360.2 L414.2,360.2 L414.8,360.2 L415.4,360.2 L416.0,360.1 L416.6,360.1 L417.2,360.0 L417.8,359.9 L418.4,359.8 L419.0,359.7 L419.5,359.5 L420.1,359.3 L420.8,359.1 L510.1,326.5Z M510.1,328.5 L510.8,328.3 L511.3,328.0 L511.8,327.8 L512.3,327.6 L512.8,327.3 L513.2,327.0 L513.6,326.7 L514.0,326.4 L514.4,326.1 L514.7,325.7 L515.0,325.4 L515.3,325.1 L515.6,324.7 L515.8,324.3 L516.1,323.9 L516.2,323.6 L516.4,323.2 L516.5,322.8 L516.6,322.4 L516.7,322.0 L516.7,321.6 L516.7,321.2 L516.7,320.8 L516.6,320.4 L516.6,320.0 L516.4,319.6 L516.3,319.2 L516.1,318.8 L515.9,318.4 L515.7,318.1 L515.5,317.7 L515.2,317.3 L514.9,317.0 L514.5,316.7 L514.2,316.3 L513.8,316.0 L513.4,315.7 L513.0,315.4 L512.5,315.2 L512.0,314.9 L511.6,314.7 L511.1,314.4 L510.5,314.2 L510.0,314.0 L509.5,313.8 L508.9,313.7 L508.3,313.6 L507.7,313.4 L507.1,313.3 L506.6,313.2 L505.9,313.2 L505.3,313.1 L504.7,313.1 L504.1,313.1 L503.5,313.1 L502.9,313.2 L502.3,313.2 L501.7,313.3 L501.1,313.4 L500.5,313.5 L499.9,313.6 L499.4,313.8 L498.8,314.0 L498.1,314.2 L408.8,346.8 L408.1,347.0 L407.6,347.3 L407.1,347.5 L406.6,347.7 L406.1,348.0 L405.7,348.3 L405.3,348.6 L404.9,348.9 L404.5,349.2 L404.2,349.6 L403.9,349.9 L403.6,350.2 L403.3,350.6 L403.1,351.0 L402.8,351.4 L402.7,351.7 L402.5,352.1 L402.4,352.5 L402.3,352.9 L402.2,353.3 L402.2,353.7 L402.2,354.1 L402.2,354.5 L402.3,354.9 L402.3,355.3 L402.5,355.7 L402.6,356.1 L402.8,356.5 L403.0,356.9 L403.2,357.2 L403.4,357.6 L403.7,358.0 L404.0,358.3 L404.4,358.6 L404.7,359.0 L405.1,359.3 L405.5,359.6 L405.9,359.9 L406.4,360.1 L406.9,360.4 L407.3,360.6 L407.8,360.9 L408.4,361.1 L408.9,361.3 L409.4,361.5 L410.0,361.6 L410.6,361.7 L411.2,361.9 L411.8,362.0 L412.3,362.1 L413.0,362.1 L413.6,362.2 L414.2,362.2 L414.8,362.2 L415.4,362.2 L416.0,362.1 L416.6,362.1 L417.2,362.0 L417.8,361.9 L418.4,361.8 L419.0,361.7 L419.5,361.5 L420.1,361.3 L420.8,361.1 L510.1,328.5Z M507.4,321.3 L507.9,321.1 L508.2,321.0 L508.5,320.9 L508.7,320.7 L509.0,320.6 L509.2,320.4 L509.4,320.3 L509.6,320.1 L509.9,319.9 L510.0,319.7 L510.2,319.6 L510.4,319.4 L510.5,319.2 L510.7,319.0 L510.8,318.8 L510.9,318.5 L511.0,318.3 L511.0,318.1 L511.1,317.9 L511.1,317.7 L511.1,317.5 L511.1,317.2 L511.1,317.0 L511.1,316.8 L511.1,316.6 L511.0,316.4 L510.9,316.1 L510.8,315.9 L510.7,315.7 L510.6,315.5 L510.4,315.3 L510.3,315.1 L510.1,314.9 L509.9,314.7 L509.7,314.6 L509.5,314.4 L509.3,314.2 L509.1,314.1 L508.8,313.9 L508.6,313.8 L508.3,313.6 L508.0,313.5 L507.7,313.4 L507.4,313.3 L507.1,313.2 L506.8,313.1 L506.5,313.0 L506.2,313.0 L505.9,312.9 L505.5,312.9 L505.2,312.8 L504.9,312.8 L504.5,312.8 L504.2,312.8 L503.9,312.8 L503.5,312.8 L503.2,312.9 L502.9,312.9 L502.5,312.9 L502.2,313.0 L501.9,313.1 L501.6,313.2 L501.3,313.3 L500.7,313.4 L411.5,346.0 L411.0,346.2 L410.7,346.3 L410.4,346.4 L410.2,346.6 L409.9,346.7 L409.7,346.9 L409.5,347.0 L409.3,347.2 L409.0,347.4 L408.9,347.6 L408.7,347.7 L408.5,347.9 L408.4,348.1 L408.2,348.3 L408.1,348.5 L408.0,348.8 L407.9,349.0 L407.9,349.2 L407.8,349.4 L407.8,349.6 L407.8,349.8 L407.8,350.1 L407.8,350.3 L407.8,350.5 L407.8,350.7 L407.9,350.9 L408.0,351.2 L408.1,351.4 L408.2,351.6 L408.3,351.8 L408.5,352.0 L408.6,352.2 L408.8,352.4 L409.0,352.6 L409.2,352.7 L409.4,352.9 L409.6,353.1 L409.8,353.2 L410.1,353.4 L410.3,353.5 L410.6,353.7 L410.9,353.8 L411.2,353.9 L411.5,354.0 L411.8,354.1 L412.1,354.2 L412.4,354.3 L412.7,354.3 L413.0,354.4 L413.4,354.4 L413.7,354.5 L414.0,354.5 L414.4,354.5 L414.7,354.5 L415.0,354.5 L415.4,354.5 L415.7,354.4 L416.0,354.4 L416.4,354.4 L416.7,354.3 L417.0,354.2 L417.3,354.1 L417.6,354.0 L418.2,353.9 L507.4,321.3Z M507.4,323.3 L507.9,323.1 L508.2,323.0 L508.5,322.9 L508.7,322.7 L509.0,322.6 L509.2,322.4 L509.4,322.3 L509.6,322.1 L509.9,321.9 L510.0,321.7 L510.2,321.6 L510.4,321.4 L510.5,321.2 L510.7,321.0 L510.8,320.8 L510.9,320.5 L511.0,320.3 L511.0,320.1 L511.1,319.9 L511.1,319.7 L511.1,319.5 L511.1,319.2 L511.1,319.0 L511.1,318.8 L511.1,318.6 L511.0,318.4 L510.9,318.1 L510.8,317.9 L510.7,317.7 L510.6,317.5 L510.4,317.3 L510.3,317.1 L510.1,316.9 L509.9,316.7 L509.7,316.6 L509.5,316.4 L509.3,316.2 L509.1,316.1 L508.8,315.9 L508.6,315.8 L508.3,315.6 L508.0,315.5 L507.7,315.4 L507.4,315.3 L507.1,315.2 L506.8,315.1 L506.5,315.0 L506.2,315.0 L505.9,314.9 L505.5,314.9 L505.2,314.8 L504.9,314.8 L504.5,314.8 L504.2,314.8 L503.9,314.8 L503.5,314.8 L503.2,314.9 L502.9,314.9 L502.5,314.9 L502.2,315.0 L501.9,315.1 L501.6,315.2 L501.3,315.3 L500.7,315.4 L411.5,348.0 L411.0,348.2 L410.7,348.3 L410.4,348.4 L410.2,348.6 L409.9,348.7 L409.7,348.9 L409.5,349.0 L409.3,349.2 L409.0,349.4 L408.9,349.6 L408.7,349.7 L408.5,349.9 L408.4,350.1 L408.2,350.3 L408.1,350.5 L408.0,350.8 L407.9,351.0 L407.9,351.2 L407.8,351.4 L407.8,351.6 L407.8,351.8 L407.8,352.1 L407.8,352.3 L407.8,352.5 L407.8,352.7 L407.9,352.9 L408.0,353.2 L408.1,353.4 L408.2,353.6 L408.3,353.8 L408.5,354.0 L408.6,354.2 L408.8,354.4 L409.0,354.6 L409.2,354.7 L409.4,354.9 L409.6,355.1 L409.8,355.2 L410.1,355.4 L410.3,355.5 L410.6,355.7 L410.9,355.8 L411.2,355.9 L411.5,356.0 L411.8,356.1 L412.1,356.2 L412.4,356.3 L412.7,356.3 L413.0,356.4 L413.4,356.4 L413.7,356.5 L414.0,356.5 L414.4,356.5 L414.7,356.5 L415.0,356.5 L415.4,356.5 L415.7,356.4 L416.0,356.4 L416.4,356.4 L416.7,356.3 L417.0,356.2 L417.3,356.1 L417.6,356.0 L418.2,355.9 L507.4,323.3Z M507.4,325.3 L507.9,325.1 L508.2,325.0 L508.5,324.9 L508.7,324.7 L509.0,324.6 L509.2,324.4 L509.4,324.3 L509.6,324.1 L509.9,323.9 L510.0,323.7 L510.2,323.6 L510.4,323.4 L510.5,323.2 L510.7,323.0 L510.8,322.8 L510.9,322.5 L511.0,322.3 L511.0,322.1 L511.1,321.9 L511.1,321.7 L511.1,321.5 L511.1,321.2 L511.1,321.0 L511.1,320.8 L511.1,320.6 L511.0,320.4 L510.9,320.1 L510.8,319.9 L510.7,319.7 L510.6,319.5 L510.4,319.3 L510.3,319.1 L510.1,318.9 L509.9,318.7 L509.7,318.6 L509.5,318.4 L509.3,318.2 L509.1,318.1 L508.8,317.9 L508.6,317.8 L508.3,317.6 L508.0,317.5 L507.7,317.4 L507.4,317.3 L507.1,317.2 L506.8,317.1 L506.5,317.0 L506.2,317.0 L505.9,316.9 L505.5,316.9 L505.2,316.8 L504.9,316.8 L504.5,316.8 L504.2,316.8 L503.9,316.8 L503.5,316.8 L503.2,316.9 L502.9,316.9 L502.5,316.9 L502.2,317.0 L501.9,317.1 L501.6,317.2 L501.3,317.3 L500.7,317.4 L411.5,350.0 L411.0,350.2 L410.7,350.3 L410.4,350.4 L410.2,350.6 L409.9,350.7 L409.7,350.9 L409.5,351.0 L409.3,351.2 L409.0,351.4 L408.9,351.6 L408.7,351.7 L408.5,351.9 L408.4,352.1 L408.2,352.3 L408.1,352.5 L408.0,352.8 L407.9,353.0 L407.9,353.2 L407.8,353.4 L407.8,353.6 L407.8,353.8 L407.8,354.1 L407.8,354.3 L407.8,354.5 L407.8,354.7 L407.9,354.9 L408.0,355.2 L408.1,355.4 L408.2,355.6 L408.3,355.8 L408.5,356.0 L408.6,356.2 L408.8,356.4 L409.0,356.6 L409.2,356.7 L409.4,356.9 L409.6,357.1 L409.8,357.2 L410.1,357.4 L410.3,357.5 L410.6,357.7 L410.9,357.8 L411.2,357.9 L411.5,358.0 L411.8,358.1 L412.1,358.2 L412.4,358.3 L412.7,358.3 L413.0,358.4 L413.4,358.4 L413.7,358.5 L414.0,358.5 L414.4,358.5 L414.7,358.5 L415.0,358.5 L415.4,358.5 L415.7,358.4 L416.0,358.4 L416.4,358.4 L416.7,358.3 L417.0,358.2 L417.3,358.1 L417.6,358.0 L418.2,357.9 L507.4,325.3Z M504.6,318.1 L505.0,318.0 L505.0,318.0 L505.1,318.0 L505.1,317.9 L505.2,317.9 L505.2,317.9 L505.2,317.8 L505.3,317.8 L505.3,317.8 L505.4,317.8 L505.4,317.7 L505.4,317.7 L505.4,317.6 L505.5,317.6 L505.5,317.6 L505.5,317.5 L505.5,317.5 L505.5,317.5 L505.5,317.4 L505.6,317.4 L505.6,317.3 L505.6,317.3 L505.6,317.2 L505.6,317.2 L505.5,317.2 L505.5,317.1 L505.5,317.1 L505.5,317.0 L505.5,317.0 L505.5,317.0 L505.4,316.9 L505.4,316.9 L505.4,316.9 L505.3,316.8 L505.3,316.8 L505.3,316.8 L505.2,316.7 L505.2,316.7 L505.1,316.7 L505.1,316.7 L505.0,316.6 L505.0,316.6 L504.9,316.6 L504.9,316.6 L504.8,316.5 L504.8,316.5 L504.7,316.5 L504.6,316.5 L504.6,316.5 L504.5,316.5 L504.5,316.5 L504.4,316.5 L504.3,316.5 L504.3,316.5 L504.2,316.5 L504.2,316.5 L504.1,316.5 L504.0,316.5 L504.0,316.5 L503.9,316.5 L503.9,316.5 L503.8,316.5 L503.7,316.6 L503.4,316.7 L414.3,349.2 L413.9,349.3 L413.9,349.3 L413.8,349.3 L413.8,349.4 L413.7,349.4 L413.7,349.4 L413.7,349.5 L413.6,349.5 L413.6,349.5 L413.5,349.5 L413.5,349.6 L413.5,349.6 L413.5,349.7 L413.4,349.7 L413.4,349.7 L413.4,349.8 L413.4,349.8 L413.4,349.8 L413.4,349.9 L413.3,349.9 L413.3,350.0 L413.3,350.0 L413.3,350.1 L413.3,350.1 L413.4,350.1 L413.4,350.2 L413.4,350.2 L413.4,350.3 L413.4,350.3 L413.4,350.3 L413.5,350.4 L413.5,350.4 L413.5,350.4 L413.6,350.5 L413.6,350.5 L413.6,350.5 L413.7,350.6 L413.7,350.6 L413.8,350.6 L413.8,350.6 L413.9,350.7 L413.9,350.7 L414.0,350.7 L414.0,350.7 L414.1,350.8 L414.1,350.8 L414.2,350.8 L414.3,350.8 L414.3,350.8 L414.4,350.8 L414.4,350.8 L414.5,350.8 L414.6,350.8 L414.6,350.8 L414.7,350.8 L414.7,350.8 L414.8,350.8 L414.9,350.8 L414.9,350.8 L415.0,350.8 L415.0,350.8 L415.1,350.8 L415.2,350.7 L415.5,350.6 L504.6,318.1Z M504.6,320.1 L505.0,320.0 L505.0,320.0 L505.1,320.0 L505.1,319.9 L505.2,319.9 L505.2,319.9 L505.2,319.8 L505.3,319.8 L505.3,319.8 L505.4,319.8 L505.4,319.7 L505.4,319.7 L505.4,319.6 L505.5,319.6 L505.5,319.6 L505.5,319.5 L505.5,319.5 L505.5,319.5 L505.5,319.4 L505.6,319.4 L505.6,319.3 L505.6,319.3 L505.6,319.2 L505.6,319.2 L505.5,319.2 L505.5,319.1 L505.5,319.1 L505.5,319.0 L505.5,319.0 L505.5,319.0 L505.4,318.9 L505.4,318.9 L505.4,318.9 L505.3,318.8 L505.3,318.8 L505.3,318.8 L505.2,318.7 L505.2,318.7 L505.1,318.7 L505.1,318.7 L505.0,318.6 L505.0,318.6 L504.9,318.6 L504.9,318.6 L504.8,318.5 L504.8,318.5 L504.7,318.5 L504.6,318.5 L504.6,318.5 L504.5,318.5 L504.5,318.5 L504.4,318.5 L504.3,318.5 L504.3,318.5 L504.2,318.5 L504.2,318.5 L504.1,318.5 L504.0,318.5 L504.0,318.5 L503.9,318.5 L503.9,318.5 L503.8,318.5 L503.7,318.6 L503.4,318.7 L414.3,351.2 L413.9,351.3 L413.9,351.3 L413.8,351.3 L413.8,351.4 L413.7,351.4 L413.7,351.4 L413.7,351.5 L413.6,351.5 L413.6,351.5 L413.5,351.5 L413.5,351.6 L413.5,351.6 L413.5,351.7 L413.4,351.7 L413.4,351.7 L413.4,351.8 L413.4,351.8 L413.4,351.8 L413.4,351.9 L413.3,351.9 L413.3,352.0 L413.3,352.0 L413.3,352.1 L413.3,352.1 L413.4,352.1 L413.4,352.2 L413.4,352.2 L413.4,352.3 L413.4,352.3 L413.4,352.3 L413.5,352.4 L413.5,352.4 L413.5,352.4 L413.6,352.5 L413.6,352.5 L413.6,352.5 L413.7,352.6 L413.7,352.6 L413.8,352.6 L413.8,352.6 L413.9,352.7 L413.9,352.7 L414.0,352.7 L414.0,352.7 L414.1,352.8 L414.1,352.8 L414.2,352.8 L414.3,352.8 L414.3,352.8 L414.4,352.8 L414.4,352.8 L414.5,352.8 L414.6,352.8 L414.6,352.8 L414.7,352.8 L414.7,352.8 L414.8,352.8 L414.9,352.8 L414.9,352.8 L415.0,352.8 L415.0,352.8 L415.1,352.8 L415.2,352.7 L415.5,352.6 L504.6,320.1Z M504.6,322.1 L505.0,322.0 L505.0,322.0 L505.1,322.0 L505.1,321.9 L505.2,321.9 L505.2,321.9 L505.2,321.8 L505.3,321.8 L505.3,321.8 L505.4,321.8 L505.4,321.7 L505.4,321.7 L505.4,321.6 L505.5,321.6 L505.5,321.6 L505.5,321.5 L505.5,321.5 L505.5,321.5 L505.5,321.4 L505.6,321.4 L505.6,321.3 L505.6,321.3 L505.6,321.2 L505.6,321.2 L505.5,321.2 L505.5,321.1 L505.5,321.1 L505.5,321.0 L505.5,321.0 L505.5,321.0 L505.4,320.9 L505.4,320.9 L505.4,320.9 L505.3,320.8 L505.3,320.8 L505.3,320.8 L505.2,320.7 L505.2,320.7 L505.1,320.7 L505.1,320.7 L505.0,320.6 L505.0,320.6 L504.9,320.6 L504.9,320.6 L504.8,320.5 L504.8,320.5 L504.7,320.5 L504.6,320.5 L504.6,320.5 L504.5,320.5 L504.5,320.5 L504.4,320.5 L504.3,320.5 L504.3,320.5 L504.2,320.5 L504.2,320.5 L504.1,320.5 L504.0,320.5 L504.0,320.5 L503.9,320.5 L503.9,320.5 L503.8,320.5 L503.7,320.6 L503.4,320.7 L414.3,353.2 L413.9,353.3 L413.9,353.3 L413.8,353.3 L413.8,353.4 L413.7,353.4 L413.7,353.4 L413.7,353.5 L413.6,353.5 L413.6,353.5 L413.5,353.5 L413.5,353.6 L413.5,353.6 L413.5,353.7 L413.4,353.7 L413.4,353.7 L413.4,353.8 L413.4,353.8 L413.4,353.8 L413.4,353.9 L413.3,353.9 L413.3,354.0 L413.3,354.0 L413.3,354.1 L413.3,354.1 L413.4,354.1 L413.4,354.2 L413.4,354.2 L413.4,354.3 L413.4,354.3 L413.4,354.3 L413.5,354.4 L413.5,354.4 L413.5,354.4 L413.6,354.5 L413.6,354.5 L413.6,354.5 L413.7,354.6 L413.7,354.6 L413.8,354.6 L413.8,354.6 L413.9,354.7 L413.9,354.7 L414.0,354.7 L414.0,354.7 L414.1,354.8 L414.1,354.8 L414.2,354.8 L414.3,354.8 L414.3,354.8 L414.4,354.8 L414.4,354.8 L414.5,354.8 L414.6,354.8 L414.6,354.8 L414.7,354.8 L414.7,354.8 L414.8,354.8 L414.9,354.8 L414.9,354.8 L415.0,354.8 L415.0,354.8 L415.1,354.8 L415.2,354.7 L415.5,354.6 L504.6,322.1Z"/>
</g>
<path d="M606.0,474.0 Q591.0,508.5 608.0,551.0 Q603.0,510.5 606.0,474.0Z M622.0,475.5 Q607.0,508.0 624.0,548.5 Q619.0,510.0 622.0,475.5Z M638.0,477.0 Q623.0,507.5 640.0,546.0 Q635.0,509.5 638.0,477.0Z M654.0,478.5 Q639.0,507.0 656.0,543.5 Q651.0,509.0 654.0,478.5Z M670.0,480.0 Q655.0,506.5 672.0,541.0 Q667.0,508.5 670.0,480.0Z" fill="#000" stroke="#00ff00" stroke-width="1.3"/>
<path d="M770.8,405.4 L770.9,405.2 L771.2,404.7 L771.3,404.4 L771.6,403.9 L771.6,403.6 L771.8,403.1 L771.8,402.8 L771.9,402.2 L771.9,402.0 L771.9,401.4 L771.8,401.2 L771.7,400.6 L771.7,400.4 L771.5,399.8 L771.4,399.6 L771.1,399.0 L771.0,398.8 L770.6,398.3 L770.4,398.1 L770.0,397.6 L769.8,397.4 L769.3,396.9 L769.1,396.7 L768.5,396.3 L768.2,396.1 L767.6,395.7 L767.3,395.5 L766.6,395.2 L766.3,395.0 L765.6,394.7 L765.3,394.6 L764.4,394.3 L764.2,394.3 L575.9,340.0 L575.8,339.9 L574.9,339.7 L574.5,339.6 L573.7,339.5 L573.4,339.4 L572.5,339.3 L572.2,339.3 L571.3,339.3 L571.0,339.3 L570.1,339.3 L569.8,339.3 L568.9,339.3 L568.6,339.4 L567.7,339.5 L567.4,339.6 L566.6,339.7 L566.3,339.8 L565.5,340.0 L565.1,340.1 L564.4,340.4 L564.1,340.5 L563.3,340.9 L563.2,340.9 L424.7,408.2 L424.5,408.3 L423.8,408.7 L423.5,408.9 L422.8,409.4 L422.5,409.6 L422.0,410.0 L421.7,410.2 L421.2,410.8 L421.0,411.0 L420.6,411.6 L420.5,411.7 L383.3,467.7 L383.2,467.8 L382.9,468.4 L382.7,468.7 L382.5,469.2 L382.4,469.5 L382.3,470.0 L382.2,470.3 L382.2,470.9 L382.2,471.1 L382.2,471.7 L382.2,471.9 L382.3,472.5 L382.4,472.7 L382.6,473.3 L382.7,473.5 L383.0,474.1 L383.1,474.3 L383.5,474.8 L383.6,475.0 L384.1,475.5 L384.3,475.7 L384.8,476.2 L385.0,476.4 L385.6,476.8 L385.8,477.0 L386.5,477.4 L386.8,477.6 L387.4,477.9 L387.7,478.1 L388.5,478.4 L388.8,478.5 L389.7,478.8 L389.8,478.8 L656.9,555.8 L657.0,555.9 L658.0,556.1 L658.3,556.2 L659.1,556.3 L659.5,556.4 L660.4,556.5 L660.7,556.5 L661.6,556.5 L662.0,556.5 L662.9,556.5 L663.2,556.5 L664.1,556.4 L664.5,556.4 L665.3,556.3 L665.7,556.2 L666.5,556.0 L666.8,555.9 L667.6,555.7 L668.0,555.6 L668.7,555.3 L669.0,555.2 L669.7,554.8 L670.0,554.7 L670.7,554.3 L671.0,554.1 L671.6,553.7 L671.8,553.5 L672.3,553.1 L672.6,552.9 L673.0,552.4 L673.2,552.2 L673.6,551.6 L673.7,551.5 L689.7,527.3 L689.8,527.2 L690.2,526.6 L690.3,526.4 L690.5,525.8 L690.6,525.6 L690.7,525.0 L690.8,524.7 L690.8,524.1 L690.8,523.9 L690.8,523.3 L690.8,523.0 L690.6,522.5 L690.6,522.2 L690.4,521.6 L690.2,521.4 L689.9,520.8 L689.8,520.6 L689.4,520.0 L689.3,519.9 L687.9,518.3 L687.9,518.2 L687.8,518.1 L687.7,518.0 L686.1,515.7 L686.0,515.6 L685.9,515.5 L685.8,515.4 L684.4,513.0 L684.3,512.9 L684.2,512.9 L684.2,512.7 L682.9,510.4 L682.8,510.2 L682.8,510.2 L682.7,510.0 L681.6,507.6 L681.5,507.5 L681.5,507.4 L681.4,507.3 L680.5,504.8 L680.4,504.7 L680.4,504.6 L680.4,504.5 L679.6,502.0 L679.6,501.9 L679.5,501.8 L679.5,501.7 L678.9,499.2 L678.9,499.1 L678.9,499.0 L678.9,498.9 L678.5,496.3 L678.4,496.2 L678.4,496.1 L678.4,496.0 L678.2,493.5 L678.2,493.3 L678.2,493.3 L678.2,493.1 L678.2,490.6 L678.2,490.5 L678.2,490.4 L678.2,490.3 L678.4,487.7 L678.4,487.6 L678.4,487.5 L678.4,487.4 L678.8,484.9 L678.8,484.7 L678.8,484.7 L678.8,484.5 L679.4,482.0 L679.4,481.9 L679.4,481.8 L679.5,481.7 L680.2,479.2 L680.2,479.1 L680.3,479.0 L680.3,478.9 L681.2,476.4 L681.3,476.3 L681.3,476.2 L681.3,476.1 L682.5,473.7 L682.5,473.5 L682.5,473.5 L682.6,473.3 L683.9,470.9 L684.0,470.8 L684.0,470.8 L684.1,470.6 L685.5,468.3 L685.6,468.2 L685.6,468.1 L685.7,468.0 L687.4,465.7 L687.4,465.6 L687.5,465.5 L687.6,465.4 L689.4,463.1 L689.5,463.0 L689.5,463.0 L689.6,462.9 L691.6,460.7 L691.7,460.6 L691.8,460.5 L691.9,460.4 L694.0,458.3 L694.1,458.2 L694.2,458.1 L694.3,458.0 L696.6,455.9 L696.7,455.8 L696.8,455.8 L696.9,455.7 L699.3,453.7 L699.4,453.6 L699.5,453.6 L699.6,453.5 L702.2,451.6 L702.3,451.5 L702.4,451.4 L702.5,451.3 L705.3,449.5 L705.4,449.4 L705.5,449.4 L705.6,449.3 L708.5,447.6 L708.6,447.5 L708.7,447.4 L708.8,447.4 L711.8,445.7 L712.0,445.7 L712.1,445.6 L712.2,445.5 L715.3,444.0 L715.5,443.9 L715.6,443.9 L715.7,443.8 L718.9,442.4 L719.1,442.3 L719.2,442.3 L719.3,442.2 L722.6,440.9 L722.8,440.8 L722.9,440.8 L723.1,440.7 L726.5,439.5 L726.6,439.5 L726.7,439.4 L726.9,439.4 L730.4,438.3 L730.5,438.2 L730.7,438.2 L730.8,438.2 L734.4,437.2 L734.6,437.1 L734.7,437.1 L734.9,437.0 L738.5,436.2 L738.7,436.1 L738.8,436.1 L739.0,436.1 L742.6,435.3 L742.8,435.3 L742.9,435.3 L743.1,435.2 L745.8,434.8 L746.0,434.7 L747.0,434.6 L747.3,434.5 L748.2,434.2 L748.5,434.1 L749.3,433.8 L749.6,433.7 L750.4,433.4 L750.7,433.2 L751.3,432.8 L751.6,432.7 L752.2,432.2 L752.5,432.0 L753.0,431.6 L753.3,431.4 L753.7,430.9 L753.9,430.7 L754.4,430.1 L754.5,430.0 L770.8,405.4Z" fill="none" stroke="#ff00ff" stroke-width="1.2"/>
<path d="M519.2,322.0 L520.5,321.5 L521.7,321.0 L522.9,320.4 L524.1,319.7 L525.2,319.1 L526.3,318.4 L527.3,317.7 L528.3,316.9 L529.2,316.1 L530.1,315.3 L530.8,314.4 L531.6,313.6 L532.2,312.7 L532.8,311.8 L533.3,310.8 L533.8,309.9 L534.2,308.9 L534.5,308.0 L534.7,307.0 L534.9,306.0 L535.0,305.0 L535.0,304.0 L534.9,303.0 L534.8,302.0 L534.6,301.0 L534.3,300.1 L534.0,299.1 L533.5,298.1 L533.0,297.2 L532.5,296.3 L531.9,295.4 L531.2,294.5 L530.4,293.7 L529.6,292.8 L528.7,292.0 L527.7,291.2 L526.7,290.5 L525.7,289.8 L524.6,289.1 L523.4,288.5 L522.2,287.9 L521.0,287.3 L519.7,286.8 L518.4,286.3 L517.0,285.9 L515.6,285.5 L514.2,285.2 L512.8,284.9 L511.3,284.6 L509.9,284.4 L508.4,284.3 L506.9,284.1 L505.4,284.1 L503.9,284.1 L502.4,284.1 L500.9,284.2 L499.4,284.3 L497.9,284.5 L496.4,284.8 L495.0,285.0 L493.6,285.4 L492.2,285.7 L490.8,286.1 L489.4,286.6 L399.7,319.3 L398.4,319.8 L397.2,320.3 L396.0,320.9 L394.8,321.6 L393.7,322.2 L392.6,322.9 L391.6,323.6 L390.6,324.4 L389.7,325.2 L388.8,326.0 L388.1,326.9 L387.3,327.7 L386.7,328.6 L386.1,329.5 L385.6,330.5 L385.1,331.4 L384.7,332.4 L384.4,333.3 L384.2,334.3 L384.0,335.3 L383.9,336.3 L383.9,337.3 L384.0,338.3 L384.1,339.3 L384.3,340.3 L384.6,341.2 L384.9,342.2 L385.4,343.2 L385.9,344.1 L386.4,345.0 L387.0,345.9 L387.7,346.8 L388.5,347.6 L389.3,348.5 L390.2,349.3 L391.2,350.1 L392.2,350.8 L393.2,351.5 L394.3,352.2 L395.5,352.8 L396.7,353.4 L397.9,354.0 L399.2,354.5 L400.5,355.0 L401.9,355.4 L403.3,355.8 L404.7,356.1 L406.1,356.4 L407.6,356.7 L409.0,356.9 L410.5,357.0 L412.0,357.2 L413.5,357.2 L415.0,357.2 L416.5,357.2 L418.0,357.1 L419.5,357.0 L421.0,356.8 L422.5,356.5 L423.9,356.3 L425.3,355.9 L426.7,355.6 L428.1,355.2 L429.5,354.7 L519.2,322.0Z" fill="none" stroke="#ff00ff" stroke-width="1.2"/>
<g stroke="#ffff00" stroke-width="0.9" fill="none">
<ellipse cx="416" cy="332" rx="12" ry="8"/>
<ellipse cx="416" cy="336" rx="12" ry="8"/>
<ellipse cx="416" cy="340" rx="12" ry="8"/>
<ellipse cx="416" cy="344" rx="12" ry="8"/>
<ellipse cx="416" cy="348" rx="12" ry="8"/>
<ellipse cx="416" cy="352" rx="12" ry="8"/>
<ellipse cx="416" cy="356" rx="12" ry="8"/>
<ellipse cx="416" cy="360" rx="12" ry="8"/>
<ellipse cx="416" cy="364" rx="12" ry="8"/>
<ellipse cx="574" cy="441" rx="14" ry="9.5"/>
<ellipse cx="574" cy="445" rx="14" ry="9.5"/>
<ellipse cx="574" cy="449" rx="14" ry="9.5"/>
<ellipse cx="574" cy="453" rx="14" ry="9.5"/>
<ellipse cx="574" cy="457" rx="14" ry="9.5"/>
<ellipse cx="574" cy="461" rx="14" ry="9.5"/>
<ellipse cx="574" cy="465" rx="14" ry="9.5"/>
<line x1="583" y1="444.0" x2="670" y2="475.0"/>
<line x1="583" y1="447.8" x2="670" y2="478.0"/>
<line x1="583" y1="451.6" x2="670" y2="481.0"/>
<line x1="583" y1="455.4" x2="670" y2="484.0"/>
<line x1="583" y1="459.2" x2="670" y2="487.0"/>
<line x1="583" y1="463.0" x2="670" y2="490.0"/>
</g>
<g stroke-width="1" fill="none">
<line x1="410" y1="266" x2="416" y2="345" stroke="#ff00ff"/>
<line x1="416" y1="275" x2="423" y2="358" stroke="#ff0000"/>
<line x1="666" y1="384" x2="668" y2="498" stroke="#ff0000"/>
<path d="M570,365 V450 M572,414 L668,440 M578,420 L600,445 L610,447 M576,446 L552,470" stroke="#d0d0d0"/>
<path d="M577,418 L578,446 L606,454 M578,446 L560,475" stroke="#ff0000"/>
</g>
</svg>
<div class="a" style="left:965px;top:139px;width:1px;height:551px;background:#fff"></div>
<div class="a" style="left:967px;top:142px;width:25px;height:3px;border-top:1px solid #fff;border-bottom:1px solid #ACA899"></div>
<div class="a" style="left:967px;top:146px;width:25px;height:3px;border-top:1px solid #fff;border-bottom:1px solid #ACA899"></div>
<div class="a" style="left:993px;top:139px;width:1px;height:551px;background:#ACA899"></div>
<div class="a" style="left:994px;top:139px;width:1px;height:551px;background:#fff"></div>
<svg class="ic" style="left:970.5px;top:155.0px;width:16px;height:16px" viewBox="0 0 16 16" shape-rendering="crispEdges"><path d="M1.5 4.5L4.5 1.5H14.5V11.5L11.5 14.5H1.5Z" fill="#fff" stroke="#000"/><path d="M1.5 4.5H11.5V14.5M11.5 4.5L14.5 1.5" stroke="#000" fill="none"/><path d="M2 5H11V14H2Z" fill="#b8d4f4"/><rect x="4.5" y="7.5" width="7" height="7" fill="#fff" stroke="#000"/><path d="M7 9L12 14" stroke="#b09090" stroke-width="2"/></svg>
<svg class="ic" style="left:970.5px;top:176.5px;width:16px;height:16px" viewBox="0 0 16 16" shape-rendering="crispEdges"><path d="M2 11Q2 5 8 5Q14 5 14 11" fill="#fff" stroke="#000"/><path d="M8 1V15" stroke="#000" stroke-dasharray="2 1"/><circle cx="3" cy="11" r="2" fill="#c0e0ff" stroke="#0000e0"/><circle cx="13" cy="11" r="2" fill="#a0d0a0" stroke="#006000"/></svg>
<svg class="ic" style="left:970.5px;top:199.0px;width:16px;height:16px" viewBox="0 0 16 16" shape-rendering="crispEdges"><path d="M1.5 14.5V5Q2 1.5 7 1.5H11L14.5 5V11H9.5V14.5Z" fill="#fff" stroke="#000"/><path d="M3 14V6Q4 3 9 3L13 6V10" fill="#b8d4f4"/><path d="M5 13Q5 6 9 6Q11 7 10 10Z" fill="#907070" stroke="#000" stroke-width="0.7"/></svg>
<svg class="ic" style="left:970.5px;top:220.0px;width:16px;height:16px" viewBox="0 0 16 16" shape-rendering="crispEdges"><path d="M2 3H8V9Q8 12 12 13V15Q4 15 2 9Z" fill="#fff" stroke="#000"/><path d="M3 9Q5 13 11 14" stroke="#a0c8f0" stroke-width="2" fill="none"/><path d="M13 2V9M11.5 4L13 1.5L14.5 4" stroke="#000"/></svg>
<svg class="ic" style="left:970.5px;top:242.5px;width:16px;height:16px" viewBox="0 0 16 16" shape-rendering="crispEdges"><path d="M1.5 8.5L5 6H14.5V11.5L11 14H1.5Z" fill="#fff" stroke="#000"/><path d="M1.5 8.5H11V14M11 8.5L14.5 6" stroke="#000" fill="none"/><path d="M2 5L5 1M2 1H5V4M10 13L14 15M14 11V15H11" stroke="#c03020" stroke-width="1.2" fill="none"/></svg>
<svg class="ic" style="left:970.5px;top:265.0px;width:16px;height:16px" viewBox="0 0 16 16" shape-rendering="crispEdges"><path d="M1.5 4.5L4.5 1.5H14.5V11.5L11.5 14.5H1.5Z" fill="#fff" stroke="#000"/><path d="M1.5 4.5H11.5V14.5M11.5 4.5L14.5 1.5" stroke="#000" fill="none"/><path d="M2 5H11V14H2Z" fill="#b8d4f4"/><rect x="3.5" y="6.5" width="6" height="6" fill="#fff" stroke="#0000e0" stroke-width="1.3"/></svg>
<svg class="ic" style="left:970.5px;top:287.0px;width:16px;height:16px" viewBox="0 0 16 16" shape-rendering="crispEdges"><path d="M1.5 13.5V8Q1.5 2.5 8 2.5Q14.5 2.5 14.5 8V13.5Z" fill="#b8d4f4" stroke="#000"/><path d="M4 13V9Q4 5.5 8 5.5Q12 5.5 12 9V13" stroke="#0000e0" fill="#fff"/><path d="M8 2V14" stroke="#ff0000" stroke-width="1.3"/><path d="M5 9H7M9 9H11" stroke="#ffe000"/></svg>
<svg class="ic" style="left:970.5px;top:309.0px;width:16px;height:16px" viewBox="0 0 16 16" shape-rendering="crispEdges"><path d="M1.5 3.5H14.5V12.5H1.5Z" fill="#80c0a0" stroke="#000"/><path d="M2 8L4 5L6 9L8 5L10 9L12 5L14 8" stroke="#fff" stroke-width="1.3" fill="none"/><path d="M1 2H15M1 14H15" stroke="#c03020" stroke-width="1.3"/><path d="M2 9H14" stroke="#c03020"/></svg>
<svg class="ic" style="left:970.5px;top:330.0px;width:16px;height:16px" viewBox="0 0 16 16" shape-rendering="crispEdges"><path d="M1.5 6L5 3H13L14.5 6V11L11 14.5H1.5Z" fill="#fff" stroke="#000"/><path d="M3 9Q3 6 7 6H11Q13 7 12 10Q10 12 6 11" stroke="#0000e0" stroke-width="1.3" fill="#b8d4f4"/><path d="M11 1L15 3L12 5" stroke="#000" fill="none"/></svg>
<svg class="ic" style="left:970.5px;top:352.0px;width:16px;height:16px" viewBox="0 0 16 16" shape-rendering="crispEdges"><path d="M1.5 4.5L4 1.5H14.5V6L12 8.5H1.5Z" fill="#fff" stroke="#000"/><path d="M1.5 8.5V14.5H14.5V10.5H5V8.5" fill="#fff" stroke="#000"/><path d="M1.5 4.5H12V8.5M12 4.5L14.5 1.5M5 10.5L14.5 10.5" stroke="#000" fill="none"/><path d="M2 6H11" stroke="#b8d4f4" stroke-width="2"/></svg>
<svg class="ic" style="left:970.5px;top:374.0px;width:16px;height:16px" viewBox="0 0 16 16" shape-rendering="crispEdges"><path d="M1.5 8.5L4.5 5.5H14.5V12L11.5 14.5H1.5Z" fill="#fff" stroke="#000"/><path d="M1.5 8.5H11.5V14.5M11.5 8.5L14.5 5.5" stroke="#000" fill="none"/><path d="M3 6L7 1L11 4L8 8M8 3L14 2" stroke="#000" fill="#fff"/></svg>
<svg class="ic" style="left:970.5px;top:404.0px;width:16px;height:16px" viewBox="0 0 16 16" shape-rendering="crispEdges"><path d="M1.5 6L5 1.5H11L14.5 6V11L11 14.5H5L1.5 11Z" fill="#fff" stroke="#000"/><path d="M1.5 6H14.5M6 6V14" stroke="#000"/><path d="M2 6L5 2H8L6 6Z" fill="#a0c8f0"/></svg>
<svg class="ic" style="left:970.5px;top:426.0px;width:16px;height:16px" viewBox="0 0 16 16" shape-rendering="crispEdges"><path d="M1.5 6L5 2.5H11L14.5 6V11L11 14.5H1.5Z" fill="#fff" stroke="#000"/><path d="M1.5 6H11V14.5M11 6L14.5 2.5" stroke="#000" fill="none"/><path d="M2 6L5 3H9L6 6Z" fill="#a0c8f0"/></svg>
<svg class="ic" style="left:970.5px;top:449.0px;width:16px;height:16px" viewBox="0 0 16 16" shape-rendering="crispEdges"><path d="M13.5 1.5V13.5H1.5L4 10Z" fill="#fff" stroke="#000"/><path d="M11 4V11H4" stroke="#000" fill="none"/><path d="M3 11L11 5" stroke="#000" stroke-width="1.5"/><path d="M12 2V13" stroke="#a0c8f0"/></svg>
<svg class="ic" style="left:970.5px;top:470.5px;width:16px;height:16px" viewBox="0 0 16 16" shape-rendering="crispEdges"><path d="M1.5 4.5L4.5 1.5H14.5V11.5L11.5 14.5H1.5Z" fill="#fff" stroke="#000"/><path d="M1.5 4.5H11.5V14.5M11.5 4.5L14.5 1.5" stroke="#000" fill="none"/><path d="M2 5H11V14H2Z" fill="#a0c8f0"/><rect x="4.5" y="7.5" width="5" height="4" fill="#fff" stroke="#000"/></svg>
<svg class="ic" style="left:970.5px;top:493.0px;width:16px;height:16px" viewBox="0 0 16 16" shape-rendering="crispEdges"><path d="M1.5 4.5L4.5 1.5H14.5V11.5L11.5 14.5H1.5Z" fill="#fff" stroke="#000"/><path d="M1.5 4.5H11.5V14.5M11.5 4.5L14.5 1.5" stroke="#000" fill="none"/><path d="M2 5H11L6 14H2Z" fill="#a0c8f0"/><rect x="6.5" y="9.5" width="5" height="5" fill="#fff" stroke="#000"/></svg>
<svg class="ic" style="left:970.5px;top:515.0px;width:16px;height:16px" viewBox="0 0 16 16" shape-rendering="crispEdges"><path d="M1.5 4.5L4.5 1.5H14.5V11.5L11.5 14.5H1.5Z" fill="#fff" stroke="#000"/><path d="M1.5 4.5H11.5V14.5M11.5 4.5L14.5 1.5" stroke="#000" fill="none"/><path d="M2 5H11V14H2Z" fill="#fff"/><path d="M2 2L5 1H14L11 4" fill="#908090"/><circle cx="6.5" cy="9.5" r="2" fill="#5050b0"/></svg>
<svg class="ic" style="left:970.5px;top:537.0px;width:16px;height:16px" viewBox="0 0 16 16" shape-rendering="crispEdges"><path d="M1.5 4.5L4.5 1.5H14.5V11.5L11.5 14.5H1.5Z" fill="#fff" stroke="#000"/><path d="M1.5 4.5H11.5V14.5M11.5 4.5L14.5 1.5" stroke="#000" fill="none"/><path d="M2 2H14V4H2Z" fill="#a0c8f0"/><path d="M3 6H11M3 8H11M3 10H11M3 12H11M4 5V14M6 5V14M8 5V14M10 5V14" stroke="#000" stroke-width="0.6"/></svg>
<svg class="ic" style="left:970.5px;top:558.0px;width:16px;height:16px" viewBox="0 0 16 16" shape-rendering="crispEdges"><path d="M1.5 4.5L4.5 1.5H14.5V11.5L11.5 14.5H1.5Z" fill="#fff" stroke="#000"/><path d="M1.5 4.5H11.5V14.5M11.5 4.5L14.5 1.5" stroke="#000" fill="none"/><path d="M2 5H11V14H2Z" fill="#a0c8f0"/><path d="M6.5 6V13M3 9.5H10" stroke="#000"/><path d="M4 7L9 12M9 7L4 12" stroke="#000" stroke-width="0.8"/></svg>
<svg class="ic" style="left:970.5px;top:588.5px;width:16px;height:16px" viewBox="0 0 16 16" shape-rendering="crispEdges"><path d="M1 8L8 2L15 8L8 14Z" fill="#a0c8f0" stroke="#000" stroke-width="0.8"/><path d="M3 3L13 13" stroke="#000" stroke-width="1.2"/><path d="M6 6L10 10" stroke="#00a0c0" stroke-width="3"/></svg>
<svg class="ic" style="left:970.5px;top:618.7px;width:16px;height:16px" viewBox="0 0 16 16" shape-rendering="crispEdges"><path d="M1.5 4.5L4.5 1.5H14.5V11.5L11.5 14.5H1.5Z" fill="#fff" stroke="#000"/><path d="M1.5 4.5H11.5V14.5M11.5 4.5L14.5 1.5" stroke="#000" fill="none"/><path d="M2 2L5 1H14L11 4H2Z" fill="#a0c8f0"/><path d="M4 9.5H10M7 6.5V12.5" stroke="#000" stroke-width="1.5"/><path d="M3 9.5L5 8V11ZM10 9.5L8 8V11ZM7 5.5L5.5 7.5H8.5ZM7 13.5L5.5 11.5H8.5Z" fill="#000"/></svg>
<svg class="ic" style="left:970.5px;top:640.5px;width:16px;height:16px" viewBox="0 0 16 16" shape-rendering="crispEdges"><path d="M1.5 4.5L4.5 1.5H14.5V11.5L11.5 14.5H1.5Z" fill="#fff" stroke="#000"/><path d="M1.5 4.5H11.5V14.5M11.5 4.5L14.5 1.5" stroke="#000" fill="none"/><path d="M2 2L5 1H14L11 4H2Z" fill="#a0c8f0"/><path d="M3 9.5H13M10 7L13 9.5L10 12" stroke="#000" stroke-width="1.3" fill="none"/></svg>
<svg class="ic" style="left:970.5px;top:663.0px;width:16px;height:16px" viewBox="0 0 16 16" shape-rendering="crispEdges"><path d="M1.5 4.5L4.5 1.5H14.5V11.5L11.5 14.5H1.5Z" fill="#fff" stroke="#000"/><path d="M1.5 4.5H11.5V14.5M11.5 4.5L14.5 1.5" stroke="#000" fill="none"/><path d="M2 5H11V14H2Z" fill="#fff"/><rect x="4" y="7" width="6" height="6" fill="#c02020"/><path d="M2 14L14 2" stroke="#a0c8f0" stroke-width="2.5"/></svg>
<div class="a" style="left:968px;top:398px;width:22px;height:2px;border-top:1px solid #ACA899;border-bottom:1px solid #fff"></div>
<div class="a" style="left:968px;top:582px;width:22px;height:2px;border-top:1px solid #ACA899;border-bottom:1px solid #fff"></div>
<div class="a" style="left:968px;top:611px;width:22px;height:2px;border-top:1px solid #ACA899;border-bottom:1px solid #fff"></div>
<div class="a" style="left:996px;top:142px;width:20px;height:3px;border-top:1px solid #fff;border-bottom:1px solid #ACA899"></div>
<div class="a" style="left:996px;top:146px;width:20px;height:3px;border-top:1px solid #fff;border-bottom:1px solid #ACA899"></div>
<div class="a" style="left:997px;top:153px;width:20px;height:21px;border:1px solid;border-color:#ACA899 #fff #fff #ACA899;background:#f4f3ee"></div>
<svg class="ic" style="left:998.0px;top:155.0px;width:16px;height:16px" viewBox="0 0 16 16" shape-rendering="crispEdges"><path d="M3 1V13L6 10L9 15L11 14L8 9H12Z" fill="#fff" stroke="#000"/></svg>
<svg class="ic" style="left:998.0px;top:185.0px;width:16px;height:16px" viewBox="0 0 16 16" shape-rendering="crispEdges"><path d="M2 2V14H10" stroke="#0000e0" stroke-width="1.3" fill="none"/><path d="M6 13L14 4L16 6L8 15Z" fill="#ffff00" stroke="#000"/><circle cx="15" cy="4" r="1.5" fill="#a00000"/></svg>
<svg class="ic" style="left:998.0px;top:215.0px;width:16px;height:16px" viewBox="0 0 16 16" shape-rendering="crispEdges"><rect x="1" y="1" width="14" height="14" fill="#0000e0"/><rect x="1" y="1" width="7" height="7" fill="#ffff00"/><rect x="1" y="8" width="7" height="7" fill="#00a000"/><rect x="8" y="8" width="7" height="7" fill="#ff0000"/><path d="M6 3V13M10 3V13M4 5L6 3L8 5M8 11L10 13L12 11" stroke="#000" stroke-width="1.2" fill="none"/></svg>
<svg class="ic" style="left:998.0px;top:260.5px;width:16px;height:16px" viewBox="0 0 16 16" shape-rendering="crispEdges"><path d="M2 14L14 2" stroke="#000" stroke-width="1.2"/><rect x="1" y="13" width="2" height="2" fill="#00a0f0"/><rect x="13" y="1" width="2" height="2" fill="#00a0f0"/></svg>
<svg class="ic" style="left:998.0px;top:281.0px;width:16px;height:16px" viewBox="0 0 16 16" shape-rendering="crispEdges"><path d="M2 14Q5 4 14 2" stroke="#000" stroke-width="1.2" fill="none"/><rect x="1" y="13" width="2" height="2" fill="#00a0f0"/></svg>
<svg class="ic" style="left:998.0px;top:303.0px;width:16px;height:16px" viewBox="0 0 16 16" shape-rendering="crispEdges"><circle cx="8" cy="8" r="6.5" fill="#fff" stroke="#000" stroke-width="1.5"/><path d="M5.5 8H10.5M8 5.5V10.5" stroke="#0000c0" stroke-width="1.3"/></svg>
<svg class="ic" style="left:998.0px;top:325.5px;width:16px;height:16px" viewBox="0 0 16 16" shape-rendering="crispEdges"><rect x="1.5" y="3.5" width="13" height="9" fill="#fff" stroke="#000" stroke-width="1.2"/><path d="M8 12L14 6V12Z" fill="#c0d8f0"/></svg>
<svg class="ic" style="left:998.0px;top:347.0px;width:16px;height:16px" viewBox="0 0 16 16" shape-rendering="crispEdges"><ellipse cx="8" cy="8" rx="7" ry="5" fill="#fff" stroke="#000" stroke-width="1.5"/><rect x="7" y="7" width="2" height="2" fill="#00a0f0"/></svg>
<svg class="ic" style="left:998.0px;top:370.0px;width:16px;height:16px" viewBox="0 0 16 16" shape-rendering="crispEdges"><path d="M1 13Q4 6 7 9Q10 12 15 3" stroke="#000" stroke-width="1.2" fill="none"/></svg>
<svg class="ic" style="left:998.0px;top:391.0px;width:16px;height:16px" viewBox="0 0 16 16" shape-rendering="crispEdges"><rect x="4" y="4" width="8" height="8" fill="#2060c0"/><path d="M3 3L5 5M13 3L11 5M3 13L5 11M13 13L11 11" stroke="#60c0f0"/></svg>
<svg class="ic" style="left:998.0px;top:413.0px;width:16px;height:16px" viewBox="0 0 16 16" shape-rendering="crispEdges"><text x="0" y="12" font-size="11" font-family="Liberation Serif" fill="#000">f(x)</text></svg>
<svg class="ic" style="left:998.0px;top:437.0px;width:16px;height:16px" viewBox="0 0 16 16" shape-rendering="crispEdges"><path d="M4 2H11L15 8L11 14H4L1 8Z" fill="#fff" stroke="#000"/><rect x="6" y="6" width="3" height="3" fill="#00a0f0"/></svg>
<svg class="ic" style="left:998.0px;top:458.0px;width:16px;height:16px" viewBox="0 0 16 16" shape-rendering="crispEdges"><path d="M2 1V15M1 14H15" stroke="#000" stroke-width="1.2"/><path d="M2 5Q9 5 13 13" stroke="#000" fill="none"/><path d="M0.5 3L2 0.5L3.5 3ZM13 12.5L15.5 14L13 15.5Z" fill="#000"/></svg>
<svg class="ic" style="left:998.0px;top:480.0px;width:16px;height:16px" viewBox="0 0 16 16" shape-rendering="crispEdges"><path d="M1 3H10Q14 3 14 8V15M1 7H8Q10 7 10 9V15" stroke="#000" stroke-width="2.2" fill="none"/></svg>
<svg class="ic" style="left:998.0px;top:501.0px;width:16px;height:16px" viewBox="0 0 16 16" shape-rendering="crispEdges"><path d="M3 6L9 2L15 5V13L9 15L1 11Z" fill="#a0a098"/></svg>
<svg class="ic" style="left:998.0px;top:523.0px;width:16px;height:16px" viewBox="0 0 16 16" shape-rendering="crispEdges"><path d="M1 8L10 2L15 9L6 15Z" fill="#a0c8f0" stroke="#40a0c0"/><path d="M3 9L8 6M5 11L10 8" stroke="#ff2020" stroke-width="1.3"/></svg>
<svg class="ic" style="left:998.0px;top:544.0px;width:16px;height:16px" viewBox="0 0 16 16" shape-rendering="crispEdges"><path d="M1 8Q3 4 8 8Q13 12 15 8" stroke="#000" fill="none"/><circle cx="9" cy="6" r="4" fill="#fff" stroke="#000"/><path d="M2 10L4 13L6 11" stroke="#000" fill="none"/></svg>
<svg class="ic" style="left:998.0px;top:567.0px;width:16px;height:16px" viewBox="0 0 16 16" shape-rendering="crispEdges"><path d="M2 3Q8 6 14 3V12Q8 15 2 12Z" fill="#a0c8f0" stroke="#000"/><path d="M3 7Q8 10 13 7M3 10Q8 13 13 10" stroke="#ff2020" stroke-width="1.3" fill="none"/></svg>
<svg class="ic" style="left:998.0px;top:598.0px;width:16px;height:16px" viewBox="0 0 16 16" shape-rendering="crispEdges"><text x="1" y="14" font-size="15" font-weight="bold" font-family="Liberation Serif" fill="#000">A</text></svg>
<svg class="ic" style="left:998.0px;top:627.5px;width:16px;height:16px" viewBox="0 0 16 16" shape-rendering="crispEdges"><path d="M2 10L9 3L14 8L7 15Z" fill="none" stroke="#b0b0a8"/><path d="M4 10L9 5M6 8L11 13" stroke="#b0b0a8"/></svg>
<svg class="ic" style="left:998.0px;top:649.0px;width:16px;height:16px" viewBox="0 0 16 16" shape-rendering="crispEdges"><path d="M1 12H15V15H1Z" fill="none" stroke="#b0b0a8"/><path d="M3 11L10 2L12 4L5 12Z" fill="#c8c8c0" stroke="#b0b0a8"/></svg>
<svg class="ic" style="left:998.0px;top:671.0px;width:16px;height:16px" viewBox="0 0 16 16" shape-rendering="crispEdges"><path d="M2 10L9 3L14 8L7 15Z" fill="none" stroke="#b0b0a8"/><path d="M9 10H14V15H9Z" fill="#b0b0a8"/></svg>
<div class="a" style="left:996px;top:178px;width:20px;height:2px;border-top:1px solid #ACA899;border-bottom:1px solid #fff"></div>
<div class="a" style="left:996px;top:208px;width:20px;height:2px;border-top:1px solid #ACA899;border-bottom:1px solid #fff"></div>
<div class="a" style="left:996px;top:243px;width:20px;height:2px;border-top:1px solid #ACA899;border-bottom:1px solid #fff"></div>
<div class="a" style="left:996px;top:590px;width:20px;height:2px;border-top:1px solid #ACA899;border-bottom:1px solid #fff"></div>
<div class="a" style="left:996px;top:620px;width:20px;height:2px;border-top:1px solid #ACA899;border-bottom:1px solid #fff"></div>
<div class="a" style="left:0;top:690px;width:1016px;height:1px;background:#fff"></div>
<div class="a" style="left:0px;top:691px;width:249px;height:26px;border-left:1px solid #fff;border-right:1px solid #ACA899"></div>
<div class="a" style="left:248px;top:691px;width:480px;height:26px;border-left:1px solid #fff;border-right:1px solid #ACA899"></div>
<div class="a" style="left:727px;top:691px;width:188px;height:26px;border-left:1px solid #fff;border-right:1px solid #ACA899"></div>
<div class="a" style="left:2px;top:693px;width:3px;height:22px;border-left:1px solid #fff;border-right:1px solid #ACA899"></div>
<div class="a" style="left:0px;top:692px;width:1px;height:24px;background:#ACA899"></div>
<svg class="ic" style="left:11.0px;top:695.5px;width:16px;height:16px" viewBox="0 0 16 16" shape-rendering="crispEdges"><path d="M1.5 2.5Q4 1 8 2.5Q12 4 14.5 2.5V14Q11 12 8 14Q4 15.5 1.5 14Z" fill="#fff" stroke="#000"/><path d="M2 3L14 3V13Q11 11 8 13Z" fill="#b8d4f4"/></svg>
<svg class="ic" style="left:33.5px;top:695.5px;width:16px;height:16px" viewBox="0 0 16 16" shape-rendering="crispEdges"><path d="M8 1Q5 3 4 9L1.5 12.5Q8 15 14.5 12.5L12 9Q11 3 8 1Z" fill="#b8d4f4" stroke="#000"/><path d="M2 12Q8 10 14 12" fill="#fff" stroke="#000" stroke-width="0.8"/><path d="M8 1V15" stroke="#0000e0" stroke-dasharray="1 1"/></svg>
<svg class="ic" style="left:57.0px;top:695.5px;width:16px;height:16px" viewBox="0 0 16 16" shape-rendering="crispEdges"><path d="M1.5 2.5H7L8 3.5H14.5V14.5H9L8 13.5H1.5Z" fill="#fff" stroke="#000"/><path d="M8 4H14V14H9Z" fill="#b8d4f4"/><path d="M4 8H7M5.5 6.5V9.5M8 8H11M9.5 6.5V9.5" stroke="#0000a0" stroke-width="1.3"/></svg>
<svg class="ic" style="left:80.0px;top:695.5px;width:16px;height:16px" viewBox="0 0 16 16" shape-rendering="crispEdges"><path d="M1.5 2.5H11L15 14.5H3Z" fill="#fff" stroke="#000"/><path d="M8 4H11L14 14H6Z" fill="#b8d4f4"/><path d="M4 7H7M5.5 5.5V8.5M8 7H11M9.5 5.5V8.5" stroke="#0000a0" stroke-width="1.3"/></svg>
<svg class="ic" style="left:103.5px;top:695.5px;width:16px;height:16px" viewBox="0 0 16 16" shape-rendering="crispEdges"><path d="M1.5 5L5.5 2V14L1.5 15ZM10.5 5L14.5 2V14L10.5 15Z" fill="#b8d4f4" stroke="#000"/><path d="M3 8H13M3 11H13M6 4V14M9 4V14" stroke="#000080" stroke-width="1.2"/></svg>
<svg class="ic" style="left:126.0px;top:695.5px;width:16px;height:16px" viewBox="0 0 16 16" shape-rendering="crispEdges"><path d="M1.5 12.5L6 5.5H15L10.5 12.5Z" fill="#fff" stroke="#000"/><path d="M9 6H14L10 12H6Z" fill="#b8d4f4"/></svg>
<svg class="ic" style="left:149.0px;top:695.5px;width:16px;height:16px" viewBox="0 0 16 16" shape-rendering="crispEdges"><path d="M1.5 8L6 4L9 6L14.5 8L9 13Z" fill="#b8d4f4" stroke="#000"/><path d="M1.5 8L5 5L8 8L4 10Z" fill="#fff"/></svg>
<svg class="ic" style="left:171.5px;top:695.5px;width:16px;height:16px" viewBox="0 0 16 16" shape-rendering="crispEdges"><path d="M1.5 9L6 3L9 7L14.5 8L10 14L5 12Z" fill="#b8d4f4" stroke="#000"/><path d="M2 9L6 4L8 7L5 11Z" fill="#fff"/></svg>
<svg class="ic" style="left:194.5px;top:695.5px;width:16px;height:16px" viewBox="0 0 16 16" shape-rendering="crispEdges"><path d="M1.5 7L5 3L8 5L11 4L14.5 8L11 13L7 11L5 12Z" fill="#b8d4f4" stroke="#000"/><path d="M2 7L5 4L7 6L4 9Z" fill="#fff"/><path d="M5 9L12 7" stroke="#0000e0"/></svg>
<svg class="ic" style="left:218.0px;top:695.5px;width:16px;height:16px" viewBox="0 0 16 16" shape-rendering="crispEdges"><rect x="1.5" y="5.5" width="9" height="9" fill="#b8d4f4" stroke="#000" stroke-width="1.3"/><path d="M2 6L10 14H2Z" fill="#fff"/><path d="M5 2.5H14.5V11.5M10.5 5.5L14.5 2M10.5 14L14.5 11" stroke="#000" stroke-dasharray="1 1" fill="none"/></svg>
<div class="a" style="left:254px;top:693px;width:3px;height:22px;border-left:1px solid #fff;border-right:1px solid #ACA899"></div>
<div class="a" style="left:252px;top:692px;width:1px;height:24px;background:#ACA899"></div>
<svg class="ic" style="left:263.0px;top:695.5px;width:16px;height:16px" viewBox="0 0 16 16" shape-rendering="crispEdges"><path d="M1.5 10.5L9 3L14.5 6.5L7 14Z" fill="#ffff00" stroke="#000"/><path d="M1.5 10.5L4 13.5H7" fill="#fff" stroke="#000"/><path d="M1.5 10.5L7 14" stroke="#000"/></svg>
<svg class="ic" style="left:294.0px;top:695.5px;width:16px;height:16px" viewBox="0 0 16 16" shape-rendering="crispEdges"><path d="M4 2L12 14M12 2L4 14" stroke="#0000c0"/><path d="M2 8Q8 2 14 8" stroke="#000" fill="none"/><circle cx="5" cy="12" r="2" fill="none" stroke="#0000c0" stroke-width="1.3"/><circle cx="11" cy="12" r="2" fill="none" stroke="#0000c0" stroke-width="1.3"/></svg>
<svg class="ic" style="left:317.5px;top:695.5px;width:16px;height:16px" viewBox="0 0 16 16" shape-rendering="crispEdges"><path d="M2 15V4M2 2H14" stroke="#000" stroke-width="1.5" stroke-dasharray="1 1"/><path d="M3 14Q3 3 14 3" stroke="#1060c0" stroke-width="2" fill="none"/></svg>
<svg class="ic" style="left:339.0px;top:695.5px;width:16px;height:16px" viewBox="0 0 16 16" shape-rendering="crispEdges"><path d="M3 15Q3 9 6 7Q10 4 14 3" stroke="#808080" stroke-width="3" fill="none"/><path d="M3 15Q3 9 6 7Q10 4 14 3" stroke="#fff" stroke-width="1" fill="none"/><rect x="5" y="6" width="3" height="3" fill="#00c0d0"/><rect x="9" y="3" width="3" height="3" fill="#00c0d0"/></svg>
<svg class="ic" style="left:362.5px;top:695.5px;width:16px;height:16px" viewBox="0 0 16 16" shape-rendering="crispEdges"><path d="M3 13H11Q15 13 15 9Q15 5 11 5" stroke="#000" fill="none"/><path d="M5 13H10" stroke="#000" stroke-width="1.5"/><rect x="1.5" y="11.5" width="3" height="3" fill="#00c0c0" stroke="#006060" stroke-width="0.6"/><rect x="9.5" y="11.5" width="3" height="3" fill="#00c0c0" stroke="#006060" stroke-width="0.6"/><rect x="9.5" y="3.5" width="3" height="3" fill="#00c0c0" stroke="#006060" stroke-width="0.6"/></svg>
<svg class="ic" style="left:386.0px;top:695.5px;width:16px;height:16px" viewBox="0 0 16 16" shape-rendering="crispEdges"><path d="M1 5H9M11 13Q15 13 15 9Q15 5 11 5" stroke="#000" fill="none" stroke-dasharray="1 1"/><path d="M11 13Q15 13 15 9Q15 5 11 5" stroke="#000" fill="none"/><rect x="9.5" y="11.5" width="3" height="3" fill="#00c0c0" stroke="#006060" stroke-width="0.6"/><rect x="9.5" y="3.5" width="3" height="3" fill="#00c0c0" stroke="#006060" stroke-width="0.6"/></svg>
<svg class="ic" style="left:409.0px;top:695.5px;width:16px;height:16px" viewBox="0 0 16 16" shape-rendering="crispEdges"><path d="M3 5H11Q15 5 15 9Q15 13 11 13H3" stroke="#000" fill="none"/><rect x="1.5" y="3.5" width="3" height="3" fill="#00c0c0" stroke="#006060" stroke-width="0.6"/><rect x="9.5" y="3.5" width="3" height="3" fill="#00c0c0" stroke="#006060" stroke-width="0.6"/><rect x="1.5" y="11.5" width="3" height="3" fill="#00c0c0" stroke="#006060" stroke-width="0.6"/><rect x="9.5" y="11.5" width="3" height="3" fill="#00c0c0" stroke="#006060" stroke-width="0.6"/></svg>
<svg class="ic" style="left:440.0px;top:695.5px;width:16px;height:16px" viewBox="0 0 16 16" shape-rendering="crispEdges"><path d="M1 14Q2 8 5 9Q9 11 11 8Q13 4 15 3" stroke="#000" stroke-width="1.2" fill="none"/><rect x="4" y="7.5" width="3" height="3" fill="#2060c0"/></svg>
<svg class="ic" style="left:463.0px;top:695.5px;width:16px;height:16px" viewBox="0 0 16 16" shape-rendering="crispEdges"><path d="M1 14Q2 8 5 9Q9 11 11 8Q13 4 15 3" stroke="#000" stroke-width="1.2" fill="none"/><rect x="4" y="7" width="3" height="3" fill="#e00000"/></svg>
<svg class="ic" style="left:486.0px;top:695.5px;width:16px;height:16px" viewBox="0 0 16 16" shape-rendering="crispEdges"><path d="M1 14Q2 8 5 9Q9 11 11 8Q13 4 15 3" stroke="#000" stroke-width="1.2" fill="none"/><path d="M1 5H9M7 12H15" stroke="#e00000" stroke-width="1.5"/><rect x="5" y="7.5" width="3" height="3" fill="#2060c0"/></svg>
<svg class="ic" style="left:517.0px;top:695.5px;width:16px;height:16px" viewBox="0 0 16 16" shape-rendering="crispEdges"><path d="M6 1H15V7Q11 9 9 7Z" fill="#b8d4f4"/><path d="M1 2Q1 7 5 7H11Q15 7 15 2" stroke="#000080" fill="none"/><path d="M5 4L11 14M11 4L5 14" stroke="#000080"/><circle cx="5.5" cy="12.5" r="1.8" fill="none" stroke="#0000c0" stroke-width="1.3"/><circle cx="10.5" cy="12.5" r="1.8" fill="none" stroke="#0000c0" stroke-width="1.3"/></svg>
<svg class="ic" style="left:540.0px;top:695.5px;width:16px;height:16px" viewBox="0 0 16 16" shape-rendering="crispEdges"><path d="M1 12L5 9L14 10L11 14Z" fill="#fff" stroke="#000"/><path d="M5 9L9 1L15 3L14 10Z" fill="#b8d4f4" stroke="#000"/><circle cx="1.5" cy="12" r="1" fill="#000"/></svg>
<svg class="ic" style="left:563.4px;top:695.5px;width:16px;height:16px" viewBox="0 0 16 16" shape-rendering="crispEdges"><path d="M1 7L5 3L9 6L7 11Z" fill="#fff" stroke="#000"/><path d="M7 11L9 6L14 4L15 10L11 14Z" fill="#b8d4f4" stroke="#000"/></svg>
<svg class="ic" style="left:586.0px;top:695.5px;width:16px;height:16px" viewBox="0 0 16 16" shape-rendering="crispEdges"><path d="M1 12L5 9L14 10L11 14Z" fill="#fff" stroke="#000"/><path d="M5 9L9 1L15 3L14 10Z" fill="#b8d4f4" stroke="#000"/><path d="M5 10L9 4M7 11L11 5M9 12L13 6" stroke="#e00000" stroke-width="1.2"/></svg>
<svg class="ic" style="left:609.0px;top:695.5px;width:16px;height:16px" viewBox="0 0 16 16" shape-rendering="crispEdges"><path d="M1 8L6 4L15 6L13 13L8 14Z" fill="#b8d4f4" stroke="#000"/><path d="M1 8L6 4L8 9Z" fill="#fff"/></svg>
<svg class="ic" style="left:631.6px;top:695.5px;width:16px;height:16px" viewBox="0 0 16 16" shape-rendering="crispEdges"><path d="M1 8L6 3L9 7L7 12Z" fill="#fff" stroke="#000"/><path d="M7 12L9 7L15 8L12 15Z" fill="#b8d4f4" stroke="#000"/><path d="M8 8V12L10 13" stroke="#e00000" stroke-width="1.5" fill="none"/></svg>
<svg class="ic" style="left:654.5px;top:695.5px;width:16px;height:16px" viewBox="0 0 16 16" shape-rendering="crispEdges"><path d="M1 9L6 3L9 6L15 8L10 14L6 12Z" fill="#b8d4f4" stroke="#000"/><path d="M1 9L6 4L8 7L5 11Z" fill="#fff"/><path d="M3 14L14 3" stroke="#0000e0"/></svg>
<svg class="ic" style="left:677.0px;top:695.5px;width:16px;height:16px" viewBox="0 0 16 16" shape-rendering="crispEdges"><path d="M1 8L7 2L15 8L9 14Z" fill="#b8d4f4" stroke="#000"/><path d="M1 8L7 2L9 5L4 11Z" fill="#fff"/><path d="M7 10L13 3M10 3H13V6" stroke="#e00000" stroke-width="1.5" fill="none"/></svg>
<svg class="ic" style="left:700.0px;top:695.5px;width:16px;height:16px" viewBox="0 0 16 16" shape-rendering="crispEdges"><path d="M1 7L7 2L15 8L9 14Z" fill="#b8d4f4" stroke="#000"/><path d="M1 7L7 2L9 5L4 10Z" fill="#fff"/><path d="M4 4L13 12M5 11L12 5" stroke="#000"/></svg>
<div class="a" style="left:286px;top:694px;width:1px;height:20px;background:#ACA899"></div><div class="a" style="left:287px;top:694px;width:1px;height:20px;background:#fff"></div>
<div class="a" style="left:432px;top:694px;width:1px;height:20px;background:#ACA899"></div><div class="a" style="left:433px;top:694px;width:1px;height:20px;background:#fff"></div>
<div class="a" style="left:509px;top:694px;width:1px;height:20px;background:#ACA899"></div><div class="a" style="left:510px;top:694px;width:1px;height:20px;background:#fff"></div>
<div class="a" style="left:736px;top:693px;width:3px;height:22px;border-left:1px solid #fff;border-right:1px solid #ACA899"></div>
<div class="a" style="left:734px;top:692px;width:1px;height:24px;background:#ACA899"></div>
<svg class="ic" style="left:746.0px;top:695.5px;width:16px;height:16px" viewBox="0 0 16 16" shape-rendering="crispEdges"><circle cx="4.5" cy="4.5" r="3.5" fill="#b8d4f4" stroke="#000"/><circle cx="10.5" cy="11" r="3.5" fill="#b8d4f4" stroke="#000"/><path d="M8 2Q11 2 12 5M10 5H12.5V2.5" stroke="#000" fill="none"/></svg>
<svg class="ic" style="left:769.0px;top:695.5px;width:16px;height:16px" viewBox="0 0 16 16" shape-rendering="crispEdges"><path d="M1 9L6 3V9ZM10 9V3L15 9Z" fill="#b8d4f4" stroke="#000"/><path d="M8 1V15" stroke="#000"/><circle cx="8" cy="12.5" r="2.3" fill="#fff" stroke="#000"/><path d="M5 3Q8 0 11 3" stroke="#000" fill="none"/></svg>
<svg class="ic" style="left:792.6px;top:695.5px;width:16px;height:16px" viewBox="0 0 16 16" shape-rendering="crispEdges"><path d="M4 4Q8 0 12 4L14 13Q8 16 2 13Z" fill="#b8d4f4" stroke="#000"/><path d="M6 5Q8 3 10 5L11 13Q8 14 5 13Z" fill="#fff"/><path d="M8 1V15" stroke="#0000e0" stroke-dasharray="1 1"/></svg>
<svg class="ic" style="left:814.6px;top:695.5px;width:16px;height:16px" viewBox="0 0 16 16" shape-rendering="crispEdges"><path d="M1.5 14.5L7 2V14.5ZM9 2L14.5 14.5H9Z" fill="#b8d4f4" stroke="#000"/><path d="M8 0V16" stroke="#0060a0" stroke-width="1.3"/></svg>
<svg class="ic" style="left:837.5px;top:695.5px;width:16px;height:16px" viewBox="0 0 16 16" shape-rendering="crispEdges"><path d="M4 6Q4 2 8 2Q12 2 12 6V11L14.5 13.5H1.5L4 11Z" fill="#b8d4f4" stroke="#000"/><path d="M8 0V16" stroke="#0000e0" stroke-width="1.2"/></svg>
<svg class="ic" style="left:861.0px;top:695.5px;width:16px;height:16px" viewBox="0 0 16 16" shape-rendering="crispEdges"><rect x="2.5" y="2.5" width="4" height="4" fill="#fff" stroke="#000" stroke-width="1.3"/><rect x="9.5" y="2.5" width="4" height="4" fill="#fff" stroke="#000" stroke-width="1.3"/><rect x="2.5" y="9.5" width="4" height="4" fill="#fff" stroke="#000" stroke-width="1.3"/><rect x="9.5" y="9.5" width="4" height="4" fill="#fff" stroke="#000" stroke-width="1.3"/></svg>
<svg class="ic" style="left:883.6px;top:695.5px;width:16px;height:16px" viewBox="0 0 16 16" shape-rendering="crispEdges"><rect x="5.5" y="1.5" width="9" height="8" fill="#fff" stroke="#000"/><rect x="1.5" y="6.5" width="8" height="8" fill="#b8d4f4" stroke="#000"/><path d="M2 7H9L2 14Z" fill="#fff"/><path d="M9 5L13 3M11 3H13V5" stroke="#000" fill="none"/></svg>
<div class="a" style="left:0;top:716px;width:1016px;height:1px;background:#ACA899"></div>
<div class="a" style="left:0;top:717px;width:1016px;height:1px;background:#fff"></div>
<div class="a" style="left:0;top:718px;width:1016px;height:18px;background:#fcfcf9"></div>
<svg class="a" style="left:0px;top:721px" width="34" height="16" viewBox="0 0 34 16" shape-rendering="crispEdges"><path d="M4 0h3v1h-3zM17 0h2v1h-2zM3 1h2v1h-2zM7 1h2v1h-2zM16 1h1v1h-1zM19 1h1v1h-1zM1 2h2v1h-2zM4 2h4v1h-4zM9 2h2v1h-2zM14 2h2v1h-2zM17 2h1v1h-1zM20 2h2v1h-2zM13 3h2v1h-2zM18 3h1v1h-1zM22 3h2v1h-2zM2 4h3v1h-3zM6 4h5v1h-5zM18 4h1v1h-1zM27 4h1v1h-1zM1 5h1v1h-1zM4 5h1v1h-1zM6 5h1v1h-1zM10 5h1v1h-1zM14 5h8v1h-8zM27 5h1v1h-1zM1 6h1v1h-1zM4 6h1v1h-1zM6 6h1v1h-1zM10 6h1v1h-1zM20 6h1v1h-1zM1 7h1v1h-1zM4 7h1v1h-1zM6 7h1v1h-1zM10 7h1v1h-1zM16 7h1v1h-1zM19 7h1v1h-1zM2 8h3v1h-3zM6 8h1v1h-1zM8 8h2v1h-2zM16 8h3v1h-3zM6 9h1v1h-1zM18 9h1v1h-1zM27 9h1v1h-1zM6 10h1v1h-1zM19 10h1v1h-1zM27 10h1v1h-1z" fill="#000"/></svg>
<div class="a" style="left:446px;top:719px;width:570px;height:17px;background:#fff"></div>
<div class="a" style="left:446px;top:719px;width:266px;height:17px;border-left:2px solid #d8d4c4;border-top:2px solid #d8d4c4;border-right:1px solid #ECE9D8"></div>
<div class="a" style="left:712px;top:719px;width:101px;height:17px;border-left:2px solid #d8d4c4;border-top:2px solid #d8d4c4;border-right:1px solid #ECE9D8"></div>
<div class="a" style="left:813px;top:719px;width:199px;height:17px;border-left:2px solid #d8d4c4;border-top:2px solid #d8d4c4;border-right:1px solid #ECE9D8"></div>
<svg class="a" style="left:738px;top:721px" width="52" height="16" viewBox="0 0 52 16" shape-rendering="crispEdges"><path d="M27 0h1v1h-1zM31 0h1v1h-1zM41 0h1v1h-1zM1 1h10v1h-10zM15 1h7v1h-7zM27 1h1v1h-1zM31 1h1v1h-1zM33 1h1v1h-1zM41 1h1v1h-1zM5 2h1v1h-1zM15 2h7v1h-7zM25 2h1v1h-1zM27 2h1v1h-1zM31 2h1v1h-1zM34 2h1v1h-1zM37 2h10v1h-10zM5 3h1v1h-1zM14 3h1v1h-1zM21 3h1v1h-1zM25 3h1v1h-1zM27 3h1v1h-1zM31 3h1v1h-1zM41 3h2v1h-2zM5 4h1v1h-1zM15 4h7v1h-7zM27 4h8v1h-8zM40 4h1v1h-1zM43 4h1v1h-1zM5 5h1v1h-1zM14 5h1v1h-1zM21 5h1v1h-1zM27 5h1v1h-1zM31 5h1v1h-1zM39 5h3v1h-3zM44 5h1v1h-1zM5 6h1v1h-1zM15 6h7v1h-7zM27 6h1v1h-1zM31 6h1v1h-1zM37 6h2v1h-2zM42 6h1v1h-1zM45 6h2v1h-2zM5 7h1v1h-1zM14 7h1v1h-1zM21 7h1v1h-1zM25 7h3v1h-3zM30 7h1v1h-1zM32 7h1v1h-1zM41 7h1v1h-1zM5 8h1v1h-1zM13 8h10v1h-10zM24 8h2v1h-2zM27 8h1v1h-1zM30 8h1v1h-1zM32 8h1v1h-1zM38 8h2v1h-2zM42 8h1v1h-1zM45 8h1v1h-1zM5 9h1v1h-1zM15 9h1v1h-1zM19 9h2v1h-2zM27 9h1v1h-1zM30 9h1v1h-1zM33 9h1v1h-1zM37 9h1v1h-1zM39 9h1v1h-1zM46 9h1v1h-1zM1 10h10v1h-10zM14 10h2v1h-2zM21 10h1v1h-1zM27 10h1v1h-1zM29 10h1v1h-1zM33 10h2v1h-2zM37 10h1v1h-1zM39 10h1v1h-1zM44 10h1v1h-1zM46 10h1v1h-1zM13 11h1v1h-1zM22 11h1v1h-1zM27 11h2v1h-2zM34 11h1v1h-1zM37 11h1v1h-1zM40 11h5v1h-5zM46 11h1v1h-1z" fill="#808080"/></svg>
<svg class="a" style="left:816px;top:721px" width="46" height="16" viewBox="0 0 46 16" shape-rendering="crispEdges"><path d="M1 3h1v1h-1zM5 3h1v1h-1zM18 3h2v1h-2zM23 3h2v1h-2zM37 3h5v1h-5zM1 4h2v1h-2zM4 4h2v1h-2zM19 4h1v1h-1zM23 4h1v1h-1zM41 4h1v1h-1zM2 5h1v1h-1zM4 5h1v1h-1zM20 5h1v1h-1zM22 5h1v1h-1zM40 5h1v1h-1zM3 6h1v1h-1zM21 6h1v1h-1zM39 6h1v1h-1zM2 7h3v1h-3zM21 7h1v1h-1zM38 7h2v1h-2zM2 8h1v1h-1zM4 8h1v1h-1zM21 8h1v1h-1zM38 8h1v1h-1zM1 9h1v1h-1zM5 9h1v1h-1zM8 9h2v1h-2zM21 9h1v1h-1zM26 9h2v1h-2zM37 9h1v1h-1zM1 10h1v1h-1zM5 10h1v1h-1zM8 10h1v1h-1zM21 10h1v1h-1zM26 10h1v1h-1zM36 10h7v1h-7zM8 11h1v1h-1zM26 11h1v1h-1zM7 12h1v1h-1zM25 12h1v1h-1z" fill="#000"/></svg></body></html>
